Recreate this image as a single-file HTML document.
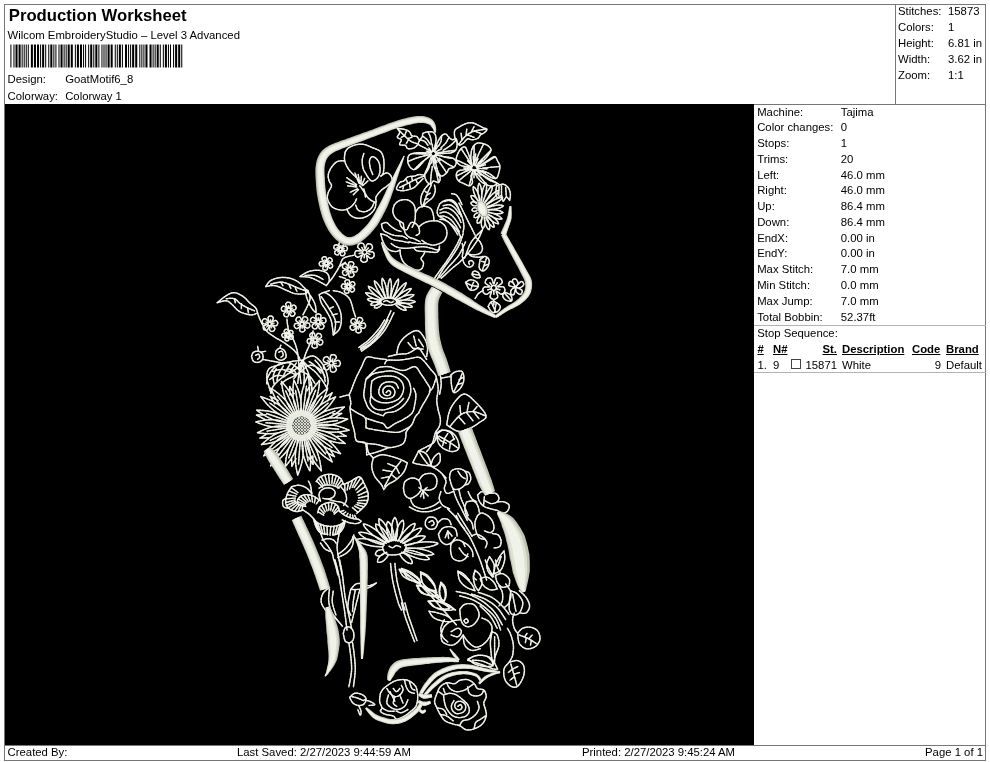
<!DOCTYPE html>
<html><head><meta charset="utf-8"><title>Production Worksheet</title>
<style>
html,body{margin:0;padding:0;background:#fff;}
body{width:990px;height:762px;position:relative;overflow:hidden;font-family:"Liberation Sans",sans-serif;color:#000;}
.abs{position:absolute;}
.t{position:absolute;font-size:11.33px;line-height:14px;height:14px;white-space:nowrap;}
.ttl{font-size:16.7px;font-weight:bold;line-height:20px;height:20px;}
.u{font-weight:bold;text-decoration:underline;}
.ln{position:absolute;background:#777;}
</style></head><body>

<div class="ln" style="left:4px;top:4px;width:982px;height:1px"></div>
<div class="ln" style="left:4px;top:4px;width:1px;height:757px"></div>
<div class="ln" style="left:985px;top:4px;width:1px;height:757px"></div>
<div class="ln" style="left:4px;top:760px;width:982px;height:1px"></div>
<div class="ln" style="left:4px;top:745px;width:982px;height:1px"></div>
<div class="ln" style="left:895px;top:4px;width:1px;height:100px"></div>
<div class="ln" style="left:754px;top:103.5px;width:232px;height:1px"></div>
<div class="ln" style="left:754px;top:325px;width:232px;height:1px;background:#b4b4b4"></div>
<div class="ln" style="left:754px;top:372px;width:232px;height:1px;background:#b4b4b4"></div>
<div id="txt" style="position:absolute;left:0;top:0;width:990px;height:762px;will-change:transform">
<div class="t ttl" style="left:8.8px;top:5.8px">Production Worksheet</div>
<div class="t " style="top:27.60px;left:7.60px;">Wilcom EmbroideryStudio – Level 3 Advanced</div>
<svg class="abs" style="left:0;top:0" width="200" height="70" viewBox="0 0 200 70"><g fill="#000"><rect x="10.40" y="44.5" width="1.02" height="23"/><rect x="13.47" y="44.5" width="1.02" height="23"/><rect x="15.51" y="44.5" width="2.05" height="23"/><rect x="18.58" y="44.5" width="2.05" height="23"/><rect x="21.65" y="44.5" width="1.02" height="23"/><rect x="23.70" y="44.5" width="1.02" height="23"/><rect x="25.74" y="44.5" width="1.02" height="23"/><rect x="27.79" y="44.5" width="1.02" height="23"/><rect x="30.86" y="44.5" width="2.05" height="23"/><rect x="33.93" y="44.5" width="2.05" height="23"/><rect x="37.00" y="44.5" width="2.05" height="23"/><rect x="40.07" y="44.5" width="1.02" height="23"/><rect x="42.11" y="44.5" width="2.05" height="23"/><rect x="45.18" y="44.5" width="1.02" height="23"/><rect x="48.25" y="44.5" width="1.02" height="23"/><rect x="50.30" y="44.5" width="2.05" height="23"/><rect x="53.37" y="44.5" width="1.02" height="23"/><rect x="55.41" y="44.5" width="1.02" height="23"/><rect x="58.48" y="44.5" width="1.02" height="23"/><rect x="60.53" y="44.5" width="2.05" height="23"/><rect x="63.60" y="44.5" width="1.02" height="23"/><rect x="65.64" y="44.5" width="1.02" height="23"/><rect x="67.69" y="44.5" width="2.05" height="23"/><rect x="70.76" y="44.5" width="2.05" height="23"/><rect x="74.85" y="44.5" width="1.02" height="23"/><rect x="76.90" y="44.5" width="2.05" height="23"/><rect x="79.96" y="44.5" width="2.05" height="23"/><rect x="83.03" y="44.5" width="1.02" height="23"/><rect x="85.08" y="44.5" width="1.02" height="23"/><rect x="88.15" y="44.5" width="1.02" height="23"/><rect x="90.19" y="44.5" width="2.05" height="23"/><rect x="93.26" y="44.5" width="1.02" height="23"/><rect x="95.31" y="44.5" width="2.05" height="23"/><rect x="98.38" y="44.5" width="1.02" height="23"/><rect x="101.45" y="44.5" width="1.02" height="23"/><rect x="103.49" y="44.5" width="1.02" height="23"/><rect x="105.54" y="44.5" width="1.02" height="23"/><rect x="107.59" y="44.5" width="2.05" height="23"/><rect x="110.65" y="44.5" width="2.05" height="23"/><rect x="114.75" y="44.5" width="1.02" height="23"/><rect x="116.79" y="44.5" width="1.02" height="23"/><rect x="118.84" y="44.5" width="2.05" height="23"/><rect x="121.91" y="44.5" width="1.02" height="23"/><rect x="124.98" y="44.5" width="2.05" height="23"/><rect x="128.05" y="44.5" width="1.02" height="23"/><rect x="130.09" y="44.5" width="1.02" height="23"/><rect x="132.14" y="44.5" width="2.05" height="23"/><rect x="135.21" y="44.5" width="2.05" height="23"/><rect x="139.30" y="44.5" width="1.02" height="23"/><rect x="141.34" y="44.5" width="1.02" height="23"/><rect x="143.39" y="44.5" width="1.02" height="23"/><rect x="145.44" y="44.5" width="2.05" height="23"/><rect x="149.53" y="44.5" width="2.05" height="23"/><rect x="152.60" y="44.5" width="1.02" height="23"/><rect x="154.64" y="44.5" width="1.02" height="23"/><rect x="156.69" y="44.5" width="2.05" height="23"/><rect x="159.76" y="44.5" width="1.02" height="23"/><rect x="162.83" y="44.5" width="1.02" height="23"/><rect x="164.87" y="44.5" width="2.05" height="23"/><rect x="167.94" y="44.5" width="1.02" height="23"/><rect x="169.99" y="44.5" width="1.02" height="23"/><rect x="173.06" y="44.5" width="1.02" height="23"/><rect x="175.10" y="44.5" width="2.05" height="23"/><rect x="178.17" y="44.5" width="2.05" height="23"/><rect x="181.24" y="44.5" width="1.02" height="23"/></g></svg>
<div class="t " style="top:72.30px;left:7.60px;">Design:</div>
<div class="t " style="top:72.30px;left:65.20px;">GoatMotif6_8</div>
<div class="t " style="top:88.80px;left:7.60px;">Colorway:</div>
<div class="t " style="top:88.80px;left:65.20px;">Colorway 1</div>
<div class="t " style="top:4.20px;left:898.00px;">Stitches:</div>
<div class="t " style="top:4.20px;left:948.00px;">15873</div>
<div class="t " style="top:20.05px;left:898.00px;">Colors:</div>
<div class="t " style="top:20.05px;left:948.00px;">1</div>
<div class="t " style="top:35.90px;left:898.00px;">Height:</div>
<div class="t " style="top:35.90px;left:948.00px;">6.81 in</div>
<div class="t " style="top:51.75px;left:898.00px;">Width:</div>
<div class="t " style="top:51.75px;left:948.00px;">3.62 in</div>
<div class="t " style="top:67.60px;left:898.00px;">Zoom:</div>
<div class="t " style="top:67.60px;left:948.00px;">1:1</div>
<div class="t " style="top:104.50px;left:757.20px;">Machine:</div>
<div class="t " style="top:104.50px;left:840.80px;">Tajima</div>
<div class="t " style="top:120.27px;left:757.20px;">Color changes:</div>
<div class="t " style="top:120.27px;left:840.80px;">0</div>
<div class="t " style="top:136.04px;left:757.20px;">Stops:</div>
<div class="t " style="top:136.04px;left:840.80px;">1</div>
<div class="t " style="top:151.81px;left:757.20px;">Trims:</div>
<div class="t " style="top:151.81px;left:840.80px;">20</div>
<div class="t " style="top:167.58px;left:757.20px;">Left:</div>
<div class="t " style="top:167.58px;left:840.80px;">46.0 mm</div>
<div class="t " style="top:183.35px;left:757.20px;">Right:</div>
<div class="t " style="top:183.35px;left:840.80px;">46.0 mm</div>
<div class="t " style="top:199.12px;left:757.20px;">Up:</div>
<div class="t " style="top:199.12px;left:840.80px;">86.4 mm</div>
<div class="t " style="top:214.89px;left:757.20px;">Down:</div>
<div class="t " style="top:214.89px;left:840.80px;">86.4 mm</div>
<div class="t " style="top:230.66px;left:757.20px;">EndX:</div>
<div class="t " style="top:230.66px;left:840.80px;">0.00 in</div>
<div class="t " style="top:246.43px;left:757.20px;">EndY:</div>
<div class="t " style="top:246.43px;left:840.80px;">0.00 in</div>
<div class="t " style="top:262.20px;left:757.20px;">Max Stitch:</div>
<div class="t " style="top:262.20px;left:840.80px;">7.0 mm</div>
<div class="t " style="top:277.97px;left:757.20px;">Min Stitch:</div>
<div class="t " style="top:277.97px;left:840.80px;">0.0 mm</div>
<div class="t " style="top:293.74px;left:757.20px;">Max Jump:</div>
<div class="t " style="top:293.74px;left:840.80px;">7.0 mm</div>
<div class="t " style="top:309.51px;left:757.20px;">Total Bobbin:</div>
<div class="t " style="top:309.51px;left:840.80px;">52.37ft</div>
<div class="t " style="top:325.90px;left:757.20px;">Stop Sequence:</div>
<div class="t u" style="top:341.90px;left:757.50px;">#</div>
<div class="t u" style="top:341.90px;left:773.00px;">N#</div>
<div class="t u" style="top:341.90px;right:153.00px;">St.</div>
<div class="t u" style="top:341.90px;left:842.00px;">Description</div>
<div class="t u" style="top:341.90px;left:912.00px;">Code</div>
<div class="t u" style="top:341.90px;left:946.00px;">Brand</div>
<div class="t " style="top:357.80px;left:757.50px;">1.</div>
<div class="t " style="top:357.80px;left:773.00px;">9</div>
<div class="abs" style="left:791px;top:359px;width:8px;height:8px;border:1px solid #444;background:#fff"></div>
<div class="t " style="top:357.80px;right:153.00px;">15871</div>
<div class="t " style="top:357.80px;left:842.00px;">White</div>
<div class="t " style="top:357.80px;right:49.00px;">9</div>
<div class="t " style="top:357.80px;left:946.00px;">Default</div>
<div class="t " style="top:744.60px;left:7.60px;">Created By:</div>
<div class="t " style="top:744.60px;left:237.00px;">Last Saved: 2/27/2023 9:44:59 AM</div>
<div class="t " style="top:744.60px;left:582.00px;">Printed: 2/27/2023 9:45:24 AM</div>
<div class="t " style="top:744.60px;right:7.00px;">Page 1 of 1</div>
</div>
<svg class="abs" style="left:5px;top:104px" width="749" height="641" viewBox="5 104 749 641">
<rect x="5" y="104" width="749" height="641" fill="#000"/>
<defs><path id="thinlines" d="M315.4 425.7Q329.9 421.6 349.1 430.2Q328.6 435.0 315.2 428.2 M315.3 427.0 L338.6 429.2 M314.8 429.7Q329.5 429.9 345.2 443.5Q324.4 442.2 313.8 432.1 M314.4 430.9 L335.6 439.5 M313.5 432.7Q328.1 436.5 340.5 453.7Q320.2 447.5 312.0 434.8 M312.8 433.8 L331.9 447.5 M311.4 435.4Q324.5 442.4 332.2 461.9Q314.3 451.1 309.5 437.1 M310.5 436.3 L325.4 453.9 M308.2 437.8Q319.4 449.2 321.4 470.9Q306.7 454.8 305.9 438.9 M307.1 438.4 L317.0 460.9 M305.2 439.1Q312.7 450.9 309.9 471.0Q300.0 453.3 302.7 439.5 M304.0 439.4 L308.1 461.0 M301.6 439.6Q306.2 455.0 297.7 475.1Q292.3 454.0 299.1 439.4 M300.3 439.6 L298.5 464.2 M297.5 439.0Q297.7 452.0 285.2 466.9Q286.2 447.4 295.1 438.1 M296.3 438.6 L288.8 457.8 M294.0 437.5Q289.1 453.4 270.6 465.9Q277.8 444.8 291.9 435.9 M292.9 436.7 L277.4 457.0 M291.3 435.3Q283.6 448.5 263.7 455.8Q275.2 438.0 289.7 433.3 M290.5 434.4 L272.0 449.2 M289.4 432.7Q280.8 442.3 261.5 444.6Q275.5 431.1 288.3 430.4 M288.8 431.6 L270.3 440.4 M287.8 429.1Q276.8 435.9 257.5 432.7Q274.8 423.6 287.4 426.6 M287.6 427.8 L267.1 431.1 M287.4 425.7Q274.3 429.8 255.8 421.9Q275.3 417.0 287.6 423.2 M287.4 424.5 L265.8 422.7 M287.8 422.2Q273.2 422.8 256.7 410.1Q277.5 410.3 288.6 419.8 M288.2 421.0 L266.6 413.5 M289.3 418.5Q273.7 414.4 260.8 396.6Q281.8 403.0 290.8 416.5 M290.0 417.5 L269.7 403.0 M291.6 415.6Q278.3 408.0 270.7 388.0Q288.8 399.4 293.6 414.0 M292.6 414.8 L277.5 396.3 M294.5 413.4Q283.5 402.5 281.4 381.3Q295.9 396.9 296.8 412.4 M295.6 412.8 L285.8 391.0 M297.9 412.1Q290.7 400.2 293.9 380.2Q303.4 398.1 300.4 411.6 M299.1 411.8 L295.5 390.2 M301.9 411.6Q298.2 395.2 308.0 375.1Q312.3 397.1 304.5 411.9 M303.2 411.7 L306.5 386.2 M305.4 412.2Q305.7 396.5 319.7 380.2Q318.4 401.7 307.8 413.1 M306.6 412.6 L315.6 390.2 M308.4 413.5Q311.5 400.1 327.7 388.2Q322.0 407.5 310.5 414.9 M309.4 414.1 L321.9 396.4 M311.3 415.7Q317.3 404.1 335.6 396.9Q325.3 413.7 312.9 417.6 M312.1 416.6 L328.0 403.2 M313.7 418.9Q323.9 408.7 344.4 407.0Q329.1 420.8 314.7 421.2 M314.3 420.1 L334.9 411.1 M315.0 422.4Q327.5 415.3 347.7 419.0Q329.3 428.3 315.4 424.9 M315.3 423.6 L337.5 420.5 M337.7 431.7 L346.2 436.1 L336.6 436.4 M329.5 448.7 L334.5 456.7 L326.2 452.2 M312.8 456.0 L313.1 464.4 L308.7 457.2 M295.9 458.6 L291.8 466.3 L291.6 457.6 M278.1 453.9 L270.0 459.0 L274.6 450.6 M269.0 437.7 L260.0 438.1 L267.7 433.4 M265.0 419.5 L256.4 415.0 L266.1 414.8 M274.9 403.8 L270.2 396.3 L278.0 400.5 M289.9 394.9 L289.6 386.4 L294.0 393.7 M307.2 390.7 L311.5 382.6 L311.7 391.8 M324.3 397.8 L332.2 392.8 L327.7 401.0 M333.0 413.8 L341.7 413.4 L334.2 418.0 M386.2 359.4 L384.8 359.3 L382.8 359.1 L380.6 358.8 L378.2 358.5 L376.1 358.3 L374.1 357.9 L372.1 357.4 L370.1 356.9 L368.3 356.8 L366.7 357.3 L365.4 358.4 L364.4 360.2 L363.5 362.2 L362.6 364.5 L361.7 366.7 L360.5 368.8 L359.4 371.0 L358.2 373.4 L357.0 375.8 L355.9 378.2 L354.8 380.9 L353.6 383.7 L352.6 386.6 L351.6 389.2 L350.8 391.2 L350.3 392.4 L349.9 393.1 L349.6 393.5 L349.4 394.0 L349.4 394.8 L349.5 396.2 L349.9 397.8 L350.3 399.5 L350.6 401.2 L350.8 402.7 L350.8 403.9 L350.6 404.9 L350.3 405.9 L350.1 407.0 L350.1 408.5 L350.2 410.5 L350.5 412.7 L350.8 415.2 L351.1 417.7 L351.5 420.1 L352.0 422.4 L352.6 424.8 L353.3 427.2 L353.9 429.4 L354.4 431.6 L354.8 433.7 L355.0 435.9 L355.3 437.9 L355.8 439.6 L356.6 441.0 L358.0 441.7 L359.9 441.9 L362.0 442.0 L363.9 442.2 L365.3 443.2 L366.0 445.1 L366.4 447.7 L366.6 450.6 L366.6 453.1 L366.7 454.9 M384.8 363.8 L385.0 363.2 L385.4 362.4 L385.8 361.5 L386.6 360.7 L387.6 360.2 L389.2 360.0 L391.1 360.0 L393.3 360.1 L395.5 360.2 L397.7 360.2 L400.0 360.0 L402.4 359.7 L404.8 359.4 L407.1 359.0 L409.3 358.7 L411.4 358.3 L413.4 357.9 L415.3 357.4 L417.1 357.2 L418.7 357.3 L420.1 357.7 L421.2 358.4 L422.3 359.4 L423.4 360.5 L424.5 361.6 L425.6 362.9 L426.8 364.3 L427.9 365.8 L429.1 367.3 L430.2 368.8 L431.5 370.3 L432.9 371.7 L434.2 373.2 L435.3 374.6 L436.0 376.0 L436.2 377.4 L436.0 378.7 L435.5 380.0 L435.0 381.3 L434.6 382.5 L434.2 383.8 L433.8 385.0 L433.3 386.2 L432.9 387.4 L432.4 388.3 L431.8 389.1 L431.2 389.8 L430.5 390.4 L429.9 390.8 L429.5 391.2 M388.4 356.5 L389.6 356.2 L391.4 355.8 L393.5 355.3 L395.7 354.8 L397.7 354.4 L399.8 354.2 L401.9 354.0 L404.0 353.9 L406.0 353.8 L407.9 353.4 L409.5 352.7 L411.1 351.8 L412.6 350.9 L413.9 350.0 L415.1 349.3 L416.0 348.8 L416.7 348.2 L417.4 347.8 L418.0 347.7 L418.7 347.9 L419.5 348.6 L420.4 349.7 L421.3 351.0 L422.2 352.4 L423.0 353.7 L423.8 354.9 L424.7 356.2 L425.5 357.5 L426.1 358.7 L426.6 359.4 M436.0 376.0 L436.4 377.7 L436.9 380.1 L437.5 382.9 L437.9 385.7 L438.2 388.3 L438.1 390.7 L437.7 393.0 L437.3 395.4 L436.9 397.7 L436.7 399.9 L436.8 402.0 L437.1 404.1 L437.4 406.1 L437.8 408.1 L438.2 410.0 L438.6 411.8 L439.1 413.6 L439.6 415.3 L440.1 417.0 L440.3 418.6 L440.4 420.2 L440.4 421.6 L440.3 423.0 L440.0 424.4 L439.6 425.8 L439.0 427.2 L438.1 428.6 L437.1 430.0 L436.1 431.4 L435.3 433.1 L434.7 434.9 L434.2 437.0 L433.7 439.1 L433.1 441.2 L432.4 443.2 L431.3 445.1 L430.0 447.2 L428.7 449.1 L427.4 450.7 L426.6 451.8 M374.6 370.3 L375.1 369.8 L375.8 369.2 L376.6 368.5 L377.7 367.9 L379.0 367.4 L380.7 367.0 L382.7 366.8 L384.9 366.6 L387.1 366.5 L389.1 366.7 L390.9 367.0 L392.7 367.7 L394.5 368.4 L396.1 369.0 L397.7 369.5 L399.2 369.9 L400.6 370.2 L401.9 370.4 L403.4 370.4 L405.0 370.3 L406.9 369.6 L409.0 368.6 L411.2 367.5 L413.3 366.8 L415.1 366.7 L416.5 367.4 L417.7 368.7 L418.7 370.4 L419.8 372.2 L420.8 373.9 L422.0 375.5 L423.3 377.3 L424.5 379.1 L425.6 380.9 L426.6 382.5 L427.6 384.0 L428.6 385.5 L429.4 386.8 L430.0 388.2 L430.2 389.8 L430.0 391.4 L429.3 393.2 L428.5 395.0 L427.5 396.8 L426.6 398.4 L425.8 400.0 L424.9 401.4 L424.0 402.8 L423.1 404.2 L422.3 405.6 L421.5 407.2 L420.6 408.9 L419.8 410.5 L419.2 411.9 L418.7 412.9 M374.6 370.3 L373.8 371.1 L372.6 372.3 L371.3 373.6 L369.9 374.9 L368.9 376.0 L368.1 376.8 L367.4 377.4 L366.9 377.9 L366.4 378.6 L366.0 379.6 L365.6 381.1 L365.3 382.8 L365.0 384.7 L364.8 386.6 L364.5 388.3 L364.3 389.8 L364.1 391.3 L363.9 392.7 L363.8 394.1 L363.8 395.5 L364.1 397.0 L364.4 398.5 L364.9 400.0 L365.5 401.4 L366.0 402.7 L366.5 404.0 L366.9 405.2 L367.5 406.4 L368.1 407.5 L368.9 408.5 L369.8 409.5 L370.8 410.4 L372.0 411.3 L373.3 412.1 L374.6 412.9 L376.3 413.6 L378.3 414.2 L380.3 414.9 L382.1 415.4 L383.3 415.7 M350.1 408.5 L351.1 409.1 L352.4 409.9 L354.0 410.9 L355.7 411.9 L357.3 412.9 L359.0 413.8 L360.8 414.7 L362.6 415.6 L364.1 416.7 L365.3 417.9 L365.9 419.4 L366.1 421.1 L366.0 422.9 L366.0 424.6 L366.0 425.8 L366.0 426.6 L365.8 427.1 L365.7 427.4 L365.9 427.7 L366.7 428.0 L368.2 428.5 L370.3 428.9 L372.8 429.4 L375.3 429.8 L377.5 430.2 L379.6 430.5 L381.6 430.8 L383.6 431.1 L385.6 431.4 L387.6 431.6 L389.7 431.9 L391.8 432.1 L393.9 432.3 L395.9 432.4 L397.7 432.3 L399.4 432.0 L400.9 431.5 L402.3 430.9 L403.6 430.2 L405.0 429.5 L406.4 428.7 L407.8 428.0 L409.1 427.2 L410.4 426.2 L411.5 425.1 L412.4 423.7 L413.1 422.0 L413.8 420.3 L414.4 418.6 L415.1 417.2 L415.8 416.0 L416.7 415.0 L417.5 414.1 L418.2 413.4 L418.7 412.9 M365.3 417.9 L366.8 418.4 L369.0 419.2 L371.5 420.0 L374.0 420.8 L376.1 421.5 L377.8 422.0 L379.4 422.4 L380.8 422.7 L382.1 423.1 L383.3 423.7 L384.3 424.5 L385.1 425.7 L385.8 426.8 L386.6 427.7 L387.6 428.0 L388.9 427.7 L390.2 426.9 L391.7 425.8 L393.3 424.7 L394.9 423.7 L396.5 422.8 L398.2 422.0 L400.0 421.2 L401.8 420.4 L403.5 419.3 L405.3 418.2 L407.3 417.1 L409.1 415.8 L410.8 414.4 L412.2 412.9 L413.2 411.0 L413.9 409.0 L414.3 406.9 L414.7 404.7 L415.1 402.7 L415.4 400.9 L415.7 399.0 L415.8 397.3 L415.9 395.6 L415.8 394.1 L415.5 392.7 L415.0 391.3 L414.5 390.1 L414.0 389.0 L413.6 388.3 M356.6 441.0 L357.8 441.3 L359.6 441.7 L361.6 442.2 L363.8 442.7 L366.0 443.2 L368.2 443.5 L370.4 443.7 L372.8 444.0 L375.2 444.2 L377.5 444.6 L379.9 445.2 L382.3 445.9 L384.7 446.6 L387.0 447.2 L389.1 447.5 L391.0 447.5 L392.9 447.3 L394.6 446.9 L396.2 446.5 L397.7 446.1 L399.1 445.6 L400.4 445.1 L401.6 444.6 L402.6 444.0 L403.5 443.2 L404.2 442.2 L404.7 441.1 L405.1 439.8 L405.4 438.6 L405.7 437.4 L405.9 436.2 L405.9 435.1 L405.9 434.0 L406.0 432.8 L406.4 431.6 L407.2 430.3 L408.4 428.8 L409.6 427.3 L410.7 426.0 L411.5 425.1 M366.7 454.9 L368.2 454.5 L370.2 453.9 L372.6 453.3 L375.1 452.6 L377.5 451.8 L380.0 451.0 L382.7 450.0 L385.3 449.0 L387.5 448.1 L389.1 447.5 M386.2 392.6 L386.5 392.3 L386.9 391.8 L387.4 391.2 L387.9 390.7 L388.4 390.5 L388.8 390.5 L389.4 390.7 L389.9 391.1 L390.3 391.5 L390.5 391.9 L390.6 392.4 L390.6 393.1 L390.4 393.7 L390.2 394.3 L389.8 394.8 L389.3 395.1 L388.5 395.4 L387.7 395.6 L386.9 395.6 L386.2 395.5 L385.5 395.3 L384.9 395.0 L384.2 394.5 L383.7 394.0 L383.3 393.4 L383.1 392.6 L382.9 391.7 L382.9 390.8 L383.0 389.8 L383.3 389.0 L383.8 388.3 L384.4 387.6 L385.2 387.0 L386.0 386.5 L386.9 386.1 L387.9 386.0 L388.9 386.0 L390.0 386.1 L391.1 386.4 L392.0 386.9 L392.8 387.5 L393.5 388.3 L394.1 389.2 L394.6 390.2 L394.9 391.2 L394.9 392.2 L394.8 393.3 L394.5 394.4 L394.0 395.4 L393.4 396.2 L392.6 396.9 L391.7 397.5 L390.6 397.9 L389.5 398.2 L388.4 398.4 L387.2 398.5 L386.0 398.5 L384.8 398.4 L383.6 398.1 L382.6 397.7 L381.7 397.1 L380.8 396.3 L380.0 395.4 L379.4 394.4 L379.0 393.4 L378.8 392.3 L378.8 391.1 L379.0 389.9 L379.3 388.7 L379.7 387.6 L380.2 386.6 L380.8 385.6 L381.5 384.7 L382.4 383.9 L383.3 383.3 L384.4 382.7 L385.7 382.3 L387.1 382.0 L388.5 381.9 L389.8 381.8 L391.1 381.9 L392.3 382.0 L393.5 382.3 L394.6 382.7 L395.6 383.3 L396.4 384.1 L397.1 385.3 L397.7 386.5 L398.1 387.6 L398.5 388.3 M371.8 381.1 L372.5 380.6 L373.5 379.8 L374.7 378.9 L376.1 378.1 L377.5 377.5 L379.1 377.0 L380.8 376.6 L382.6 376.4 L384.4 376.2 L386.2 376.0 L388.0 376.0 L389.8 376.0 L391.6 376.2 L393.3 376.4 L394.9 376.8 L396.2 377.3 L397.5 377.9 L398.7 378.6 L399.7 379.5 L400.6 380.4 L401.5 381.4 L402.2 382.5 L402.8 383.7 L403.2 384.9 L403.5 386.1 L403.7 387.4 L403.6 388.7 L403.5 390.1 L403.2 391.4 L402.8 392.6 L402.3 393.9 L401.7 395.1 L401.0 396.3 L400.2 397.4 L399.2 398.4 L398.0 399.3 L396.6 400.2 L395.1 400.9 L393.6 401.5 L392.0 402.0 L390.3 402.4 L388.5 402.7 L386.7 402.8 L385.0 402.8 L383.3 402.7 L381.7 402.6 L380.2 402.3 L378.8 401.8 L377.4 401.3 L376.1 400.6 L374.8 399.8 L373.6 398.9 L372.5 397.9 L371.6 396.5 L371.0 394.8 L370.8 392.4 L370.9 389.2 L371.2 386.0 L371.6 383.1 L371.8 381.1 M366.0 379.6 L366.9 378.8 L368.2 377.6 L369.8 376.2 L371.5 374.9 L373.2 373.9 L375.1 373.2 L377.1 372.7 L379.2 372.3 L381.3 372.0 L383.3 371.7 L385.1 371.4 L386.9 371.1 L388.6 370.9 L390.3 370.9 L392.0 371.0 L393.7 371.3 L395.5 371.7 L397.3 372.3 L399.0 373.1 L400.6 373.9 L402.2 374.8 L403.8 375.8 L405.3 377.0 L406.7 378.3 L407.9 379.6 L408.8 381.2 L409.5 382.9 L410.1 384.7 L410.5 386.5 L410.7 388.3 L410.8 390.0 L410.7 391.8 L410.4 393.5 L409.9 395.2 L409.3 397.0 L408.5 398.7 L407.4 400.6 L406.2 402.4 L404.9 404.1 L403.5 405.6 L402.0 407.0 L400.3 408.4 L398.5 409.5 L396.6 410.6 L394.9 411.4 L393.0 411.9 L391.1 412.2 L389.2 412.4 L387.6 412.5 L386.2 412.9 L385.2 413.4 L384.5 414.0 L384.0 414.7 L383.6 415.3 L383.3 415.7 M371.0 394.8 L370.9 395.9 L370.6 397.5 L370.3 399.3 L370.1 401.2 L370.3 402.7 L370.8 404.1 L371.5 405.4 L372.5 406.6 L373.5 407.7 L374.6 408.5 L375.9 409.1 L377.3 409.5 L378.8 409.8 L380.4 409.9 L381.9 410.0 L383.3 409.9 L384.7 409.7 L386.1 409.4 L387.5 409.0 L389.1 408.5 L390.8 407.9 L392.6 407.1 L394.4 406.2 L396.2 405.2 L397.7 404.2 L399.2 403.0 L400.5 401.7 L401.8 400.4 L402.8 399.2 L403.5 398.4 M340.0 397.0 L340.8 396.8 L342.0 396.5 L343.3 396.1 L344.7 395.8 L345.8 395.5 L346.7 395.3 L347.5 395.2 L348.3 395.0 L348.9 394.9 L349.4 394.8 M345.3 151.9 L345.6 151.3 L346.1 150.5 L346.7 149.6 L347.5 148.6 L348.5 147.8 L349.8 147.1 L351.4 146.3 L353.1 145.6 L354.9 145.0 L356.6 144.6 L358.2 144.3 L359.8 144.2 L361.4 144.2 L363.0 144.3 L364.6 144.6 L366.3 145.0 L367.9 145.7 L369.6 146.4 L371.2 147.1 L372.7 147.8 L374.3 148.4 L375.9 149.0 L377.4 149.6 L378.8 150.3 L380.0 151.1 L380.9 152.0 L381.7 153.0 L382.3 154.2 L382.8 155.4 L383.2 156.7 L383.6 158.2 L383.8 159.8 L383.9 161.4 L384.0 163.1 L384.0 164.8 L384.0 166.5 L383.9 168.3 L383.7 170.0 L383.5 171.6 L383.2 172.9 L382.8 173.9 L382.3 174.7 L381.7 175.3 L381.2 175.7 L380.8 176.1 M345.3 151.9 L345.1 152.7 L344.9 154.0 L344.6 155.4 L344.5 156.9 L344.4 158.3 L344.6 159.6 L344.8 160.9 L345.1 162.2 L345.5 163.5 L346.1 164.8 L346.7 166.1 L347.5 167.5 L348.3 168.8 L349.2 170.1 L350.1 171.3 L351.0 172.3 L352.0 173.3 L353.0 174.2 L354.0 175.2 L354.9 176.1 L356.0 177.2 L357.1 178.3 L358.2 179.4 L359.1 180.3 L359.8 181.0 M363.8 153.5 L363.6 154.3 L363.2 155.5 L362.8 156.9 L362.4 158.4 L362.2 159.9 L362.2 161.5 L362.3 163.1 L362.4 164.8 L362.7 166.5 L363.0 168.0 L363.5 169.5 L364.1 170.8 L364.9 172.1 L365.6 173.3 L366.3 174.5 L366.9 175.6 L367.6 176.7 L368.2 177.7 L368.8 178.6 L369.5 179.3 L370.1 180.0 L370.7 180.5 L371.3 180.8 L372.0 181.0 L372.7 181.0 L373.6 180.7 L374.7 180.2 L375.7 179.5 L376.7 178.7 L377.6 177.7 L378.3 176.7 L378.9 175.5 L379.4 174.1 L379.8 172.7 L380.0 171.3 L380.1 169.7 L380.0 168.0 L379.8 166.3 L379.6 164.6 L379.2 163.2 L378.7 162.0 L378.1 160.9 L377.4 159.9 L376.7 159.0 L376.0 158.3 L375.2 157.7 L374.3 157.2 L373.5 156.8 L372.6 156.6 L371.9 156.7 L371.3 157.1 L370.7 157.8 L370.2 158.6 L369.7 159.7 L369.5 160.8 L369.4 162.0 L369.5 163.5 L369.7 165.0 L370.0 166.6 L370.3 168.0 L370.7 169.5 L371.3 171.0 L371.9 172.4 L372.4 173.6 L372.7 174.5 M344.4 160.8 L343.4 160.8 L342.0 160.8 L340.3 160.9 L338.6 161.1 L337.2 161.6 L335.9 162.4 L334.7 163.4 L333.5 164.6 L332.5 165.9 L331.5 167.2 L330.6 168.6 L329.9 170.1 L329.2 171.6 L328.6 173.1 L328.3 174.5 L328.2 175.9 L328.2 177.2 L328.5 178.5 L328.8 179.8 L329.1 181.0 L329.6 182.0 L330.2 182.9 L330.9 183.8 L331.4 184.8 L331.5 185.8 L331.2 187.0 L330.5 188.3 L329.7 189.6 L328.9 191.0 L328.3 192.3 L327.9 193.6 L327.6 194.9 L327.4 196.2 L327.3 197.4 L327.5 198.7 L327.8 200.1 L328.4 201.5 L329.2 202.8 L329.9 204.1 L330.7 205.2 L331.4 206.1 L332.1 206.8 L332.9 207.4 L333.7 207.9 L334.7 208.4 L336.0 208.9 L337.5 209.4 L339.0 209.7 L340.6 210.0 L342.0 210.1 L343.4 210.0 L344.7 209.8 L346.0 209.5 L347.3 209.0 L348.5 208.4 L349.7 207.7 L351.0 206.7 L352.2 205.7 L353.2 204.6 L354.1 203.6 L354.9 202.5 L355.5 201.4 L355.9 200.3 L356.3 199.4 L356.6 198.7 M346.9 209.2 L347.3 210.1 L347.8 211.2 L348.4 212.5 L349.2 213.8 L350.1 214.9 L351.2 215.8 L352.4 216.6 L353.7 217.2 L355.1 217.8 L356.6 218.1 L358.1 218.3 L359.8 218.3 L361.5 218.1 L363.1 217.8 L364.6 217.3 L366.1 216.7 L367.5 216.0 L368.8 215.2 L370.0 214.2 L371.1 213.3 L372.1 212.3 L373.1 211.1 L373.9 210.0 L374.6 208.8 L375.2 207.6 L375.5 206.4 L375.7 205.1 L375.8 203.8 L375.9 202.7 L376.0 202.0 M355.8 205.2 L356.0 205.9 L356.4 206.9 L356.8 208.1 L357.4 209.2 L358.2 210.1 L359.2 210.7 L360.5 211.2 L361.9 211.5 L363.3 211.7 L364.6 211.7 L366.0 211.4 L367.4 210.9 L368.8 210.2 L370.0 209.4 L371.1 208.4 L372.0 207.2 L372.8 205.8 L373.4 204.2 L374.0 202.9 L374.3 202.0 M380.8 176.1 L381.6 175.6 L382.7 174.8 L384.0 173.9 L385.3 173.2 L386.5 172.9 L387.4 172.9 L388.3 173.3 L389.1 173.8 L389.9 174.5 L390.5 175.3 L391.1 176.2 L391.6 177.4 L392.1 178.6 L392.3 179.8 L392.1 181.0 L391.6 182.0 L390.7 183.0 L389.6 183.9 L388.4 184.9 L387.3 185.8 L386.1 186.8 L384.7 187.7 L383.4 188.6 L382.0 189.6 L380.8 190.7 L379.7 191.9 L378.5 193.2 L377.5 194.6 L376.6 195.9 L376.0 197.1 L375.7 198.3 L375.8 199.5 L376.1 200.6 L376.2 201.4 L376.0 202.0 L375.3 202.1 L374.4 201.9 L373.3 201.5 L372.2 201.0 L371.1 200.4 L370.1 199.6 L369.1 198.7 L368.0 197.7 L367.1 196.6 L366.3 195.5 L365.6 194.2 L365.0 192.7 L364.5 191.2 L364.1 189.9 L363.8 189.0 M359.8 185.8 L360.1 186.2 L360.6 186.8 L361.1 187.5 L361.7 188.3 L362.2 189.0 L362.7 189.8 L363.3 190.6 L363.8 191.4 L364.3 192.3 L364.6 193.1 L364.9 194.0 L365.1 194.9 L365.3 195.8 L365.4 196.6 L365.5 197.1 M356.5 184.5 L355.0 183.5 L352.9 182.0 L350.5 180.3 L348.3 178.8 L346.9 177.7 M356.2 185.7 L354.7 185.1 L352.4 184.2 L349.9 183.3 L347.6 182.4 L346.1 181.8 M356.7 186.9 L355.4 186.8 L353.3 186.5 L351.1 186.2 L349.1 186.0 L347.7 185.8 M357.5 188.9 L356.3 189.4 L354.7 190.2 L352.9 191.0 L351.2 191.8 L350.1 192.3 M358.4 189.6 L357.7 190.4 L356.5 191.5 L355.2 192.8 L354.1 193.9 L353.3 194.7 M358.9 183.1 L358.3 181.5 L357.4 179.2 L356.4 176.7 L355.6 174.4 L354.9 172.9 M359.9 183.5 L359.6 182.2 L359.2 180.1 L358.8 177.9 L358.4 175.9 L358.2 174.5 M360.8 184.0 L360.9 182.8 L361.1 181.1 L361.2 179.1 L361.3 177.3 L361.4 176.1 M361.8 184.8 L362.2 183.8 L362.9 182.4 L363.6 180.9 L364.2 179.5 L364.6 178.5 M362.8 185.5 L363.6 184.8 L364.7 183.8 L366.0 182.7 L367.1 181.6 L367.9 181.0 M430.4 151.1 L429.6 150.6 L428.6 150.0 L427.3 149.3 L426.0 148.6 L424.7 147.8 L423.3 147.1 L421.7 146.4 L420.2 145.7 L418.9 144.8 L418.3 143.8 L418.5 142.5 L419.3 140.9 L420.4 139.3 L421.6 137.8 L422.3 136.5 L422.6 135.6 L422.6 134.9 L422.6 134.3 L422.7 133.8 L423.1 133.3 L424.1 132.8 L425.4 132.4 L426.9 132.0 L428.3 131.8 L429.6 131.7 L430.7 131.7 L431.8 131.8 L432.8 132.1 L433.7 132.6 L434.4 133.3 L435.0 134.2 L435.5 135.3 L435.8 136.6 L436.0 138.1 L436.1 139.7 L435.8 141.9 L435.4 144.5 L434.8 147.1 L434.3 149.4 L434.0 151.1 M434.4 151.1 L434.9 149.8 L435.5 148.0 L436.2 146.0 L436.9 143.9 L437.7 142.2 L438.4 140.6 L439.2 139.2 L440.1 137.8 L440.9 136.7 L441.7 135.7 L442.5 135.0 L443.4 134.5 L444.2 134.2 L445.0 134.0 L445.8 134.1 L446.5 134.4 L447.1 135.1 L447.7 135.9 L448.4 136.7 L449.0 137.3 L449.6 137.9 L450.2 138.5 L450.9 139.0 L451.5 139.5 L452.2 139.7 L453.0 139.7 L453.9 139.3 L454.8 138.9 L455.6 138.7 L456.3 138.9 L456.7 139.8 L456.9 141.1 L457.1 142.6 L457.1 144.1 L457.1 145.4 L456.9 146.5 L456.7 147.6 L456.4 148.6 L456.0 149.5 L455.5 150.3 L454.9 150.9 L454.2 151.5 L453.4 151.9 L452.5 152.3 L451.4 152.7 L450.0 153.0 L448.4 153.2 L446.7 153.3 L445.0 153.4 L443.3 153.5 L441.7 153.5 L440.0 153.5 L438.4 153.5 L437.0 153.5 L436.1 153.5 M436.1 155.1 L437.3 155.3 L439.0 155.6 L441.0 156.0 L443.1 156.4 L444.9 156.7 L446.7 157.0 L448.5 157.2 L450.2 157.5 L451.7 157.9 L453.0 158.3 L454.1 159.0 L454.9 159.7 L455.6 160.6 L456.1 161.5 L456.3 162.4 L456.2 163.3 L455.8 164.4 L455.3 165.5 L454.6 166.4 L453.8 167.2 L453.0 167.7 L452.0 168.0 L450.9 168.2 L449.8 168.4 L449.0 168.8 L448.4 169.5 L448.0 170.3 L447.6 171.2 L447.2 172.1 L446.6 172.9 L445.7 173.7 L444.7 174.5 L443.7 175.3 L442.6 175.9 L441.7 176.1 L441.0 176.0 L440.3 175.5 L439.6 174.8 L439.1 173.9 L438.5 172.9 L437.9 171.6 L437.4 170.0 L436.9 168.3 L436.5 166.5 L436.1 164.8 L435.7 163.1 L435.3 161.2 L434.9 159.4 L434.7 157.8 L434.4 156.7 M432.8 155.9 L432.9 157.1 L433.0 158.9 L433.1 160.9 L433.3 162.9 L433.6 164.8 L434.1 166.5 L434.8 168.2 L435.5 169.9 L436.2 171.5 L436.9 172.9 L437.6 174.1 L438.4 175.1 L439.2 175.9 L439.8 176.8 L440.1 177.7 L440.1 178.8 L440.0 180.0 L439.6 181.1 L439.1 182.0 L438.5 182.6 L437.7 182.6 L436.7 182.2 L435.6 181.6 L434.6 181.1 L433.6 181.0 L432.9 181.4 L432.3 182.2 L431.7 183.1 L431.1 183.9 L430.4 184.2 L429.6 184.0 L428.7 183.5 L427.8 182.8 L427.0 181.9 L426.4 181.0 L425.8 179.9 L425.3 178.7 L424.9 177.4 L424.7 175.9 L424.7 174.5 L425.1 173.0 L425.7 171.5 L426.5 169.8 L427.3 168.2 L428.0 166.4 L428.7 164.4 L429.4 162.2 L430.2 160.0 L430.8 158.1 L431.2 156.7 M430.4 155.1 L429.6 155.7 L428.5 156.6 L427.3 157.7 L426.0 158.8 L424.7 159.9 L423.6 161.2 L422.4 162.6 L421.3 164.0 L420.2 165.3 L419.1 166.4 L418.1 167.4 L417.1 168.2 L416.1 168.9 L415.1 169.4 L414.2 169.6 L413.4 169.6 L412.5 169.2 L411.7 168.7 L410.9 168.0 L410.2 167.2 L409.6 166.3 L409.0 165.2 L408.4 164.0 L408.0 162.7 L407.8 161.6 L407.7 160.4 L407.7 159.1 L407.9 157.9 L408.2 156.8 L408.6 155.9 L409.1 155.2 L409.8 154.6 L410.6 154.2 L411.5 153.8 L412.6 153.5 L414.0 153.2 L415.5 153.0 L417.2 152.8 L419.0 152.7 L420.7 152.7 L422.6 152.7 L424.6 152.8 L426.6 152.9 L428.4 153.1 L429.6 153.2 M397.3 128.4 L397.7 129.0 L398.3 129.7 L399.0 130.6 L399.5 131.6 L399.7 132.5 L399.4 133.4 L398.8 134.5 L398.0 135.5 L397.4 136.5 L397.3 137.3 L397.8 137.9 L398.7 138.4 L399.8 138.7 L400.8 139.1 L401.3 139.7 L401.2 140.6 L400.7 141.7 L400.1 142.8 L399.6 143.8 L399.7 144.6 L400.4 145.0 L401.6 145.1 L403.0 145.1 L404.3 145.2 L405.4 145.4 L406.0 146.0 L406.4 146.7 L406.7 147.5 L407.1 148.2 L407.8 148.6 L408.9 148.8 L410.2 148.8 L411.6 148.6 L413.0 148.3 L414.2 147.8 L415.3 147.2 L416.2 146.3 L417.1 145.3 L417.8 144.4 L418.3 143.8 M397.3 128.4 L398.2 128.5 L399.4 128.6 L400.9 128.8 L402.4 129.0 L403.7 129.2 L405.0 129.6 L406.2 130.0 L407.4 130.5 L408.5 131.1 L409.4 131.7 L410.0 132.4 L410.5 133.3 L410.8 134.2 L411.2 135.1 L411.8 135.7 L412.7 136.0 L413.7 136.1 L414.8 136.2 L415.8 136.3 L416.7 136.5 L417.3 137.1 L417.9 137.8 L418.4 138.6 L418.8 139.3 L419.1 139.7 M398.1 129.2 L399.0 130.1 L400.2 131.4 L401.6 132.9 L403.1 134.4 L404.5 135.7 L405.8 136.9 L407.1 138.2 L408.4 139.4 L409.7 140.5 L411.0 141.4 L412.4 142.1 L413.9 142.7 L415.4 143.1 L416.6 143.5 L417.5 143.8 M404.5 135.7 L404.8 135.1 L405.2 134.2 L405.6 133.2 L405.9 132.3 L406.2 131.7 M407.8 138.6 L408.4 138.4 L409.3 138.1 L410.3 137.8 L411.2 137.5 L411.8 137.3 M404.5 135.7 L404.1 136.0 L403.3 136.3 L402.5 136.7 L401.8 137.1 L401.3 137.3 M408.6 139.3 L408.2 140.0 L407.7 141.0 L407.1 142.1 L406.5 143.1 L406.2 143.8 M424.7 175.3 L424.0 175.2 L422.9 174.9 L421.6 174.7 L420.3 174.5 L419.1 174.5 L418.1 174.7 L417.2 175.0 L416.3 175.4 L415.3 175.8 L414.2 176.1 L413.0 176.3 L411.7 176.3 L410.3 176.4 L408.9 176.6 L407.8 176.9 L406.8 177.6 L406.0 178.4 L405.2 179.4 L404.5 180.3 L403.7 181.0 L402.9 181.4 L402.1 181.5 L401.3 181.7 L400.5 182.0 L399.7 182.6 L398.9 183.6 L397.9 185.0 L397.1 186.6 L396.5 188.0 L396.5 189.0 L397.0 189.7 L398.1 190.2 L399.4 190.4 L400.8 190.6 L402.1 190.7 L403.2 190.7 L404.3 190.6 L405.5 190.4 L406.6 190.2 L407.8 189.8 L409.0 189.5 L410.4 189.1 L411.7 188.6 L413.0 188.1 L414.2 187.4 L415.3 186.6 L416.3 185.6 L417.3 184.6 L418.2 183.5 L419.1 182.6 L420.0 181.7 L421.0 180.7 L421.8 179.8 L422.6 179.1 L423.1 178.5 M399.7 187.4 L400.8 186.9 L402.3 186.1 L404.2 185.2 L406.0 184.3 L407.8 183.4 L409.4 182.6 L411.0 181.7 L412.6 180.9 L414.2 180.1 L415.9 179.3 L417.6 178.6 L419.5 177.8 L421.3 177.1 L422.8 176.5 L423.9 176.1 M407.8 183.4 L407.5 182.8 L407.2 181.9 L406.8 180.9 L406.4 180.0 L406.2 179.3 M412.6 181.0 L412.5 180.4 L412.3 179.6 L412.1 178.7 L411.9 177.9 L411.8 177.4 M409.4 182.9 L409.5 183.6 L409.7 184.7 L409.9 185.9 L410.1 187.0 L410.2 187.7 M415.9 179.3 L416.1 180.0 L416.5 180.9 L416.9 181.9 L417.2 182.8 L417.5 183.4 M403.7 185.5 L403.6 186.0 L403.4 186.8 L403.2 187.7 L403.1 188.5 L402.9 189.0 M428.8 184.2 L428.2 184.8 L427.4 185.7 L426.5 186.8 L425.6 187.9 L424.7 189.0 L424.0 190.2 L423.3 191.5 L422.6 192.8 L422.0 194.2 L421.5 195.5 L421.2 196.8 L420.9 198.2 L420.7 199.5 L420.7 200.8 L420.7 202.0 L420.9 203.1 L421.3 204.3 L421.7 205.3 L422.1 206.2 L422.3 206.8 M422.3 206.8 L423.0 206.2 L423.9 205.2 L424.9 204.1 L426.1 203.0 L427.2 202.0 L428.3 201.0 L429.5 200.1 L430.8 199.2 L431.9 198.2 L432.8 197.1 L433.6 195.9 L434.2 194.6 L434.7 193.3 L435.0 191.9 L435.3 190.7 L435.3 189.4 L435.1 188.1 L434.9 186.8 L434.6 185.8 L434.4 185.0 M431.2 185.0 L430.7 186.2 L429.9 187.8 L429.0 189.7 L428.0 191.8 L427.2 193.9 L426.3 196.2 L425.4 198.8 L424.5 201.4 L423.7 203.6 L423.1 205.2 M426.4 192.3 L426.0 192.0 L425.6 191.7 L425.1 191.3 L424.6 190.9 L424.3 190.7 M426.4 195.5 L427.0 195.1 L427.9 194.6 L428.9 194.0 L429.8 193.4 L430.4 193.1 M424.7 199.5 L425.2 199.4 L426.0 199.2 L426.8 199.0 L427.5 198.9 L428.0 198.7 M459.5 145.4 L458.9 144.7 L458.0 143.7 L457.0 142.5 L456.1 141.2 L455.5 139.7 L455.0 138.1 L454.6 136.2 L454.4 134.2 L454.4 132.4 L454.6 130.9 L455.2 129.7 L456.1 128.9 L457.2 128.1 L458.3 127.5 L459.5 126.8 L460.7 126.1 L462.0 125.4 L463.3 124.7 L464.6 124.1 L466.0 123.6 L467.3 123.2 L468.6 122.9 L469.9 122.8 L471.2 122.7 L472.4 122.8 L473.6 123.1 L474.8 123.5 L475.9 124.1 L477.0 124.7 L478.1 125.2 L479.1 125.7 L480.1 126.2 L481.1 126.7 L482.0 127.2 L482.9 127.6 L483.9 128.0 L484.9 128.3 L485.9 128.5 L486.6 128.8 L487.0 129.2 L486.9 129.8 L486.5 130.5 L485.9 131.2 L485.2 131.9 L484.5 132.5 L483.8 133.0 L483.0 133.5 L482.1 133.9 L481.2 134.4 L480.5 134.9 L480.0 135.5 L479.6 136.2 L479.2 136.9 L478.7 137.6 L478.1 138.1 L477.1 138.6 L476.0 139.0 L474.8 139.4 L473.6 139.6 L472.4 139.7 L471.4 139.7 L470.4 139.4 L469.4 139.0 L468.5 138.8 L467.6 138.9 L466.7 139.5 L465.9 140.3 L465.1 141.2 L464.3 142.2 L463.5 143.0 L462.7 143.6 L461.7 144.2 L460.8 144.7 L460.0 145.1 L459.5 145.4 M458.7 144.6 L459.4 143.6 L460.4 142.1 L461.6 140.5 L463.0 138.8 L464.3 137.3 L465.7 136.0 L467.2 134.8 L468.7 133.6 L470.5 132.6 L472.4 131.7 L474.9 130.9 L477.9 130.3 L480.9 129.9 L483.5 129.5 L485.4 129.2 M466.0 135.7 L466.1 134.7 L466.3 133.3 L466.5 131.7 L466.6 130.2 L466.8 129.2 M470.8 132.8 L471.3 131.9 L472.0 130.5 L472.8 129.1 L473.5 127.7 L474.0 126.8 M467.6 134.9 L468.6 135.3 L470.0 135.8 L471.6 136.4 L473.1 137.0 L474.0 137.3 M474.0 130.9 L475.0 131.2 L476.5 131.8 L478.1 132.4 L479.5 132.9 L480.5 133.3 M461.9 139.7 L461.8 138.8 L461.6 137.3 L461.4 135.7 L461.2 134.3 L461.1 133.3 M472.4 166.4 L472.2 165.3 L471.8 163.8 L471.4 162.0 L471.0 160.1 L470.8 158.3 L470.8 156.7 L470.9 154.9 L471.1 153.3 L471.3 151.7 L471.6 150.3 L472.0 149.0 L472.4 148.0 L472.9 147.0 L473.4 146.2 L474.0 145.4 L474.7 144.7 L475.5 144.1 L476.3 143.6 L477.1 143.2 L478.1 143.0 L479.1 142.9 L480.3 143.0 L481.5 143.2 L482.6 143.5 L483.7 143.8 L484.8 144.1 L485.9 144.6 L486.9 145.0 L487.8 145.6 L488.6 146.2 L489.3 146.9 L490.0 147.6 L490.6 148.4 L491.0 149.3 L491.0 150.3 L490.6 151.4 L489.9 152.7 L489.0 154.1 L487.9 155.5 L487.0 156.7 L486.1 157.8 L485.1 158.8 L484.2 159.7 L483.2 160.6 L482.1 161.6 L481.0 162.6 L479.6 163.7 L478.4 164.8 L477.2 165.8 L476.5 166.4 M476.5 167.2 L477.5 166.7 L478.9 165.9 L480.5 165.1 L482.2 164.1 L483.7 163.2 L485.2 162.2 L486.8 161.1 L488.3 160.1 L489.8 159.1 L491.0 158.3 L492.1 157.7 L492.9 157.2 L493.7 156.8 L494.4 156.6 L495.1 156.7 L495.6 157.1 L496.1 157.8 L496.6 158.8 L497.0 159.8 L497.5 160.8 L498.0 161.7 L498.6 162.8 L499.2 163.9 L499.7 165.1 L499.9 166.4 L499.8 167.9 L499.6 169.7 L499.2 171.4 L498.7 173.1 L498.3 174.5 L497.9 175.7 L497.5 176.7 L497.1 177.5 L496.6 178.2 L495.9 178.5 L494.9 178.6 L493.9 178.4 L492.7 178.0 L491.4 177.5 L490.2 176.9 L489.0 176.3 L487.7 175.4 L486.4 174.6 L485.0 173.7 L483.7 172.9 L482.3 172.1 L480.8 171.4 L479.4 170.7 L478.2 170.1 L477.3 169.6 M476.5 169.6 L477.5 170.6 L478.9 171.9 L480.6 173.4 L482.3 174.9 L483.7 176.1 L485.0 177.1 L486.2 178.0 L487.3 178.8 L488.4 179.5 L489.4 180.2 L490.3 180.6 L491.2 181.0 L492.0 181.2 L492.7 181.5 L493.4 181.8 L494.2 182.1 L495.1 182.4 L495.9 182.7 L496.4 183.0 L496.7 183.4 L496.5 183.9 L496.0 184.5 L495.3 185.0 L494.4 185.5 L493.4 185.8 L492.3 185.9 L491.1 185.9 L489.7 185.7 L488.3 185.4 L487.0 185.0 L485.7 184.4 L484.3 183.7 L483.0 182.9 L481.7 182.0 L480.5 181.0 L479.4 179.8 L478.3 178.5 L477.2 177.1 L476.3 175.7 L475.7 174.5 L475.2 173.3 L475.0 172.2 L474.9 171.2 L474.9 170.3 L474.8 169.6 M473.2 169.6 L473.0 170.5 L472.6 171.8 L472.2 173.2 L471.8 174.7 L471.6 176.1 L471.7 177.5 L472.0 178.9 L472.3 180.2 L472.5 181.5 L472.4 182.6 L472.1 183.5 L471.5 184.4 L470.9 185.1 L470.1 185.6 L469.2 185.8 L468.2 185.7 L467.1 185.2 L465.9 184.6 L464.7 184.0 L463.5 183.4 L462.5 182.9 L461.4 182.5 L460.4 182.1 L459.5 181.6 L458.7 181.0 L458.0 180.1 L457.3 179.2 L456.8 178.2 L456.5 177.1 L456.3 176.1 L456.2 175.1 L456.4 174.0 L456.7 173.0 L457.2 172.0 L457.9 171.3 L458.8 170.7 L460.1 170.3 L461.5 170.1 L462.9 169.9 L464.3 169.6 L465.9 169.4 L467.5 169.2 L469.2 169.1 L470.6 168.9 L471.6 168.8 M471.6 167.2 L470.7 167.1 L469.5 167.0 L468.0 166.8 L466.5 166.6 L465.2 166.4 L463.9 166.2 L462.7 166.0 L461.5 165.7 L460.5 165.3 L459.5 164.8 L458.6 164.1 L457.8 163.2 L457.1 162.2 L456.6 161.1 L456.3 159.9 L456.2 158.7 L456.5 157.4 L456.9 156.0 L457.4 154.7 L457.9 153.5 L458.4 152.4 L459.0 151.3 L459.7 150.3 L460.4 149.4 L461.1 148.6 L461.9 148.0 L462.7 147.4 L463.6 147.0 L464.4 146.9 L465.2 147.0 L465.7 147.6 L466.2 148.4 L466.7 149.5 L467.1 150.7 L467.6 151.9 L468.1 153.0 L468.6 154.3 L469.1 155.6 L469.5 157.0 L470.0 158.3 L470.5 159.9 L471.0 161.5 L471.4 163.2 L471.8 164.6 L472.1 165.6 M496.7 185.8 L497.6 185.5 L498.9 185.0 L500.4 184.6 L501.8 184.2 L503.1 184.2 L504.2 184.5 L505.3 185.0 L506.3 185.7 L507.2 186.5 L508.0 187.4 L508.7 188.5 L509.3 189.8 L509.8 191.1 L510.2 192.5 L510.4 193.9 L510.4 195.3 L510.3 196.8 L510.0 198.2 L509.8 199.5 L509.6 200.4 M496.7 185.8 L496.5 186.7 L496.3 188.0 L496.0 189.4 L495.9 190.9 L495.9 192.3 L496.0 193.6 L496.2 195.0 L496.5 196.3 L497.0 197.3 L497.5 197.9 L498.2 197.8 L499.0 197.2 L500.0 196.3 L500.8 195.6 L501.5 195.5 L502.0 196.3 L502.3 197.7 L502.5 199.2 L502.7 200.5 L503.1 201.2 L503.7 200.9 L504.3 199.9 L505.0 198.7 L505.7 197.6 L506.4 197.1 L507.1 197.4 L507.8 198.0 L508.5 198.9 L509.2 199.8 L509.6 200.4 M501.5 185.8 L501.5 187.2 L501.5 189.2 L501.5 191.4 L501.5 193.3 L501.5 194.7 M505.6 187.4 L505.7 188.8 L505.9 190.8 L506.1 193.0 L506.2 195.0 L506.4 196.3 M499.1 186.6 L499.0 188.0 L498.9 190.0 L498.8 192.2 L498.7 194.2 L498.6 195.5 M487.0 177.7 L487.8 178.2 L489.1 178.7 L490.5 179.5 L492.0 180.2 L493.4 181.0 L494.8 181.8 L496.3 182.7 L497.8 183.6 L499.0 184.4 L499.9 185.0 M434.2 151.5 L434.9 150.5 L435.8 149.2 L436.9 147.7 L437.8 146.3 L438.5 145.4 M435.1 152.3 L436.1 151.7 L437.6 150.9 L439.2 150.0 L440.7 149.2 L441.7 148.6 M435.7 153.1 L436.9 152.9 L438.8 152.6 L441.0 152.3 L442.9 152.1 L444.1 151.9 M435.5 154.3 L436.7 154.7 L438.4 155.2 L440.4 155.8 L442.1 156.3 L443.3 156.7 M434.6 155.3 L435.5 156.1 L436.7 157.4 L438.1 158.7 L439.3 159.9 L440.1 160.8 M433.8 155.7 L434.3 156.7 L435.0 158.2 L435.7 159.9 L436.4 161.4 L436.9 162.4 M433.2 156.1 L433.4 157.3 L433.7 159.1 L434.0 161.0 L434.3 162.8 L434.4 164.0 M432.4 155.9 L432.2 157.0 L432.0 158.6 L431.7 160.4 L431.4 162.1 L431.2 163.2 M431.4 154.7 L430.8 155.2 L429.8 156.1 L428.8 157.0 L427.8 157.8 L427.2 158.3 M430.8 154.1 L429.9 154.4 L428.5 154.8 L427.0 155.2 L425.7 155.6 L424.7 155.9 M431.2 152.9 L430.5 152.6 L429.4 152.2 L428.2 151.7 L427.1 151.3 L426.4 151.1 M431.8 152.1 L431.4 151.4 L430.7 150.5 L429.9 149.4 L429.2 148.5 L428.8 147.8 M432.7 151.3 L432.7 150.2 L432.6 148.8 L432.5 147.1 L432.4 145.6 L432.3 144.6 M433.4 151.3 L433.7 150.2 L434.1 148.8 L434.6 147.1 L435.0 145.6 L435.3 144.6 M473.8 165.2 L473.7 163.9 L473.6 162.0 L473.5 159.9 L473.3 158.0 L473.2 156.7 M474.4 164.4 L474.6 162.7 L474.9 160.3 L475.2 157.6 L475.5 155.1 L475.7 153.5 M475.1 165.6 L475.5 164.5 L476.2 162.9 L476.9 161.1 L477.6 159.4 L478.1 158.3 M476.1 166.0 L477.0 165.1 L478.3 163.7 L479.8 162.2 L481.2 160.9 L482.1 159.9 M476.9 167.2 L478.2 166.9 L480.1 166.3 L482.2 165.7 L484.1 165.2 L485.4 164.8 M477.3 168.2 L478.7 168.3 L480.9 168.5 L483.3 168.6 L485.5 168.7 L487.0 168.8 M476.9 169.2 L478.2 169.8 L480.1 170.6 L482.2 171.5 L484.1 172.3 L485.4 172.9 M475.9 169.8 L476.7 170.7 L477.9 171.9 L479.3 173.3 L480.5 174.5 L481.3 175.3 M474.8 170.5 L475.2 171.6 L475.8 173.2 L476.4 175.0 L476.9 176.6 L477.3 177.7 M474.0 170.5 L474.0 171.6 L474.0 173.2 L474.0 175.0 L474.0 176.6 L474.0 177.7 M473.2 170.1 L472.9 171.0 L472.3 172.3 L471.7 173.8 L471.2 175.2 L470.8 176.1 M472.4 169.4 L471.7 170.1 L470.6 171.0 L469.4 172.1 L468.3 173.0 L467.6 173.7 M471.8 168.8 L470.8 169.2 L469.3 169.7 L467.7 170.4 L466.2 170.9 L465.2 171.3 M471.4 168.0 L470.2 168.0 L468.5 168.0 L466.5 168.0 L464.7 168.0 L463.5 168.0 M471.8 167.0 L470.8 166.6 L469.3 165.9 L467.7 165.1 L466.2 164.5 L465.2 164.0 M472.4 166.2 L471.7 165.4 L470.6 164.2 L469.4 162.8 L468.3 161.6 L467.6 160.8 M394.4 204.7 L395.0 204.1 L395.8 203.2 L396.8 202.2 L398.0 201.3 L399.2 200.7 L400.7 200.2 L402.3 199.8 L404.1 199.6 L405.8 199.6 L407.3 199.8 L408.8 200.4 L410.3 201.2 L411.6 202.3 L412.8 203.4 L413.8 204.7 L414.5 206.1 L414.9 207.7 L415.2 209.3 L415.3 211.1 L415.4 212.8 L415.4 214.6 L415.3 216.4 L415.2 218.3 L414.9 220.1 L414.6 221.7 L414.2 223.1 L413.6 224.4 L413.0 225.6 L412.5 226.6 L412.2 227.3 M394.4 204.7 L394.1 205.6 L393.7 206.8 L393.2 208.3 L392.9 209.8 L392.8 211.2 L393.0 212.5 L393.4 213.9 L393.9 215.3 L394.5 216.5 L395.2 217.6 L395.9 218.5 L396.7 219.2 L397.5 219.8 L398.4 220.3 L399.2 220.9 L400.1 221.4 L401.1 222.0 L402.0 222.5 L402.7 223.0 L403.3 223.3 M415.4 212.8 L415.8 212.1 L416.3 211.0 L417.0 209.9 L417.7 208.8 L418.6 207.9 L419.7 207.3 L421.0 206.9 L422.4 206.5 L423.8 206.3 L425.1 206.3 L426.3 206.5 L427.6 206.8 L428.8 207.3 L429.8 208.0 L430.8 208.7 L431.5 209.6 L432.0 210.7 L432.5 211.9 L432.9 213.2 L433.2 214.4 L433.5 215.7 L433.7 217.2 L433.8 218.7 L433.9 220.0 L434.0 220.9 M418.6 227.3 L419.2 226.7 L420.1 225.9 L421.1 225.0 L422.2 224.1 L423.5 223.3 L424.9 222.6 L426.5 222.0 L428.2 221.5 L429.9 221.1 L431.6 220.9 L433.2 220.7 L434.9 220.8 L436.6 220.9 L438.2 221.2 L439.6 221.7 L441.0 222.3 L442.3 223.2 L443.4 224.2 L444.5 225.3 L445.3 226.5 L445.9 227.8 L446.4 229.3 L446.8 230.8 L446.9 232.3 L446.9 233.8 L446.7 235.2 L446.4 236.6 L445.8 237.9 L445.2 239.2 L444.5 240.3 L443.7 241.1 L442.8 241.9 L441.8 242.5 L440.8 243.0 L439.6 243.5 L438.5 244.0 L437.2 244.4 L435.8 244.8 L434.5 245.0 L433.2 245.1 L431.9 245.0 L430.5 244.8 L429.2 244.4 L427.9 244.0 L426.7 243.5 L425.6 242.9 L424.4 242.2 L423.4 241.4 L422.5 240.7 L421.9 240.3 M399.2 220.9 L399.5 221.8 L399.9 223.2 L400.4 224.7 L401.0 226.2 L401.7 227.3 L402.5 228.2 L403.5 228.9 L404.6 229.4 L405.7 229.7 L406.5 229.7 L407.2 229.3 L407.7 228.6 L408.1 227.6 L408.5 226.6 L408.9 225.7 L409.4 224.9 L409.8 224.2 L410.3 223.4 L410.8 222.8 L411.4 222.5 L412.1 222.3 L412.9 222.4 L413.8 222.5 L414.6 222.8 L415.4 223.3 L416.1 223.9 L416.9 224.6 L417.6 225.4 L418.2 226.4 L418.6 227.3 L419.0 228.4 L419.3 229.6 L419.5 230.9 L419.6 232.0 L419.4 233.0 L419.0 233.7 L418.3 234.3 L417.5 234.8 L416.7 235.1 L416.2 235.4 M403.3 223.3 L403.5 224.6 L403.7 226.4 L404.0 228.5 L404.4 230.5 L404.9 232.2 L405.5 233.5 L406.3 234.6 L407.1 235.5 L408.0 236.3 L408.9 237.0 L409.8 237.5 L410.7 237.8 L411.7 238.0 L412.7 238.3 L413.8 238.6 L415.1 239.2 L416.6 240.0 L418.1 240.7 L419.3 241.4 L420.3 241.9 M381.5 224.1 L382.1 223.8 L383.1 223.3 L384.1 222.8 L385.3 222.5 L386.3 222.5 L387.3 222.9 L388.3 223.7 L389.2 224.7 L390.2 225.7 L391.2 226.5 L392.1 227.2 L393.1 227.9 L394.1 228.6 L395.0 229.2 L396.0 229.7 L397.1 230.2 L398.2 230.6 L399.3 230.9 L400.2 231.2 L400.9 231.4 M381.5 224.1 L381.6 224.9 L381.8 226.1 L382.1 227.4 L382.5 228.7 L383.1 229.7 L383.8 230.6 L384.7 231.3 L385.7 231.9 L386.8 232.4 L387.9 233.0 L389.1 233.5 L390.3 234.1 L391.6 234.6 L393.0 235.0 L394.4 235.4 L396.0 235.6 L397.7 235.8 L399.4 235.9 L401.0 236.0 L402.5 236.2 L403.7 236.6 L404.9 237.2 L405.9 237.8 L406.7 238.3 L407.3 238.6 M380.7 233.8 L381.4 234.0 L382.5 234.2 L383.7 234.5 L385.0 234.9 L386.3 235.4 L387.5 236.1 L388.8 237.0 L390.0 237.9 L391.4 238.8 L392.8 239.4 L394.3 239.9 L395.9 240.3 L397.5 240.5 L399.2 240.8 L400.9 241.1 L402.6 241.4 L404.5 241.8 L406.3 242.1 L407.8 242.5 L408.9 242.7 M380.7 233.8 L381.0 234.9 L381.4 236.5 L381.9 238.4 L382.5 240.2 L383.1 241.9 L383.8 243.3 L384.6 244.8 L385.4 246.1 L386.3 247.3 L387.1 248.3 L388.0 249.1 L388.9 249.7 L389.8 250.2 L390.6 250.5 L391.2 250.8 M391.2 243.5 L391.8 244.0 L392.6 244.6 L393.6 245.4 L394.8 246.1 L396.0 246.7 L397.4 247.2 L398.9 247.6 L400.6 247.9 L402.3 248.2 L404.1 248.3 L405.9 248.3 L407.9 248.2 L409.8 248.0 L411.8 247.7 L413.8 247.5 L415.8 247.3 L417.7 247.1 L419.7 246.9 L421.6 246.7 L423.5 246.7 L425.2 246.9 L426.9 247.2 L428.5 247.6 L430.1 248.0 L431.6 248.3 L433.0 248.7 L434.5 249.3 L435.9 249.7 L437.1 250.0 L438.0 249.9 L438.7 249.4 L439.1 248.5 L439.3 247.5 L439.5 246.5 L439.6 245.9 M408.9 241.9 L410.0 242.1 L411.5 242.5 L413.3 242.9 L415.2 243.2 L417.0 243.5 L419.0 243.6 L421.2 243.6 L423.5 243.6 L425.4 243.5 L426.7 243.5 M413.8 247.5 L414.1 248.0 L414.5 248.7 L415.1 249.5 L415.9 250.2 L417.0 250.8 L418.5 251.1 L420.4 251.3 L422.5 251.4 L424.7 251.4 L426.7 251.6 L428.8 251.8 L430.9 252.1 L433.0 252.3 L434.9 252.5 L436.4 252.4 L437.5 251.9 L438.3 251.2 L438.9 250.4 L439.3 249.6 L439.6 249.1 M400.1 249.9 L400.1 250.8 L400.2 252.1 L400.3 253.5 L400.5 255.0 L400.9 256.4 L401.3 257.7 L401.8 259.1 L402.4 260.4 L403.2 261.7 L404.1 262.9 L405.2 264.0 L406.4 265.1 L407.8 266.0 L409.2 266.9 L410.6 267.7 L411.9 268.4 L413.2 269.1 L414.6 269.6 L415.8 270.0 L417.0 270.2 L418.1 270.2 L419.2 270.0 L420.2 269.7 L421.1 269.2 L421.9 268.5 L422.5 267.6 L422.9 266.5 L423.3 265.2 L423.5 264.0 L423.5 262.9 L423.2 262.0 L422.6 261.1 L421.9 260.4 L421.3 259.6 L421.1 258.8 L421.2 258.0 L421.7 257.2 L422.3 256.4 L423.0 255.6 L423.5 254.8 L423.9 254.0 L424.3 253.3 L424.6 252.6 L424.9 252.0 L425.1 251.6 M391.2 250.8 L391.8 250.9 L392.8 251.1 L393.9 251.4 L395.0 251.5 L396.0 251.6 L396.9 251.4 L397.9 251.0 L398.8 250.6 L399.5 250.2 L400.1 249.9 M439.6 203.9 L439.3 204.9 L438.7 206.4 L438.0 208.1 L437.5 209.7 L437.2 211.2 L437.2 212.3 L437.4 213.4 L437.7 214.3 L438.2 215.2 L438.8 216.0 L439.7 216.7 L440.8 217.3 L442.0 217.9 L443.2 218.5 L444.5 219.2 L445.7 220.1 L447.0 221.0 L448.3 222.0 L449.7 223.0 L451.0 224.1 L452.3 225.3 L453.7 226.6 L455.1 227.9 L456.3 229.2 L457.4 230.6 L458.3 232.0 L459.1 233.5 L459.8 234.9 L460.3 236.1 L460.7 237.0 M439.6 203.9 L440.3 203.4 L441.2 202.7 L442.2 201.9 L443.3 201.2 L444.5 200.7 L445.7 200.3 L447.0 200.0 L448.4 199.8 L449.7 199.7 L451.0 199.8 L452.1 200.2 L453.1 200.7 L454.1 201.4 L455.0 202.2 L455.8 203.1 L456.6 204.1 L457.2 205.4 L457.8 206.7 L458.4 208.1 L459.0 209.5 L459.7 211.1 L460.4 212.7 L461.1 214.3 L461.7 216.0 L462.3 217.6 L462.7 219.3 L463.2 220.9 L463.5 222.6 L463.7 224.2 L463.9 225.7 L463.9 227.2 L463.7 228.7 L463.5 230.1 L463.2 231.3 L463.1 232.2 M460.7 237.0 L460.0 238.3 L459.2 240.0 L458.2 242.1 L457.1 244.4 L455.8 246.7 L454.4 249.1 L452.8 251.7 L451.1 254.4 L449.4 257.1 L447.7 259.6 L446.1 262.1 L444.4 264.4 L442.7 266.7 L441.1 268.9 L439.6 271.0 L438.3 272.9 L436.9 274.8 L435.7 276.5 L434.7 278.0 L434.0 279.0 M463.1 233.8 L462.6 235.3 L461.9 237.4 L461.1 239.9 L460.2 242.6 L459.0 245.1 L457.7 247.6 L456.1 250.2 L454.4 252.9 L452.6 255.5 L451.0 258.0 L449.3 260.4 L447.6 262.7 L445.9 265.0 L444.3 267.2 L442.9 269.3 L441.5 271.5 L440.2 273.8 L439.0 275.9 L438.0 277.7 L437.2 279.0 M465.5 241.9 L464.7 243.7 L463.5 246.2 L462.2 249.1 L460.6 252.1 L459.0 254.8 L457.3 257.2 L455.4 259.4 L453.4 261.7 L451.3 263.9 L449.3 266.1 L447.2 268.6 L445.0 271.2 L442.8 273.7 L441.0 275.9 L439.6 277.4 M472.0 248.3 L470.7 249.9 L468.9 252.1 L466.7 254.7 L464.5 257.3 L462.3 259.6 L460.1 261.7 L457.8 263.7 L455.4 265.6 L453.1 267.5 L451.0 269.3 L448.8 271.3 L446.5 273.4 L444.4 275.4 L442.6 277.0 L441.3 278.2 M459.0 203.1 L459.9 204.8 L461.2 207.3 L462.6 210.2 L464.1 213.2 L465.5 216.0 L466.8 218.7 L468.2 221.5 L469.6 224.2 L470.9 226.8 L472.0 228.9 L472.9 230.7 L473.7 232.3 L474.3 233.6 L474.8 234.6 L475.2 235.4 M482.5 229.7 L481.4 230.7 L480.0 232.2 L478.3 233.8 L476.6 235.5 L475.2 237.0 L474.1 238.3 L473.0 239.6 L472.1 240.8 L471.2 242.1 L470.4 243.5 L469.6 245.0 L468.9 246.7 L468.3 248.4 L467.7 250.0 L467.1 251.6 L466.5 253.1 L466.0 254.6 L465.5 256.0 L465.0 257.2 L464.7 258.0 M482.5 229.7 L482.0 230.9 L481.3 232.6 L480.4 234.6 L479.5 236.7 L478.4 238.6 L477.2 240.7 L475.7 242.9 L474.2 245.1 L472.9 247.0 L472.0 248.3 M475.2 237.0 L475.9 237.7 L476.9 238.5 L478.1 239.6 L479.2 240.7 L480.1 241.9 L480.8 243.1 L481.4 244.4 L482.0 245.8 L482.3 247.1 L482.5 248.3 L482.4 249.5 L482.0 250.5 L481.5 251.6 L480.9 252.4 L480.1 253.2 L479.0 253.8 L477.7 254.2 L476.2 254.5 L474.8 254.7 L473.6 254.8 L472.4 254.8 L471.3 254.6 L470.3 254.4 L469.4 254.1 L468.7 254.0 M462.3 256.4 L462.5 257.3 L462.7 258.7 L463.0 260.2 L463.4 261.6 L463.9 262.9 L464.5 263.9 L465.3 264.9 L466.2 265.8 L467.1 266.5 L467.9 266.9 L468.8 267.1 L469.7 267.1 L470.5 266.8 L471.3 266.5 L472.0 266.1 L472.5 265.6 L473.0 265.0 L473.3 264.2 L473.6 263.5 L473.6 262.9 L473.4 262.3 L472.9 261.7 L472.3 261.1 L471.7 260.7 L471.2 260.5 L470.6 260.5 L470.0 260.8 L469.5 261.2 L469.0 261.6 L468.7 262.1 L468.7 262.5 L468.9 263.1 L469.1 263.7 L469.4 264.2 L469.5 264.5 M462.3 243.5 L462.4 244.4 L462.6 245.6 L462.8 247.1 L463.0 248.6 L463.1 249.9 L463.0 251.3 L462.8 252.8 L462.6 254.3 L462.4 255.5 L462.3 256.4 M468.7 254.0 L469.1 254.3 L469.6 254.9 L470.3 255.4 L471.1 256.0 L472.0 256.4 L473.1 256.7 L474.4 256.9 L475.8 257.1 L477.2 257.2 L478.4 257.2 L479.6 257.2 L480.7 257.0 L481.8 256.8 L482.6 256.5 L483.3 256.4 M480.1 259.6 L480.7 259.1 L481.7 258.3 L482.8 257.4 L483.9 256.7 L484.9 256.4 L485.8 256.6 L486.8 257.1 L487.7 257.8 L488.5 258.7 L488.9 259.6 L489.2 260.8 L489.2 262.1 L489.0 263.5 L488.6 264.9 L488.1 266.1 L487.4 267.3 L486.4 268.6 L485.4 269.7 L484.3 270.5 L483.3 271.0 L482.3 270.9 L481.4 270.5 L480.5 269.8 L479.7 268.8 L479.2 267.7 L479.1 266.3 L479.3 264.5 L479.6 262.5 L479.9 260.8 L480.1 259.6 M482.5 270.2 L482.8 269.1 L483.3 267.6 L483.9 266.0 L484.4 264.3 L484.9 262.9 L485.3 261.7 L485.7 260.5 L486.0 259.5 L486.3 258.7 L486.5 258.0 M483.6 266.1 L484.2 265.9 L485.0 265.5 L485.9 265.1 L486.8 264.7 L487.3 264.5 M484.6 262.1 L484.1 261.9 L483.5 261.8 L482.8 261.6 L482.1 261.4 L481.7 261.3 M478.4 272.6 L477.9 272.3 L477.0 271.8 L476.1 271.3 L475.2 271.0 L474.4 271.0 L473.7 271.3 L473.0 271.9 L472.5 272.7 L472.1 273.5 L472.0 274.2 L472.2 274.9 L472.8 275.6 L473.5 276.4 L474.4 277.0 L475.2 277.4 L476.2 277.7 L477.3 277.9 L478.5 277.9 L479.5 277.8 L480.1 277.4 L480.1 276.7 L479.8 275.6 L479.3 274.4 L478.8 273.3 L478.4 272.6 M472.8 274.2 L473.8 274.3 L475.2 274.5 L476.8 274.7 L478.3 274.9 L479.2 275.0 M465.5 282.3 L466.2 281.9 L467.1 281.3 L468.1 280.6 L469.3 280.1 L470.4 279.8 L471.5 279.9 L472.7 280.1 L473.9 280.4 L475.1 280.9 L476.0 281.5 L476.8 282.1 L477.5 282.9 L478.0 283.8 L478.4 284.7 L478.4 285.5 L478.2 286.4 L477.7 287.3 L476.9 288.2 L476.1 289.0 L475.2 289.5 L474.2 289.9 L473.0 290.2 L471.8 290.3 L470.6 290.1 L469.5 289.5 L468.6 288.4 L467.6 286.8 L466.8 285.0 L466.0 283.4 L465.5 282.3 M466.3 283.1 L467.1 283.4 L468.2 284.0 L469.4 284.5 L470.7 285.1 L472.0 285.5 L473.2 285.8 L474.5 286.0 L475.8 286.1 L476.9 286.2 L477.6 286.3 M472.0 285.5 L472.2 285.0 L472.6 284.3 L473.0 283.5 L473.3 282.8 L473.6 282.3 M472.0 285.5 L471.8 286.0 L471.7 286.7 L471.5 287.5 L471.3 288.2 L471.2 288.7 M504.3 292.0 L505.3 292.4 L506.7 292.9 L508.3 293.6 L509.7 294.3 L510.8 295.2 L511.4 296.3 L511.8 297.6 L512.0 298.9 L511.9 300.1 L511.6 300.9 L510.8 301.2 L509.7 301.2 L508.3 300.9 L507.0 300.5 L505.9 300.1 L505.0 299.4 L504.2 298.7 L503.5 297.8 L503.0 296.9 L502.7 296.0 L502.7 295.1 L503.1 294.2 L503.5 293.3 L504.0 292.5 L504.3 292.0 M504.3 292.8 L505.3 293.9 L506.7 295.5 L508.3 297.3 L509.8 298.9 L510.8 300.1 M488.1 306.5 L488.5 305.8 L489.1 304.7 L489.8 303.4 L490.6 302.4 L491.4 301.7 L492.2 301.4 L493.2 301.4 L494.3 301.6 L495.3 302.0 L496.2 302.5 L497.2 303.1 L498.2 303.8 L499.1 304.7 L499.9 305.6 L500.3 306.5 L500.2 307.5 L499.9 308.6 L499.3 309.7 L498.6 310.6 L497.8 311.4 L496.9 311.9 L495.7 312.3 L494.5 312.5 L493.3 312.5 L492.2 312.2 L491.2 311.4 L490.2 310.1 L489.4 308.7 L488.7 307.4 L488.1 306.5 M491.4 302.5 L492.0 303.8 L492.9 305.8 L493.9 308.0 L494.8 310.0 L495.4 311.4 M496.2 303.0 L496.0 304.3 L495.6 306.2 L495.2 308.4 L494.8 310.4 L494.6 311.7 M475.2 298.4 L475.6 297.7 L476.2 296.8 L476.9 295.6 L477.6 294.5 L478.4 293.6 L479.4 292.8 L480.5 292.0 L481.6 291.3 L482.6 290.8 L483.3 290.4 M493.8 300.1 L493.8 300.8 L493.8 301.9 L493.8 303.1 L493.8 304.2 L493.8 304.9 M515.6 287.1 L515.1 286.2 L514.2 284.8 L513.4 283.2 L512.7 281.7 L512.4 280.7 L512.6 279.9 L513.2 279.4 L514.1 279.0 L514.9 278.9 L515.6 279.0 L516.2 279.5 L516.9 280.2 L517.4 281.2 L517.9 282.2 L518.0 283.1 L517.8 284.0 L517.3 284.9 L516.6 285.8 L516.0 286.6 L515.6 287.1 M515.6 287.1 L516.4 286.2 L517.6 284.8 L519.0 283.4 L520.2 282.1 L521.3 281.5 L522.1 281.5 L522.8 282.1 L523.3 283.0 L523.7 283.9 L523.7 284.7 L523.3 285.4 L522.5 286.2 L521.6 286.9 L520.6 287.5 L519.6 287.9 L518.8 288.0 L517.8 287.9 L516.9 287.6 L516.2 287.3 L515.6 287.1 M515.6 287.1 L516.6 287.5 L518.1 288.1 L519.8 288.8 L521.2 289.6 L522.1 290.4 L522.3 291.2 L522.1 292.2 L521.7 293.2 L521.1 294.0 L520.5 294.4 L519.7 294.4 L518.9 294.0 L517.9 293.4 L517.1 292.7 L516.4 292.0 L516.0 291.1 L515.8 290.0 L515.7 288.8 L515.7 287.8 L515.6 287.1 M515.6 287.1 L515.4 288.2 L515.2 289.9 L514.8 291.7 L514.4 293.3 L514.0 294.4 L513.4 294.8 L512.6 294.8 L511.8 294.5 L511.2 294.1 L510.8 293.6 L510.6 293.0 L510.6 292.1 L510.8 291.2 L511.1 290.3 L511.6 289.5 L512.2 288.9 L513.1 288.3 L514.1 287.8 L515.0 287.4 L515.6 287.1 M515.6 287.1 L514.6 286.9 L513.1 286.7 L511.5 286.4 L510.1 286.0 L509.1 285.5 L508.8 284.8 L508.8 283.8 L509.1 282.8 L509.5 281.9 L509.9 281.5 L510.5 281.4 L511.1 281.6 L511.8 282.0 L512.5 282.5 L513.2 283.1 L513.8 283.8 L514.3 284.7 L514.8 285.7 L515.3 286.5 L515.6 287.1 M265.7 286.6 L266.3 285.7 L267.1 284.4 L268.1 283.0 L269.3 281.6 L270.7 280.5 L272.4 279.6 L274.4 278.9 L276.5 278.3 L278.7 277.8 L280.8 277.5 L282.9 277.4 L284.9 277.4 L287.0 277.7 L289.0 278.0 L290.9 278.5 L292.7 279.1 L294.4 279.8 L296.0 280.6 L297.5 281.5 L299.0 282.5 L300.4 283.7 L301.7 285.0 L302.9 286.4 L304.1 287.6 L305.1 288.6 L305.9 289.3 L306.6 289.8 L307.2 290.1 L307.7 290.4 L308.1 290.6 M265.7 286.6 L266.9 286.3 L268.6 286.0 L270.6 285.6 L272.7 285.5 L274.7 285.6 L276.7 286.0 L278.7 286.8 L280.8 287.7 L282.8 288.7 L284.8 289.6 L286.9 290.5 L288.9 291.4 L290.9 292.3 L292.9 293.1 L294.9 293.6 L297.1 293.9 L299.3 294.1 L301.5 294.0 L303.5 293.9 L305.1 293.6 L306.2 293.2 L306.9 292.5 L307.4 291.7 L307.8 291.1 L308.1 290.6 M270.7 284.1 L272.1 283.8 L274.1 283.3 L276.4 282.7 L278.8 282.3 L280.8 282.1 L282.6 282.2 L284.2 282.6 L285.8 283.0 L287.3 283.6 L288.9 284.1 L290.5 284.7 L292.1 285.4 L293.7 286.2 L295.4 286.9 L297.0 287.6 L298.7 288.3 L300.6 289.0 L302.4 289.6 L304.0 290.2 L305.1 290.6 M280.8 282.1 L281.1 282.6 L281.6 283.4 L282.1 284.3 L282.5 285.0 L282.8 285.6 M288.9 284.1 L289.2 284.8 L289.6 285.8 L290.1 286.9 L290.6 287.9 L290.9 288.6 M294.9 286.6 L295.3 287.3 L295.7 288.5 L296.2 289.7 L296.7 290.8 L297.0 291.6 M217.2 302.7 L218.4 301.7 L220.2 300.2 L222.3 298.5 L224.4 296.9 L226.3 295.7 L227.9 294.7 L229.5 293.8 L231.1 293.1 L232.7 292.7 L234.3 292.6 L236.1 292.9 L238.1 293.6 L240.0 294.6 L241.8 295.6 L243.4 296.7 L244.8 297.8 L246.1 299.0 L247.2 300.3 L248.3 301.5 L249.5 302.7 L250.8 303.8 L252.1 304.8 L253.4 305.8 L254.6 306.8 L255.6 307.8 L256.3 308.9 L256.8 310.0 L257.1 311.2 L257.4 312.1 L257.6 312.8 M217.2 302.7 L218.5 302.4 L220.3 301.8 L222.4 301.2 L224.5 300.8 L226.3 300.7 L227.7 301.1 L228.9 301.8 L230.0 302.7 L231.2 303.7 L232.3 304.7 L233.5 305.9 L234.7 307.2 L235.9 308.5 L237.1 309.8 L238.4 310.8 L239.7 311.6 L241.1 312.3 L242.6 312.9 L244.0 313.4 L245.5 313.8 L246.9 314.2 L248.4 314.5 L249.8 314.8 L251.2 314.9 L252.5 314.8 L253.7 314.6 L254.9 314.2 L256.0 313.6 L256.9 313.2 L257.6 312.8 M226.3 298.7 L227.4 298.6 L229.0 298.4 L230.9 298.3 L232.7 298.4 L234.3 298.7 L235.7 299.4 L236.9 300.4 L238.0 301.5 L239.2 302.7 L240.4 303.7 L241.8 304.6 L243.2 305.5 L244.6 306.3 L246.0 307.1 L247.5 307.8 L249.0 308.5 L250.6 309.2 L252.2 309.9 L253.6 310.4 L254.5 310.8 M234.3 298.7 L234.5 299.3 L234.7 300.2 L235.0 301.2 L235.2 302.1 L235.4 302.7 M241.4 303.7 L241.4 304.5 L241.4 305.6 L241.4 306.9 L241.4 308.0 L241.4 308.8 M247.5 307.8 L247.6 308.5 L247.9 309.7 L248.1 310.9 L248.3 312.1 L248.5 312.8 M300.0 276.5 L301.2 275.7 L302.9 274.6 L304.9 273.4 L307.1 272.2 L309.1 271.4 L311.1 270.9 L313.2 270.5 L315.2 270.3 L317.3 270.3 L319.2 270.4 L321.0 270.7 L322.9 271.1 L324.6 271.7 L326.1 272.5 L327.3 273.4 L328.1 274.6 L328.8 276.1 L329.1 277.6 L329.3 279.2 L329.3 280.5 L329.0 281.7 L328.3 282.9 L327.5 284.0 L326.8 284.9 L326.3 285.6 M300.0 276.5 L301.4 276.6 L303.4 276.7 L305.6 276.8 L308.0 277.1 L310.1 277.5 L312.0 278.1 L313.9 278.9 L315.7 279.8 L317.5 280.7 L319.2 281.5 L320.8 282.4 L322.5 283.3 L324.0 284.2 L325.3 285.0 L326.3 285.6 M305.1 275.5 L306.5 275.4 L308.5 275.3 L310.8 275.2 L313.1 275.2 L315.2 275.5 L317.0 276.1 L318.9 277.0 L320.7 278.0 L322.2 278.9 L323.2 279.5 M319.2 294.6 L320.0 294.2 L321.1 293.6 L322.4 292.9 L323.8 292.5 L325.3 292.6 L326.8 293.3 L328.4 294.3 L330.1 295.6 L331.8 297.1 L333.3 298.7 L334.7 300.4 L336.1 302.4 L337.4 304.6 L338.5 306.7 L339.4 308.8 L340.1 310.8 L340.7 312.8 L341.1 314.8 L341.3 316.9 L341.4 318.9 L341.3 321.0 L341.1 323.1 L340.7 325.2 L340.1 327.2 L339.4 329.0 L338.3 330.6 L337.0 332.0 L335.5 333.3 L334.2 334.3 L333.3 335.1 M319.2 294.6 L319.4 295.7 L319.7 297.3 L320.1 299.1 L320.6 301.0 L321.2 302.7 L322.0 304.3 L323.0 305.9 L324.1 307.4 L325.2 309.1 L326.3 310.8 L327.3 312.6 L328.4 314.5 L329.5 316.5 L330.5 318.6 L331.3 320.9 L331.9 323.7 L332.4 327.0 L332.8 330.2 L333.1 333.1 L333.3 335.1 M321.2 296.7 L322.3 298.3 L324.0 300.6 L325.8 303.4 L327.7 306.2 L329.3 308.8 L330.7 311.2 L332.2 313.6 L333.5 316.1 L334.6 318.5 L335.4 320.9 L335.6 323.5 L335.4 326.3 L335.0 329.1 L334.6 331.4 L334.3 333.0 M329.3 308.8 L329.9 308.5 L330.8 308.0 L331.8 307.5 L332.7 307.1 L333.3 306.8 M332.3 314.8 L333.1 314.7 L334.2 314.5 L335.5 314.2 L336.6 314.0 L337.4 313.8 M334.9 321.9 L335.6 321.9 L336.6 321.9 L337.7 321.9 L338.7 321.9 L339.4 321.9 M305.1 288.6 L305.9 289.7 L307.1 291.2 L308.5 293.0 L309.9 294.9 L311.1 296.7 L312.1 298.3 L313.0 299.9 L313.9 301.5 L314.6 303.1 L315.2 304.7 L315.6 306.5 L315.8 308.4 L316.0 310.2 L316.1 311.7 L316.2 312.8 M305.1 288.6 L305.3 290.0 L305.6 291.9 L305.9 294.2 L306.4 296.5 L307.1 298.7 L307.9 300.8 L308.9 303.0 L310.0 305.2 L311.1 307.2 L312.1 308.8 L313.1 310.0 L314.0 311.0 L314.9 311.8 L315.6 312.4 L316.2 312.8 M301.0 383.5 L300.7 381.3 L300.3 378.0 L299.8 374.3 L299.4 370.6 L299.0 367.4 L298.8 364.7 L298.6 362.2 L298.5 359.9 L298.3 357.6 L298.0 355.3 L297.6 352.8 L297.1 350.4 L296.5 348.0 L295.8 345.6 L294.9 343.1 L293.9 340.7 L292.5 338.3 L291.2 335.9 L289.9 333.4 L288.9 331.0 L288.2 328.4 L287.7 325.6 L287.3 322.9 L287.1 320.5 L286.9 318.9 M301.0 369.4 L301.5 367.4 L302.3 364.7 L303.2 361.4 L304.1 358.2 L305.1 355.3 L306.0 352.7 L307.1 350.3 L308.2 347.9 L309.2 345.5 L310.1 343.1 L310.9 340.5 L311.6 337.7 L312.2 335.0 L312.8 332.7 L313.1 331.0 M257.6 312.8 L257.9 313.9 L258.4 315.4 L259.0 317.1 L259.8 319.0 L260.6 320.9 L261.6 322.9 L262.7 325.0 L264.0 327.2 L265.3 329.2 L266.7 331.0 L268.1 332.5 L269.7 333.7 L271.3 334.8 L273.0 335.9 L274.7 337.1 L276.6 338.3 L278.6 339.4 L280.7 340.6 L282.8 341.8 L284.8 343.1 L286.9 344.6 L289.1 346.2 L291.3 347.9 L293.3 349.6 L294.9 351.2 L296.4 353.0 L297.6 354.8 L298.6 356.6 L299.4 358.2 L300.0 359.3 M308.1 290.6 L308.4 291.7 L309.0 293.3 L309.6 295.1 L310.0 296.9 L310.1 298.7 L309.8 300.3 L309.3 301.9 L308.6 303.5 L307.8 305.2 L307.1 306.8 L306.3 308.5 L305.3 310.4 L304.4 312.2 L303.6 313.7 L303.0 314.8 M326.3 285.6 L327.2 284.3 L328.6 282.6 L330.2 280.6 L331.9 278.5 L333.3 276.5 L334.6 274.5 L335.9 272.4 L337.2 270.3 L338.3 268.3 L339.4 266.4 L340.2 264.5 L340.9 262.7 L341.5 261.1 L342.3 259.5 L343.4 258.3 L345.2 257.3 L347.5 256.6 L349.9 256.0 L352.1 255.6 L353.5 255.3 M339.4 266.4 L340.3 265.7 L341.7 264.8 L343.2 263.8 L344.5 262.9 L345.5 262.3 M333.3 290.6 L334.4 290.8 L336.0 291.1 L337.8 291.4 L339.7 291.9 L341.4 292.6 L343.1 293.5 L344.8 294.5 L346.6 295.6 L348.1 297.0 L349.5 298.7 L350.6 300.8 L351.5 303.4 L352.3 306.1 L352.9 308.7 L353.5 310.8 L354.1 312.5 L354.6 314.0 L355.0 315.2 L355.3 316.1 L355.6 316.9 M329.3 290.6 L328.4 290.9 L327.0 291.4 L325.5 291.9 L324.2 292.3 L323.2 292.6 M339.4 276.5 L340.3 276.8 L341.7 277.2 L343.2 277.7 L344.5 278.2 L345.5 278.5 M301.0 371.4 L299.6 370.2 L297.7 368.4 L295.4 366.4 L293.1 364.6 L290.9 363.3 L288.9 362.7 L286.8 362.5 L284.7 362.5 L282.7 362.8 L280.8 363.3 L279.0 364.1 L277.3 365.2 L275.6 366.5 L274.1 368.0 L272.7 369.4 L271.5 370.9 L270.3 372.6 L269.3 374.3 L268.4 375.9 L267.7 377.5 L267.2 379.0 L266.9 380.5 L266.8 381.9 L266.7 383.1 L266.7 383.9 M301.0 371.4 L300.2 372.0 L299.1 372.7 L297.8 373.6 L296.4 374.6 L294.9 375.5 L293.4 376.3 L291.8 377.1 L290.1 377.8 L288.4 378.7 L286.9 379.5 L285.4 380.4 L284.0 381.5 L282.7 382.5 L281.6 383.3 L280.8 383.9 M272.7 371.4 L273.8 371.1 L275.4 370.6 L277.2 370.0 L279.1 369.6 L280.8 369.4 L282.5 369.5 L284.1 369.9 L285.8 370.3 L287.4 370.9 L288.9 371.4 L290.3 372.0 L291.7 372.7 L293.1 373.4 L294.2 374.0 L294.9 374.4 M269.7 379.5 L270.6 378.9 L272.0 377.9 L273.5 376.9 L275.2 376.0 L276.8 375.5 L278.4 375.3 L280.3 375.5 L282.1 375.9 L283.7 376.2 L284.8 376.5 M301.0 371.4 L302.1 370.5 L303.7 369.0 L305.5 367.5 L307.3 366.1 L309.1 365.4 L310.7 365.2 L312.4 365.4 L314.1 365.9 L315.7 366.6 L317.2 367.4 L318.6 368.3 L319.9 369.4 L321.2 370.7 L322.3 372.0 L323.2 373.4 L323.9 375.1 L324.4 376.9 L324.8 378.8 L325.0 380.4 L325.3 381.5 M301.0 371.4 L302.1 371.9 L303.8 372.5 L305.6 373.3 L307.5 374.3 L309.1 375.5 L310.5 377.0 L312.0 378.9 L313.3 380.9 L314.4 382.7 L315.2 383.9 M251.5 356.3 L251.7 355.7 L252.0 354.8 L252.4 353.8 L252.9 352.9 L253.5 352.2 L254.4 351.8 L255.4 351.4 L256.5 351.2 L257.6 351.1 L258.6 351.2 L259.5 351.5 L260.5 352.0 L261.3 352.7 L262.1 353.4 L262.6 354.2 L262.9 355.2 L263.1 356.2 L263.1 357.3 L262.9 358.4 L262.6 359.3 L262.1 360.1 L261.3 360.8 L260.5 361.5 L259.5 362.0 L258.6 362.3 L257.6 362.4 L256.5 362.4 L255.4 362.2 L254.4 361.8 L253.5 361.3 L252.9 360.5 L252.4 359.3 L252.0 358.1 L251.7 357.0 L251.5 356.3 M255.6 355.3 L256.0 355.1 L256.6 354.7 L257.4 354.4 L258.1 354.2 L258.6 354.2 L259.0 354.6 L259.3 355.2 L259.5 355.9 L259.6 356.7 L259.6 357.3 L259.4 357.8 L258.9 358.3 L258.4 358.7 L257.9 359.0 L257.6 359.3 M258.6 351.2 L258.4 350.4 L258.2 349.3 L258.0 348.1 L257.7 346.9 L257.6 346.2 M260.6 352.2 L261.4 352.1 L262.5 351.8 L263.8 351.6 L264.9 351.4 L265.7 351.2 M275.8 351.2 L276.3 350.7 L277.0 349.9 L277.9 349.1 L278.9 348.4 L279.8 348.2 L280.8 348.4 L281.9 348.8 L283.1 349.5 L284.1 350.3 L284.8 351.2 L285.4 352.3 L285.8 353.6 L286.1 354.9 L286.1 356.2 L285.9 357.3 L285.2 358.2 L284.3 359.0 L283.1 359.7 L281.9 360.1 L280.8 360.3 L279.7 360.1 L278.5 359.7 L277.4 359.0 L276.4 358.2 L275.8 357.3 L275.4 356.2 L275.4 354.8 L275.5 353.3 L275.7 352.1 L275.8 351.2 M278.8 352.2 L279.2 352.0 L279.9 351.6 L280.6 351.3 L281.3 351.1 L281.8 351.2 L282.3 351.7 L282.7 352.6 L283.0 353.5 L283.2 354.5 L283.2 355.3 L283.0 355.8 L282.4 356.3 L281.8 356.7 L281.2 357.0 L280.8 357.3 M279.8 348.2 L280.0 347.7 L280.2 347.0 L280.4 346.3 L280.7 345.6 L280.8 345.2 M262.6 359.3 L264.0 359.6 L265.8 360.0 L268.1 360.4 L270.4 360.9 L272.7 361.3 L275.2 361.7 L278.0 362.2 L280.8 362.7 L283.2 363.1 L284.8 363.3 M390.9 310.8 L389.9 313.1 L388.4 316.3 L386.7 319.9 L384.8 323.7 L382.8 327.0 L380.8 329.9 L378.6 332.7 L376.3 335.4 L374.0 337.8 L371.7 340.1 L369.3 342.2 L366.7 344.1 L364.3 345.8 L362.1 347.2 L360.6 348.2 M393.9 312.8 L392.7 315.2 L391.1 318.7 L389.1 322.7 L386.9 326.6 L384.8 330.0 L382.8 332.8 L380.6 335.4 L378.4 337.7 L376.1 340.0 L373.7 342.1 L371.2 344.3 L368.4 346.4 L365.6 348.4 L363.3 350.0 L361.6 351.2 M302.1 360.2 L300.5 360.4 L298.4 360.6 L295.8 360.9 L293.1 361.2 L290.5 361.7 L288.0 362.2 L285.2 362.9 L282.5 363.7 L279.9 364.5 L277.5 365.3 L275.4 365.9 L273.5 366.5 L271.7 367.1 L270.1 367.8 L268.9 368.9 L268.0 370.3 L267.3 372.0 L267.0 373.8 L266.8 375.7 L266.7 377.5 L266.9 379.3 L267.3 381.1 L267.8 382.8 L268.4 384.6 L268.9 386.2 L269.3 387.9 L269.9 389.5 L270.3 391.1 L270.8 392.5 L271.0 393.4 M302.1 360.2 L301.6 361.2 L300.9 362.7 L300.0 364.3 L299.0 366.0 L297.8 367.4 L296.3 368.7 L294.6 369.9 L292.8 371.0 L290.9 372.1 L289.1 373.2 L287.3 374.3 L285.6 375.5 L283.8 376.6 L282.1 377.7 L280.4 379.0 L278.8 380.3 L277.2 381.8 L275.7 383.3 L274.3 384.7 L273.2 386.2 L272.4 387.8 L271.9 389.4 L271.5 391.1 L271.3 392.4 L271.0 393.4 M276.1 368.9 L275.7 369.9 L275.0 371.2 L274.2 372.9 L273.6 374.5 L273.2 376.1 L273.1 377.7 L273.3 379.3 L273.5 381.0 L273.8 382.3 L273.9 383.3 M283.3 366.0 L282.7 367.0 L281.8 368.4 L280.8 370.0 L279.8 371.7 L279.0 373.2 L278.4 374.8 L277.9 376.4 L277.4 378.1 L277.1 379.5 L276.8 380.4 M290.5 363.8 L289.9 364.7 L289.1 366.0 L288.0 367.5 L287.1 369.0 L286.2 370.3 L285.5 371.6 L284.8 373.0 L284.2 374.2 L283.7 375.3 L283.3 376.1 M296.3 363.1 L295.7 363.9 L294.8 365.1 L293.8 366.4 L292.8 367.7 L292.0 368.9 L291.4 369.9 L290.9 370.9 L290.4 371.9 L290.1 372.6 L289.8 373.2 M287.7 368.9 L288.5 369.0 L289.7 369.2 L291.0 369.5 L292.4 369.8 L293.4 370.3 L294.3 371.0 L295.1 371.8 L295.7 372.8 L296.2 373.7 L296.3 374.7 L296.1 375.6 L295.4 376.6 L294.7 377.6 L293.9 378.4 L293.4 379.0 M302.1 360.2 L303.5 359.5 L305.5 358.4 L307.9 357.2 L310.2 356.3 L312.2 355.9 L313.9 356.1 L315.4 356.8 L316.8 357.8 L318.1 358.9 L319.4 360.2 L320.7 361.6 L322.0 363.2 L323.2 365.0 L324.3 366.9 L325.2 368.9 L326.0 371.1 L326.8 373.5 L327.4 376.0 L327.8 378.4 L328.1 380.4 L328.1 382.3 L327.8 384.0 L327.3 385.5 L326.9 386.7 L326.6 387.7 M302.1 360.2 L302.9 361.0 L303.9 362.1 L305.2 363.4 L306.5 364.7 L307.9 366.0 L309.2 367.1 L310.7 368.2 L312.1 369.3 L313.6 370.4 L315.1 371.8 L316.6 373.3 L318.1 375.1 L319.6 376.9 L321.1 378.7 L322.3 380.4 L323.4 382.1 L324.5 383.8 L325.4 385.4 L326.1 386.7 L326.6 387.7 M309.3 361.7 L310.1 362.2 L311.2 362.9 L312.5 363.8 L313.8 364.9 L315.1 366.0 L316.3 367.4 L317.7 369.0 L319.0 370.7 L320.1 372.2 L320.9 373.2 M315.1 360.2 L315.9 361.2 L317.1 362.4 L318.4 364.0 L319.7 365.7 L320.9 367.4 L321.9 369.4 L322.9 371.8 L323.8 374.1 L324.6 376.1 L325.2 377.5 M302.1 360.2 L302.3 361.4 L302.6 363.1 L302.9 365.0 L303.3 367.0 L303.5 368.9 L303.8 370.6 L303.9 372.3 L304.1 374.0 L304.2 375.7 L304.3 377.5 L304.2 379.6 L304.0 382.0 L303.8 384.3 L303.7 386.3 L303.5 387.7 M302.1 360.2 L302.9 361.8 L304.1 364.1 L305.5 366.7 L306.8 369.4 L307.9 371.8 L308.7 373.9 L309.3 376.1 L309.8 378.1 L310.3 380.1 L310.8 381.9 L311.2 383.6 L311.5 385.3 L311.8 386.9 L312.0 388.2 L312.2 389.1 M302.1 360.2 L301.7 361.8 L301.1 364.0 L300.4 366.6 L299.7 369.3 L299.2 371.8 L298.8 374.3 L298.5 376.9 L298.2 379.5 L297.9 381.8 L297.8 383.3 M316.2 481.6 L316.6 481.0 L317.2 480.1 L317.9 479.1 L318.8 478.1 L319.8 477.3 L321.0 476.5 L322.4 475.8 L323.9 475.2 L325.5 474.7 L327.0 474.4 L328.6 474.3 L330.3 474.3 L331.9 474.4 L333.5 474.7 L335.0 475.1 L336.3 475.6 L337.6 476.2 L338.8 477.0 L339.8 477.8 L340.8 478.7 L341.6 479.8 L342.3 481.2 L342.8 482.5 L343.3 483.7 L343.6 484.5 M343.6 484.5 L344.6 484.1 L345.9 483.5 L347.5 482.7 L349.2 482.0 L350.9 481.2 L352.6 480.2 L354.4 478.9 L356.3 477.8 L358.0 477.0 L359.5 476.8 L360.8 477.6 L361.9 479.0 L362.8 480.7 L363.7 482.7 L364.6 484.5 L365.5 486.3 L366.4 488.2 L367.2 490.1 L367.8 492.0 L368.2 493.9 L368.3 495.7 L368.2 497.5 L368.0 499.3 L367.6 501.0 L367.0 502.5 L366.4 503.9 L365.5 505.1 L364.5 506.2 L363.5 507.3 L362.4 508.3 L361.2 509.5 L359.9 510.6 L358.6 511.8 L357.4 512.7 L356.6 513.4 M291.7 486.7 L291.0 487.6 L290.1 489.0 L289.1 490.5 L288.1 492.2 L287.3 493.9 L286.7 495.6 L286.2 497.4 L285.8 499.2 L285.6 501.0 L285.6 502.5 L285.9 503.9 L286.3 505.2 L287.0 506.3 L287.8 507.4 L288.8 508.3 L290.0 509.2 L291.4 510.0 L292.9 510.7 L294.5 511.2 L296.0 511.5 L297.6 511.5 L299.2 511.2 L300.8 510.7 L302.2 510.3 L303.2 510.1 M298.9 505.4 L298.6 504.7 L298.2 503.7 L297.7 502.6 L297.4 501.4 L297.4 500.4 L297.8 499.4 L298.4 498.5 L299.2 497.5 L300.1 496.7 L301.0 496.0 L302.2 495.5 L303.4 495.1 L304.8 494.8 L306.2 494.6 L307.5 494.6 L309.0 494.8 L310.5 495.1 L311.9 495.6 L313.4 496.1 L314.8 496.8 L316.1 497.6 L317.5 498.6 L318.7 499.6 L319.8 500.5 L320.5 501.1 M317.7 512.7 L317.9 511.8 L318.2 510.7 L318.6 509.3 L319.1 508.0 L319.8 506.9 L320.7 506.0 L321.8 505.1 L323.1 504.4 L324.3 503.8 L325.6 503.3 L326.9 502.9 L328.2 502.6 L329.5 502.4 L330.8 502.4 L332.1 502.5 L333.4 503.0 L334.7 503.6 L335.9 504.4 L337.0 505.3 L337.9 506.2 L338.5 507.2 L338.8 508.3 L339.0 509.5 L339.2 510.5 L339.3 511.2 M313.3 518.4 L313.9 519.0 L314.6 519.9 L315.5 520.9 L316.5 521.9 L317.7 522.8 L318.9 523.5 L320.3 524.1 L321.7 524.7 L323.3 525.2 L324.9 525.6 L326.5 526.0 L328.3 526.2 L330.1 526.4 L331.9 526.4 L333.5 526.4 L335.1 526.1 L336.7 525.8 L338.1 525.3 L339.5 524.8 L340.8 524.2 L341.9 523.5 L342.9 522.7 L343.8 521.8 L344.5 521.1 L345.1 520.6 M339.3 511.2 L340.1 511.8 L341.1 512.7 L342.4 513.7 L343.8 514.7 L345.1 515.5 L346.5 516.2 L347.9 516.9 L349.5 517.5 L350.9 518.0 L352.3 518.4 L353.7 518.7 L355.0 518.9 L356.3 519.0 L357.3 519.1 L358.1 519.2 M319.1 488.1 L319.9 487.7 L320.9 487.0 L322.2 486.3 L323.5 485.7 L324.9 485.2 L326.2 485.0 L327.7 484.9 L329.1 484.9 L330.6 485.0 L332.1 485.2 L333.7 485.7 L335.3 486.3 L336.9 487.0 L338.3 487.7 L339.3 488.1 M291.7 486.7 L292.6 486.4 L294.0 486.0 L295.6 485.6 L297.3 485.3 L298.9 485.2 L300.5 485.5 L302.1 485.9 L303.8 486.5 L305.4 487.3 L306.8 488.1 L308.1 489.2 L309.3 490.5 L310.4 491.8 L311.2 493.0 L311.9 493.9 M320.5 501.1 L320.3 500.1 L319.8 498.6 L319.3 497.0 L319.0 495.3 L319.1 493.9 L319.5 492.7 L320.3 491.5 L321.2 490.4 L322.3 489.5 L323.4 488.8 L324.7 488.3 L326.2 488.0 L327.8 487.9 L329.3 487.9 L330.6 488.1 L331.8 488.5 L332.9 489.2 L333.8 490.0 L334.5 490.8 L335.0 491.7 L335.1 492.7 L335.0 493.8 L334.7 494.9 L334.2 495.9 L333.5 496.8 L332.6 497.4 L331.5 498.0 L330.2 498.4 L328.9 498.7 L327.8 498.9 L326.6 499.0 L325.4 498.8 L324.3 498.6 L323.4 498.4 L322.7 498.2 M327.8 498.9 L328.7 499.2 L330.1 499.7 L331.7 500.2 L333.4 500.7 L335.0 501.1 L336.4 501.4 L337.9 501.6 L339.4 501.8 L340.9 502.1 L342.2 502.5 L343.5 503.3 L344.9 504.3 L346.2 505.3 L347.2 506.2 L348.0 506.9 M358.1 519.2 L358.6 519.4 L359.4 519.9 L360.2 520.3 L360.8 520.8 L361.0 521.3 L360.6 521.8 L359.9 522.3 L358.9 522.8 L357.8 523.2 L356.6 523.5 L355.4 523.6 L354.0 523.5 L352.4 523.3 L350.9 523.1 L349.4 522.8 L347.9 522.3 L346.2 521.6 L344.6 520.9 L343.2 520.3 L342.2 519.9 M303.2 510.1 L304.0 510.6 L305.2 511.4 L306.5 512.3 L307.8 513.2 L309.0 514.1 L310.0 515.0 L311.0 516.0 L312.0 517.0 L312.8 517.8 L313.3 518.4 M313.3 518.4 L313.7 519.7 L314.2 521.4 L314.8 523.4 L315.5 525.4 L316.2 527.1 L316.9 528.5 L317.7 529.8 L318.5 531.0 L319.5 532.0 L320.5 532.9 L321.9 533.5 L323.6 533.8 L325.3 534.0 L326.7 534.2 L327.8 534.3 M345.1 520.6 L344.9 521.5 L344.8 522.8 L344.5 524.2 L344.1 525.7 L343.6 527.1 L343.0 528.4 L342.2 529.6 L341.3 530.9 L340.3 532.0 L339.3 532.9 L338.2 533.6 L336.8 534.1 L335.5 534.5 L334.3 534.8 L333.5 535.0 M320.5 532.9 L320.9 533.9 L321.4 535.3 L322.0 537.0 L322.7 538.6 L323.4 540.1 L324.2 541.3 L325.1 542.4 L326.0 543.5 L326.9 544.6 L327.8 545.9 L328.7 547.2 L329.6 548.7 L330.6 550.2 L331.4 551.7 L332.1 553.1 L332.6 554.4 L332.9 555.8 L333.2 557.0 L333.4 558.1 L333.5 558.9 M339.3 532.9 L339.1 533.9 L338.8 535.2 L338.5 536.9 L338.1 538.5 L337.9 540.1 L337.7 541.5 L337.5 543.0 L337.3 544.4 L337.2 545.9 L337.1 547.3 L337.2 548.9 L337.4 550.5 L337.6 552.2 L337.7 553.5 L337.9 554.5 M322.0 540.1 L322.8 539.8 L323.9 539.5 L325.2 539.1 L326.5 538.8 L327.8 538.6 L329.0 538.7 L330.2 538.9 L331.4 539.2 L332.6 539.6 L333.5 540.1 L334.3 540.7 L335.0 541.6 L335.6 542.4 L336.1 543.2 L336.4 543.7 M320.5 543.0 L321.1 543.8 L321.9 545.0 L322.8 546.4 L323.8 547.7 L324.9 548.8 L326.0 549.6 L327.4 550.3 L328.7 550.8 L329.8 551.3 L330.6 551.6 M333.5 558.9 L333.8 559.8 L334.2 561.1 L334.7 562.7 L335.2 564.4 L335.7 566.1 L336.2 567.9 L336.7 570.0 L337.2 572.0 L337.6 573.8 L337.9 575.0 M337.9 554.5 L338.2 555.9 L338.6 557.8 L339.1 560.1 L339.6 562.4 L340.0 564.6 L340.5 566.9 L341.0 569.3 L341.5 571.6 L341.9 573.6 L342.2 575.0 M337.9 554.5 L338.9 553.8 L340.3 552.7 L342.0 551.4 L343.6 550.1 L345.1 548.8 L346.4 547.4 L347.6 545.9 L348.8 544.4 L349.9 543.0 L350.9 541.5 L351.7 540.1 L352.4 538.6 L352.9 537.1 L353.4 535.9 L353.8 535.0 M337.9 557.4 L339.1 556.9 L340.9 556.1 L342.9 555.2 L344.8 554.2 L346.5 553.1 L347.9 551.9 L349.3 550.6 L350.5 549.2 L351.5 547.6 L352.3 545.9 L352.9 543.8 L353.3 541.3 L353.5 538.8 L353.6 536.6 L353.8 535.0 M288.8 508.3 L288.0 508.2 L286.9 508.1 L285.7 507.8 L284.6 507.5 L283.7 506.9 L283.2 506.0 L282.8 504.7 L282.6 503.4 L282.6 502.1 L282.7 501.1 L283.1 500.3 L283.8 499.6 L284.6 499.0 L285.4 498.6 L285.9 498.2 M340.8 486.7 L341.4 487.4 L342.3 488.5 L343.4 489.7 L344.3 491.1 L345.1 492.4 L345.6 493.8 L346.1 495.3 L346.4 496.8 L346.6 498.3 L346.5 499.7 L346.2 501.0 L345.6 502.3 L344.8 503.6 L344.1 504.7 L343.6 505.4 M311.9 493.9 L311.7 492.6 L311.4 490.8 L311.1 488.8 L310.8 486.8 L310.4 485.2 L310.0 484.0 L309.5 483.0 L309.0 482.1 L308.6 481.4 L308.3 480.9 M390.5 563.5 L390.8 565.8 L391.1 569.1 L391.5 572.9 L392.1 576.9 L392.7 580.9 L393.6 584.9 L394.6 589.3 L395.7 593.7 L396.8 597.7 L397.8 601.1 L398.6 603.7 L399.5 605.9 L400.3 607.6 L400.9 609.0 L401.4 610.0 M394.9 563.5 L395.1 565.8 L395.4 569.1 L395.9 572.9 L396.4 576.9 L397.0 580.9 L397.9 584.9 L399.0 589.3 L400.1 593.7 L401.2 597.7 L402.1 601.1 L402.9 603.7 L403.5 605.9 L404.1 607.6 L404.6 609.0 L405.0 610.0 M399.2 569.3 L400.4 569.7 L402.0 570.1 L404.0 570.7 L406.0 571.4 L407.9 572.2 L409.7 573.2 L411.5 574.4 L413.4 575.6 L415.1 576.9 L416.5 578.0 L417.7 579.0 L418.8 580.0 L419.7 581.0 L420.3 581.7 L420.9 582.3 M399.2 569.3 L399.7 570.3 L400.4 571.8 L401.3 573.5 L402.3 575.2 L403.5 576.5 L405.0 577.6 L406.7 578.6 L408.5 579.5 L410.4 580.2 L412.2 580.9 L414.1 581.4 L416.1 581.7 L418.0 582.0 L419.7 582.2 L420.9 582.3 M420.9 573.6 L421.6 573.9 L422.7 574.3 L424.0 574.8 L425.3 575.5 L426.6 576.5 L428.1 577.9 L429.6 579.7 L431.2 581.6 L432.7 583.5 L433.9 585.2 L434.8 586.9 L435.5 588.5 L436.0 590.1 L436.4 591.5 L436.8 592.4 M420.9 573.6 L421.0 574.8 L421.1 576.6 L421.4 578.5 L421.7 580.5 L422.3 582.3 L423.1 583.9 L424.2 585.5 L425.4 587.0 L426.7 588.4 L428.1 589.5 L429.8 590.4 L431.8 591.1 L433.8 591.7 L435.5 592.1 L436.8 592.4 M416.5 585.2 L417.5 585.3 L418.8 585.5 L420.4 585.8 L422.1 586.1 L423.8 586.6 L425.4 587.3 L427.3 588.2 L429.1 589.1 L430.8 590.1 L432.4 591.0 L433.9 591.9 L435.2 592.9 L436.4 593.9 L437.5 594.7 L438.2 595.3 M416.5 585.2 L417.1 586.2 L417.7 587.8 L418.6 589.5 L419.7 591.1 L420.9 592.4 L422.3 593.3 L424.0 594.0 L425.9 594.6 L427.7 595.0 L429.5 595.3 L431.4 595.5 L433.4 595.5 L435.4 595.4 L437.0 595.4 L438.2 595.3 M441.1 583.8 L441.5 584.3 L442.1 585.0 L442.8 585.9 L443.4 587.0 L444.0 588.1 L444.4 589.4 L444.8 590.8 L445.1 592.4 L445.3 593.9 L445.4 595.3 L445.3 596.6 L445.0 598.0 L444.6 599.3 L444.2 600.3 L444.0 601.1 M441.1 583.8 L440.8 584.7 L440.5 586.1 L440.1 587.7 L439.8 589.4 L439.6 591.0 L439.7 592.5 L439.9 594.1 L440.3 595.6 L440.7 597.0 L441.1 598.2 L441.6 599.1 L442.3 599.8 L443.0 600.3 L443.6 600.8 L444.0 601.1 M428.1 601.1 L429.0 601.0 L430.4 600.9 L432.0 600.9 L433.7 600.9 L435.3 601.1 L437.0 601.5 L438.8 602.0 L440.6 602.6 L442.4 603.3 L444.0 604.0 L445.4 604.8 L446.8 605.8 L448.0 606.8 L449.0 607.7 L449.7 608.3 M428.1 601.1 L428.8 601.9 L429.8 603.2 L431.0 604.5 L432.3 605.8 L433.9 606.9 L435.7 607.6 L437.8 608.1 L440.0 608.5 L442.2 608.8 L444.0 609.0 L445.5 609.1 L446.9 608.9 L448.1 608.7 L449.0 608.4 L449.7 608.3 M400.6 569.3 L402.2 570.4 L404.3 572.0 L406.8 573.9 L409.5 575.9 L412.2 578.0 L414.9 580.1 L417.8 582.4 L420.7 584.8 L423.7 587.2 L426.6 589.5 L429.5 591.9 L432.4 594.3 L435.3 596.6 L438.2 598.9 L441.1 601.1 L444.2 603.2 L447.6 605.3 L450.8 607.2 L453.6 608.9 L455.5 610.0 M382.6 547.7 L382.8 546.9 L383.1 545.9 L383.4 544.7 L384.0 543.5 L384.8 542.6 L385.9 541.9 L387.2 541.4 L388.8 541.0 L390.4 540.6 L392.0 540.4 L393.7 540.3 L395.5 540.4 L397.4 540.5 L399.1 540.8 L400.6 541.2 L402.0 541.7 L403.2 542.3 L404.3 543.0 L405.1 543.9 L405.7 544.8 L406.0 545.8 L406.1 547.0 L405.9 548.3 L405.5 549.5 L405.0 550.5 L404.2 551.4 L403.2 552.3 L402.0 553.0 L400.6 553.6 L399.2 554.2 L397.6 554.5 L395.8 554.8 L393.9 554.9 L392.1 555.0 L390.5 554.9 L389.1 554.7 L387.8 554.4 L386.7 553.9 L385.6 553.4 L384.8 552.7 L384.1 551.8 L383.5 550.7 L383.1 549.4 L382.8 548.4 L382.6 547.7 M389.1 546.2 L389.6 546.5 L390.3 546.9 L391.1 547.3 L391.9 547.6 L392.7 547.7 L393.4 547.4 L394.1 546.9 L394.8 546.3 L395.5 545.7 L396.3 545.5 L397.2 545.6 L398.2 545.9 L399.2 546.3 L400.0 546.7 L400.6 546.9 M436.7 434.5 L437.4 433.8 L438.5 432.8 L439.8 431.7 L441.2 430.8 L442.6 430.2 L444.2 430.1 L446.0 430.2 L447.8 430.6 L449.6 431.2 L451.2 431.9 L452.6 432.9 L453.9 434.2 L455.2 435.6 L456.2 437.1 L457.1 438.8 L457.9 440.6 L458.5 442.6 L458.9 444.7 L459.1 446.6 L458.8 448.1 L458.2 449.3 L457.1 450.2 L455.8 450.9 L454.3 451.3 L452.9 451.5 L451.3 451.5 L449.5 451.1 L447.7 450.5 L445.9 449.8 L444.3 449.0 L442.9 448.1 L441.6 447.0 L440.3 445.8 L439.2 444.4 L438.4 443.0 L437.7 441.3 L437.3 439.4 L437.0 437.4 L436.8 435.7 L436.7 434.5 M439.2 436.2 L440.6 437.0 L442.7 438.2 L445.0 439.5 L447.4 440.9 L449.5 442.2 L451.4 443.5 L453.4 444.8 L455.3 446.2 L456.8 447.3 L458.0 448.1 M444.3 438.8 L444.9 438.0 L445.6 436.8 L446.5 435.6 L447.2 434.4 L447.7 433.6 M449.5 442.2 L450.2 441.7 L451.4 440.9 L452.6 440.0 L453.8 439.3 L454.6 438.8 M444.3 439.6 L444.1 440.5 L443.7 441.9 L443.3 443.3 L442.9 444.7 L442.6 445.6 M450.3 443.0 L450.2 443.9 L450.0 445.3 L449.8 446.7 L449.6 448.1 L449.5 449.0 M418.8 450.7 L419.2 451.5 L419.8 452.6 L420.5 453.9 L421.3 455.3 L422.2 456.7 L423.1 458.0 L424.2 459.5 L425.3 461.0 L426.3 462.4 L427.3 463.5 L428.1 464.3 L428.9 464.9 L429.7 465.4 L430.3 465.8 L430.7 466.0 M418.8 450.7 L419.7 451.0 L421.1 451.3 L422.7 451.8 L424.3 452.4 L425.6 453.3 L426.7 454.4 L427.6 455.7 L428.5 457.2 L429.2 458.7 L429.8 460.1 L430.2 461.4 L430.5 462.8 L430.6 464.1 L430.6 465.2 L430.7 466.0 M430.7 466.0 L431.0 465.0 L431.4 463.4 L431.9 461.6 L432.5 459.9 L433.3 458.4 L434.3 457.0 L435.6 455.5 L437.0 454.3 L438.3 453.4 L439.2 453.3 L439.8 454.0 L440.2 455.5 L440.3 457.4 L440.3 459.4 L440.1 460.9 L439.6 462.2 L438.8 463.4 L437.8 464.5 L436.8 465.4 L435.8 466.0 L434.8 466.4 L433.6 466.4 L432.4 466.3 L431.4 466.1 L430.7 466.0 M412.8 462.6 L413.5 462.9 L414.5 463.2 L415.7 463.6 L417.1 464.0 L418.8 464.3 L421.0 464.7 L423.7 465.1 L426.5 465.5 L429.0 465.8 L430.7 466.0 M412.8 462.6 L413.4 461.4 L414.3 459.6 L415.3 457.6 L416.3 455.6 L417.1 454.1 L417.6 453.0 L418.0 452.2 L418.3 451.6 L418.6 451.1 L418.8 450.7 M430.7 466.0 L431.9 466.7 L433.6 467.6 L435.5 468.7 L437.5 469.9 L439.2 471.2 L440.8 472.5 L442.4 474.1 L443.9 475.7 L445.1 477.0 L446.0 478.0 M436.7 434.5 L436.4 435.6 L436.1 437.1 L435.7 438.9 L435.0 440.7 L434.1 442.2 L432.8 443.4 L431.0 444.5 L429.2 445.5 L427.3 446.4 L425.6 447.3 L424.0 448.1 L422.4 448.9 L420.9 449.7 L419.7 450.3 L418.8 450.7 M403.4 488.2 L403.6 487.2 L403.7 485.8 L404.0 484.2 L404.4 482.6 L405.1 481.4 L406.2 480.4 L407.5 479.5 L409.0 478.8 L410.5 478.2 L411.9 478.0 L413.4 478.0 L414.9 478.3 L416.3 478.9 L417.7 479.6 L418.8 480.5 L419.6 481.9 L420.2 483.6 L420.7 485.5 L421.0 487.1 L421.3 488.2 M403.4 488.2 L403.6 489.2 L403.8 490.6 L404.1 492.2 L404.5 493.8 L405.1 495.0 L405.9 496.0 L406.8 497.0 L407.9 497.7 L409.0 498.3 L410.2 498.4 L411.5 498.2 L413.0 497.7 L414.4 496.8 L415.8 495.9 L417.1 495.0 L418.1 494.0 L419.1 492.9 L420.0 491.7 L420.8 490.6 L421.3 489.9 M418.8 480.5 L419.4 479.6 L420.3 478.3 L421.3 476.9 L422.6 475.5 L423.9 474.6 L425.4 474.0 L427.2 473.6 L429.1 473.4 L430.9 473.4 L432.4 473.7 L433.6 474.3 L434.7 475.2 L435.5 476.3 L436.2 477.6 L436.7 478.8 L436.9 480.3 L436.9 481.9 L436.7 483.6 L436.3 485.2 L435.8 486.5 L435.1 487.5 L434.1 488.3 L433.0 489.0 L431.8 489.5 L430.7 489.9 L429.5 490.1 L428.1 490.2 L426.7 490.1 L425.6 490.0 L424.7 489.9 M410.2 498.4 L410.6 499.4 L411.1 500.8 L411.7 502.5 L412.6 504.0 L413.6 505.3 L415.0 506.3 L416.6 507.2 L418.4 507.9 L420.3 508.4 L422.2 508.7 L424.2 508.6 L426.3 508.2 L428.5 507.6 L430.5 506.8 L432.4 506.1 L434.1 505.3 L435.7 504.3 L437.1 503.3 L438.3 502.5 L439.2 501.9 M409.4 507.0 L410.6 507.6 L412.3 508.6 L414.4 509.6 L416.6 510.6 L418.8 511.2 L421.0 511.6 L423.4 511.7 L425.9 511.7 L428.4 511.6 L430.7 511.2 L433.0 510.6 L435.4 509.6 L437.7 508.6 L439.6 507.6 L440.9 507.0 M423.0 490.8 L422.6 491.7 L422.1 493.0 L421.4 494.5 L420.9 495.8 L420.5 496.7 M423.0 490.8 L423.2 491.9 L423.3 493.7 L423.6 495.6 L423.7 497.3 L423.9 498.4 M423.0 490.8 L423.8 491.5 L424.9 492.7 L426.2 494.0 L427.4 495.1 L428.1 495.9 M423.0 490.8 L422.4 490.3 L421.4 489.5 L420.4 488.6 L419.4 487.9 L418.8 487.4 M423.0 490.8 L423.7 490.3 L424.6 489.5 L425.7 488.6 L426.6 487.9 L427.3 487.4 M449.5 478.0 L449.6 477.0 L449.8 475.5 L450.0 473.9 L450.5 472.4 L451.2 471.2 L452.2 470.3 L453.5 469.6 L455.0 469.1 L456.5 468.7 L458.0 468.6 L459.4 468.7 L460.9 469.1 L462.4 469.6 L463.7 470.3 L464.8 471.2 L465.7 472.3 L466.4 473.6 L466.9 475.0 L467.2 476.5 L467.4 478.0 L467.2 479.4 L466.9 480.8 L466.3 482.3 L465.6 483.6 L464.8 484.8 L463.8 485.9 L462.7 486.9 L461.4 487.9 L460.1 488.6 L458.8 489.1 L457.6 489.4 L456.3 489.5 L455.1 489.5 L453.9 489.1 L452.9 488.2 L452.0 486.6 L451.2 484.3 L450.5 481.8 L449.9 479.5 L449.5 478.0 M464.8 471.2 L465.4 471.3 L466.3 471.5 L467.3 471.8 L468.3 472.2 L469.1 472.9 L469.6 473.8 L470.1 475.0 L470.5 476.3 L470.7 477.6 L470.8 478.8 L470.5 480.0 L470.1 481.1 L469.5 482.3 L468.8 483.2 L468.2 483.9 L467.5 484.4 L466.7 484.6 L466.0 484.7 L465.3 484.8 L464.8 484.8 M458.8 489.1 L459.0 490.1 L459.3 491.5 L459.7 493.2 L460.1 495.0 L460.5 496.7 L461.1 498.4 L461.7 500.0 L462.4 501.7 L463.2 503.4 L463.9 505.3 L464.8 507.4 L465.8 509.7 L466.8 512.1 L467.6 514.1 L468.2 515.5 M452.9 488.2 L453.3 489.6 L453.9 491.6 L454.6 493.9 L455.4 496.2 L456.3 498.4 L457.2 500.5 L458.2 502.5 L459.2 504.5 L460.3 506.5 L461.4 508.7 L462.6 511.1 L464.0 513.9 L465.4 516.6 L466.5 519.0 L467.4 520.6 M458.0 471.2 L458.4 471.9 L459.1 473.0 L459.8 474.2 L460.6 475.3 L461.4 476.3 L462.3 477.0 L463.2 477.6 L464.2 478.1 L465.1 478.5 L465.7 478.8 M477.6 495.0 L478.1 494.5 L478.9 493.7 L479.8 492.8 L480.8 492.0 L481.9 491.6 L483.1 491.7 L484.4 492.0 L485.8 492.5 L487.3 493.0 L488.7 493.3 L490.1 493.4 L491.6 493.2 L493.0 493.1 L494.4 493.1 L495.5 493.3 L496.5 493.9 L497.4 494.7 L498.1 495.7 L498.6 496.7 L498.9 497.6 L499.0 498.5 L498.8 499.4 L498.4 500.3 L497.9 501.2 L497.2 501.9 L496.3 502.4 L495.1 502.9 L493.8 503.3 L492.5 503.5 L491.2 503.6 L489.9 503.3 L488.6 502.7 L487.2 502.0 L486.1 501.4 L485.3 501.0 M497.2 501.9 L498.2 501.8 L499.5 501.7 L501.1 501.6 L502.7 501.6 L504.0 501.9 L505.3 502.3 L506.5 502.9 L507.7 503.6 L508.6 504.4 L509.1 505.3 L509.3 506.4 L509.1 507.7 L508.7 509.0 L508.1 510.3 L507.4 511.2 L506.6 511.9 L505.6 512.4 L504.5 512.8 L503.4 512.9 L502.3 512.9 L501.2 512.7 L500.0 512.1 L498.9 511.4 L497.9 510.8 L497.2 510.4 M477.6 495.0 L477.8 495.9 L478.0 497.0 L478.3 498.4 L478.8 499.8 L479.3 501.0 L479.9 502.1 L480.7 503.2 L481.5 504.3 L482.5 505.3 L483.6 506.1 L484.8 506.8 L486.1 507.4 L487.5 507.8 L489.0 508.3 L490.4 508.7 L491.9 509.1 L493.4 509.5 L495.0 509.9 L496.3 510.2 L497.2 510.4 M468.2 491.6 L468.6 492.6 L469.2 494.0 L470.0 495.6 L470.8 497.2 L471.6 498.4 L472.6 499.4 L473.8 500.2 L475.0 500.9 L476.0 501.4 L476.7 501.9 M466.5 501.9 L466.2 502.8 L465.7 504.0 L465.3 505.5 L464.9 507.1 L464.8 508.7 L465.0 510.3 L465.4 512.1 L466.0 514.0 L466.7 515.7 L467.4 517.2 L468.1 518.4 L469.1 519.4 L470.0 520.3 L470.9 521.2 L471.6 522.3 L472.2 523.7 L472.6 525.3 L472.9 526.8 L473.1 528.2 L473.3 529.1 M466.5 501.9 L467.5 501.7 L468.9 501.3 L470.5 501.0 L472.0 500.9 L473.3 501.0 L474.4 501.5 L475.3 502.2 L476.2 503.1 L476.9 504.2 L477.6 505.3 L478.1 506.6 L478.5 508.1 L478.9 509.7 L479.1 511.1 L479.3 512.1 M484.4 496.7 L484.3 498.0 L484.1 499.9 L483.9 502.1 L483.7 504.0 L483.6 505.3 M477.6 515.5 L478.1 515.1 L478.9 514.4 L479.8 513.7 L480.8 513.1 L481.9 512.9 L483.1 513.2 L484.5 513.8 L486.0 514.5 L487.4 515.4 L488.7 516.4 L489.7 517.4 L490.7 518.5 L491.6 519.7 L492.3 521.0 L492.9 522.3 L493.4 523.7 L493.7 525.2 L493.9 526.6 L493.9 528.0 L493.8 529.1 L493.4 530.1 L492.9 531.0 L492.1 531.7 L491.3 532.3 L490.4 532.6 L489.3 532.5 L487.9 532.2 L486.5 531.7 L485.3 531.2 L484.4 530.8 M477.6 515.5 L477.2 516.4 L476.6 517.7 L475.9 519.1 L475.4 520.7 L475.0 522.3 L474.9 523.9 L475.0 525.7 L475.2 527.5 L475.5 529.2 L475.9 530.8 L476.4 532.4 L477.0 533.9 L477.7 535.4 L478.5 536.7 L479.3 537.7 L480.3 538.4 L481.5 538.8 L482.7 539.1 L483.7 539.2 L484.4 539.4 M471.6 536.0 L472.3 535.6 L473.2 535.2 L474.3 534.7 L475.5 534.3 L476.7 534.3 L478.0 534.6 L479.5 535.2 L481.0 535.9 L482.4 536.8 L483.6 537.7 L484.5 538.6 L485.4 539.6 L486.1 540.7 L486.7 541.7 L487.0 542.8 L486.9 543.9 L486.6 545.1 L486.1 546.2 L485.6 547.2 L485.3 547.9 M425.6 520.6 L426.0 520.1 L426.6 519.3 L427.3 518.4 L428.1 517.7 L429.0 517.2 L430.1 517.0 L431.4 517.0 L432.7 517.2 L433.9 517.5 L435.0 518.1 L435.8 518.8 L436.5 519.8 L437.0 520.9 L437.4 522.1 L437.5 523.2 L437.4 524.3 L437.0 525.4 L436.4 526.5 L435.7 527.5 L435.0 528.3 L434.1 528.8 L433.1 529.1 L432.0 529.3 L430.9 529.3 L429.8 529.1 L428.9 528.8 L427.9 528.2 L426.9 527.4 L426.1 526.6 L425.6 525.7 L425.3 524.7 L425.3 523.6 L425.4 522.4 L425.5 521.3 L425.6 520.6 M437.5 523.2 L438.2 522.5 L439.2 521.5 L440.3 520.5 L441.5 519.5 L442.6 518.9 L443.8 518.7 L445.1 518.7 L446.4 518.9 L447.6 519.2 L448.6 519.8 L449.4 520.6 L450.0 521.7 L450.5 523.0 L450.9 524.1 L451.2 524.9 M438.4 534.3 L438.9 533.4 L439.6 532.1 L440.5 530.7 L441.5 529.3 L442.6 528.3 L443.8 527.6 L445.2 527.1 L446.7 526.8 L448.1 526.6 L449.5 526.6 L450.8 526.8 L452.1 527.1 L453.4 527.6 L454.5 528.3 L455.4 529.1 L456.1 530.3 L456.5 531.9 L456.8 533.5 L457.0 535.0 L457.1 536.0 M438.4 534.3 L438.7 535.2 L439.1 536.7 L439.6 538.3 L440.2 539.8 L440.9 541.1 L441.8 542.1 L442.8 542.9 L443.9 543.7 L445.0 544.2 L446.0 544.5 L447.1 544.5 L448.1 544.3 L449.2 544.0 L450.2 543.4 L451.2 542.8 L452.1 541.9 L453.1 540.7 L454.1 539.5 L454.9 538.4 L455.4 537.7 M447.7 530.8 L447.4 531.9 L446.8 533.4 L446.2 535.1 L445.6 536.6 L445.2 537.7 M447.7 530.8 L447.9 532.0 L448.1 533.7 L448.3 535.6 L448.5 537.4 L448.6 538.5 M447.7 530.8 L448.4 531.6 L449.4 532.8 L450.4 534.0 L451.4 535.2 L452.0 536.0 M440.9 491.6 L440.6 492.6 L440.1 493.9 L439.6 495.4 L439.3 497.0 L439.2 498.4 L439.5 499.9 L440.1 501.3 L440.8 502.8 L441.7 504.1 L442.6 505.3 L443.9 506.2 L445.4 507.0 L447.1 507.7 L448.5 508.3 L449.5 508.7 M442.6 474.6 L443.2 475.5 L444.0 476.8 L444.9 478.3 L445.6 479.9 L446.0 481.4 L446.0 482.8 L445.5 484.2 L445.0 485.6 L444.5 487.0 L444.3 488.2 L444.5 489.5 L444.9 490.7 L445.4 491.9 L446.1 492.8 L446.9 493.3 L448.0 493.4 L449.3 493.1 L450.7 492.5 L452.0 492.0 L452.9 491.6 M429.0 522.3 L429.5 522.0 L430.2 521.5 L431.0 521.0 L431.8 520.7 L432.4 520.6 L432.9 521.0 L433.4 521.7 L433.8 522.5 L434.1 523.4 L434.1 524.0 L433.8 524.5 L433.3 524.9 L432.6 525.3 L432.0 525.5 L431.5 525.7 M456.3 515.5 L456.7 516.4 L457.3 517.7 L458.0 519.3 L458.8 520.8 L459.7 522.3 L460.7 523.8 L461.9 525.4 L463.0 526.9 L464.1 528.2 L464.8 529.1 M492.4 533.5 L493.3 533.7 L494.5 533.8 L495.8 534.0 L497.1 534.4 L498.2 535.0 L499.0 535.9 L499.8 537.0 L500.4 538.2 L500.8 539.5 L501.1 540.8 L501.1 542.0 L501.0 543.3 L500.7 544.5 L500.3 545.7 L499.6 546.5 L498.7 547.1 L497.4 547.5 L496.0 547.7 L494.7 547.9 L493.9 548.0 M450.5 550.9 L450.6 549.8 L450.6 548.3 L450.6 546.6 L450.8 545.0 L451.3 543.6 L452.0 542.6 L452.9 541.7 L454.0 540.9 L455.2 540.4 L456.3 540.0 L457.5 539.9 L458.7 540.1 L460.0 540.4 L461.1 540.9 L462.1 541.5 L462.9 542.3 L463.6 543.5 L464.2 544.7 L464.6 545.8 L465.0 546.5 M450.5 550.9 L450.8 551.9 L451.0 553.4 L451.4 555.2 L452.0 556.8 L452.7 558.1 L453.7 559.0 L455.0 559.8 L456.5 560.4 L457.9 560.8 L459.2 561.0 L460.5 560.9 L461.7 560.6 L462.9 560.1 L464.0 559.5 L465.0 558.8 L465.8 557.9 L466.5 556.8 L467.1 555.6 L467.5 554.5 L467.9 553.8 M462.1 541.5 L462.9 541.9 L464.1 542.6 L465.4 543.3 L466.7 544.2 L467.9 545.1 L468.9 546.1 L469.9 547.2 L470.8 548.5 L471.6 549.7 L472.2 550.9 L472.6 552.1 L472.8 553.5 L472.9 554.7 L472.9 555.9 L472.9 556.6 M459.2 548.0 L459.8 548.8 L460.6 550.0 L461.6 551.4 L462.6 552.7 L463.5 553.8 L464.5 554.6 L465.5 555.3 L466.4 555.8 L467.3 556.3 L467.9 556.6 M447.7 509.0 L448.6 509.9 L450.0 511.2 L451.6 512.8 L453.3 514.5 L454.9 516.2 L456.3 518.0 L457.8 520.0 L459.2 522.1 L460.6 524.2 L462.1 526.3 L463.6 528.3 L465.1 530.3 L466.5 532.3 L468.0 534.3 L469.3 536.4 L470.6 538.6 L471.7 540.8 L472.8 543.1 L474.0 545.5 L475.1 548.0 L476.2 550.6 L477.4 553.4 L478.6 556.3 L479.7 559.3 L480.9 562.4 L482.1 566.0 L483.5 570.1 L484.7 574.1 L485.9 577.6 L486.6 580.0 M457.8 513.3 L458.7 514.9 L460.1 517.1 L461.7 519.7 L463.4 522.4 L465.0 524.9 L466.5 527.4 L468.2 530.0 L469.8 532.6 L471.2 534.9 L472.2 536.4 M504.0 550.9 L503.4 551.6 L502.6 552.6 L501.6 553.8 L500.6 555.2 L499.6 556.6 L498.7 558.2 L497.8 559.9 L496.8 561.7 L496.0 563.5 L495.3 565.3 L494.8 567.2 L494.5 569.2 L494.2 571.1 L494.0 572.8 L493.9 574.0 M504.0 550.9 L504.1 552.0 L504.4 553.6 L504.7 555.5 L504.8 557.6 L504.7 559.5 L504.3 561.6 L503.7 563.7 L503.0 565.9 L502.1 568.0 L501.1 569.6 L499.8 570.9 L498.1 572.0 L496.4 572.8 L494.9 573.5 L493.9 574.0 M501.1 556.6 L500.6 558.0 L500.0 559.9 L499.3 562.0 L498.6 564.0 L498.2 565.3 M489.5 556.6 L489.1 557.6 L488.4 559.0 L487.6 560.6 L487.0 562.3 L486.6 563.9 L486.6 565.3 L486.8 566.8 L487.1 568.3 L487.5 569.7 L488.1 571.1 L488.8 572.4 L489.8 573.8 L490.9 575.0 L491.8 576.1 L492.4 576.9 M489.5 556.6 L490.2 557.6 L491.2 559.0 L492.2 560.6 L493.2 562.3 L493.9 563.9 L494.2 565.3 L494.2 566.8 L494.2 568.3 L494.0 569.7 L493.9 571.1 L493.6 572.4 L493.3 573.8 L493.0 575.0 L492.6 576.1 L492.4 576.9 M457.8 571.1 L458.5 571.4 L459.7 571.9 L461.0 572.4 L462.3 573.1 L463.5 574.0 L464.8 575.1 L466.1 576.5 L467.4 577.9 L468.5 579.2 L469.3 580.0 M475.1 571.1 L474.8 571.9 L474.4 573.1 L474.0 574.5 L473.7 575.8 L473.6 576.9 L474.0 577.7 L474.6 578.5 L475.4 579.1 L476.1 579.6 L476.5 580.0 M517.7 633.3 L518.3 632.6 L519.2 631.4 L520.2 630.2 L521.5 629.0 L522.8 628.2 L524.3 627.7 L526.0 627.3 L527.9 627.1 L529.7 627.1 L531.3 627.4 L532.9 627.8 L534.4 628.5 L535.9 629.4 L537.1 630.4 L538.1 631.6 L538.9 633.1 L539.5 634.8 L539.9 636.7 L540.0 638.5 L539.8 640.2 L539.3 641.7 L538.4 643.2 L537.3 644.7 L536.1 646.0 L534.7 647.0 L533.2 647.7 L531.5 648.3 L529.6 648.7 L527.8 648.9 L526.2 648.7 L524.6 648.2 L523.1 647.4 L521.7 646.3 L520.4 645.0 L519.4 643.6 L518.7 641.7 L518.2 639.3 L518.0 636.9 L517.8 634.8 L517.7 633.3 M519.4 635.0 L520.5 635.5 L522.2 636.1 L524.1 636.8 L526.1 637.6 L527.9 638.4 L529.7 639.4 L531.7 640.6 L533.6 641.8 L535.3 642.8 L536.4 643.6 M524.5 637.1 L524.9 636.5 L525.5 635.7 L526.1 634.7 L526.7 633.9 L527.0 633.3 M528.8 638.8 L529.3 638.2 L530.0 637.4 L530.9 636.4 L531.6 635.6 L532.2 635.0 M526.2 637.9 L526.1 638.7 L525.9 639.7 L525.7 640.9 L525.5 642.0 L525.3 642.7 M531.3 640.2 L531.2 640.9 L531.0 642.1 L530.8 643.3 L530.6 644.5 L530.5 645.3 M509.1 662.3 L510.3 662.0 L512.1 661.4 L514.0 660.9 L516.0 660.5 L517.7 660.6 L519.1 661.1 L520.5 661.9 L521.8 663.0 L522.9 664.3 L523.6 665.7 L524.1 667.4 L524.4 669.5 L524.4 671.6 L524.1 673.8 L523.6 676.0 L522.8 678.2 L521.7 680.5 L520.4 682.8 L519.0 684.8 L517.7 686.2 L516.3 687.0 L515.0 687.3 L513.6 687.2 L512.2 686.8 L510.8 686.2 L509.5 685.3 L508.2 684.1 L506.9 682.7 L505.7 681.1 L504.9 679.4 L504.3 677.5 L503.9 675.4 L503.7 673.2 L503.7 671.0 L504.0 669.1 L504.7 667.4 L505.9 665.8 L507.2 664.4 L508.3 663.2 L509.1 662.3 M510.8 664.0 L511.3 665.7 L512.0 668.1 L512.8 670.8 L513.6 673.5 L514.3 676.0 L514.9 678.2 L515.5 680.3 L516.0 682.4 L516.5 684.1 L516.8 685.3 M512.6 669.1 L513.3 668.8 L514.5 668.2 L515.7 667.5 L516.9 667.0 L517.7 666.6 M513.9 674.3 L514.7 674.0 L516.0 673.6 L517.3 673.2 L518.5 672.8 L519.4 672.6 M512.2 669.1 L511.6 669.7 L510.7 670.4 L509.8 671.3 L508.9 672.0 L508.3 672.6 M514.3 676.8 L513.6 677.3 L512.7 678.1 L511.6 678.9 L510.6 679.7 L510.0 680.2 M517.7 633.3 L517.2 632.7 L516.5 631.8 L515.7 630.8 L514.9 629.5 L514.3 628.2 L513.8 626.7 L513.3 625.0 L512.9 623.1 L512.6 621.3 L512.6 619.7 L512.7 618.1 L513.1 616.5 L513.5 615.0 L514.0 613.8 L514.3 612.9 M509.1 662.3 L509.6 661.4 L510.4 660.2 L511.2 658.8 L512.0 657.2 L512.6 655.5 L512.9 653.7 L513.2 651.7 L513.4 649.5 L513.5 647.4 L513.4 645.3 L513.1 643.2 L512.7 641.0 L512.1 638.9 L511.5 636.9 L510.8 635.0 L510.2 633.3 L509.4 631.7 L508.6 630.3 L507.9 629.1 L507.4 628.2 M459.7 609.5 L460.3 608.7 L461.2 607.5 L462.3 606.3 L463.5 605.1 L464.8 604.3 L466.3 603.9 L468.1 603.6 L470.0 603.6 L471.8 603.8 L473.3 604.3 L474.7 605.3 L475.9 606.6 L476.9 608.1 L477.8 609.7 L478.4 611.2 L478.9 612.5 L479.1 613.9 L479.1 615.3 L478.9 616.6 L478.4 618.0 L477.8 619.4 L476.8 621.0 L475.7 622.4 L474.5 623.8 L473.3 624.8 L472.0 625.6 L470.6 626.2 L469.2 626.6 L467.8 626.7 L466.5 626.5 L465.3 626.0 L464.2 625.3 L463.1 624.3 L462.2 623.0 L461.4 621.4 L460.8 619.2 L460.4 616.5 L460.1 613.7 L459.9 611.2 L459.7 609.5 M440.9 635.0 L441.3 633.8 L441.9 632.1 L442.6 630.1 L443.4 628.1 L444.3 626.5 L445.5 625.2 L446.7 624.1 L448.1 623.0 L449.6 622.1 L451.2 621.4 L452.9 620.8 L454.9 620.4 L456.8 620.1 L458.5 619.9 L459.7 619.7 M440.9 635.0 L441.1 636.0 L441.2 637.4 L441.4 639.0 L441.8 640.6 L442.6 641.9 L443.9 642.9 L445.6 643.8 L447.5 644.6 L449.5 645.1 L451.2 645.3 L452.7 645.1 L454.1 644.6 L455.5 643.8 L456.8 642.9 L458.0 641.9 L459.2 640.6 L460.4 639.0 L461.5 637.4 L462.4 636.0 L463.1 635.0 M463.1 635.0 L463.8 636.0 L464.7 637.4 L465.8 638.9 L467.0 640.5 L468.2 641.9 L469.5 643.1 L470.8 644.4 L472.2 645.5 L473.6 646.4 L475.0 647.0 L476.4 647.1 L477.8 647.0 L479.1 646.6 L480.5 646.0 L481.9 645.3 L483.3 644.3 L484.7 643.1 L486.2 641.7 L487.5 640.1 L488.7 638.4 L489.7 636.6 L490.6 634.4 L491.4 632.2 L491.9 630.1 L492.1 628.2 L491.9 626.6 L491.4 625.1 L490.6 623.7 L489.7 622.5 L488.7 621.4 L487.4 620.4 L485.9 619.6 L484.3 618.9 L482.8 618.4 L481.9 618.0 M463.1 635.0 L463.2 636.5 L463.4 638.6 L463.7 641.1 L464.1 643.4 L464.8 645.3 L465.8 646.7 L467.1 648.0 L468.5 649.1 L470.1 649.9 L471.6 650.4 L473.4 650.5 L475.3 650.1 L477.3 649.6 L479.0 649.0 L480.2 648.7 M451.2 631.6 L452.1 631.1 L453.6 630.2 L455.2 629.2 L456.7 628.5 L458.0 628.2 L459.0 628.4 L459.9 629.0 L460.7 629.8 L461.2 630.7 L461.4 631.6 L461.2 632.6 L460.7 633.9 L459.9 635.1 L459.0 636.1 L458.0 636.7 L456.7 636.8 L455.2 636.5 L453.6 635.9 L452.1 635.4 L451.2 635.0 M463.9 620.5 L464.3 620.2 L464.8 619.8 L465.4 619.3 L466.0 618.9 L466.5 618.8 L467.0 619.1 L467.5 619.6 L467.9 620.2 L468.2 620.9 L468.2 621.4 L468.0 621.9 L467.5 622.3 L466.8 622.8 L466.2 623.0 L465.7 623.1 L465.2 622.8 L464.8 622.3 L464.5 621.6 L464.2 621.0 L463.9 620.5 M456.3 591.5 L457.9 591.8 L460.1 592.2 L462.7 592.7 L465.5 593.3 L468.2 594.1 L470.9 595.1 L473.6 596.4 L476.4 597.7 L479.2 599.3 L481.9 600.9 L484.4 602.7 L486.9 604.6 L489.3 606.7 L491.7 608.8 L493.8 611.2 L495.9 613.9 L497.9 617.0 L499.7 620.2 L501.2 622.9 L502.3 624.8 M459.7 595.8 L461.6 596.3 L464.2 597.0 L467.3 597.9 L470.5 598.9 L473.3 600.1 L475.9 601.4 L478.3 602.8 L480.7 604.3 L483.0 606.0 L485.3 607.7 L487.5 609.6 L489.7 611.6 L491.9 613.6 L493.8 615.8 L495.5 618.0 L496.9 620.5 L498.2 623.2 L499.2 625.9 L500.0 628.3 L500.6 629.9 M471.6 594.1 L473.5 594.7 L476.2 595.6 L479.3 596.7 L482.4 597.9 L485.3 599.2 L487.8 600.7 L490.3 602.2 L492.8 603.9 L495.1 605.8 L497.2 607.7 L499.3 610.1 L501.3 612.9 L503.1 615.6 L504.6 618.0 L505.7 619.7 M478.4 592.4 L480.4 593.0 L483.1 593.9 L486.2 595.0 L489.4 596.2 L492.1 597.5 L494.4 599.0 L496.6 600.7 L498.6 602.5 L500.5 604.3 L502.3 606.0 L504.0 607.9 L505.6 609.9 L507.1 611.8 L508.3 613.4 L509.1 614.6 M480.2 606.0 L481.6 607.4 L483.7 609.3 L486.0 611.6 L488.4 614.0 L490.4 616.3 L492.1 618.7 L493.7 621.5 L495.1 624.2 L496.3 626.6 L497.2 628.2 M400.0 570.2 L402.4 571.8 L405.8 574.1 L409.7 576.7 L413.6 579.5 L417.1 582.2 L420.0 584.8 L422.8 587.4 L425.4 590.2 L428.0 592.9 L430.7 595.8 L433.5 598.8 L436.2 601.9 L439.0 605.1 L441.7 608.2 L444.3 611.2 L447.0 614.2 L449.8 617.4 L452.4 620.4 L454.7 623.0 L456.3 624.8 M401.7 568.5 L402.9 568.9 L404.5 569.5 L406.4 570.2 L408.4 571.0 L410.2 571.9 L412.0 573.1 L414.0 574.5 L415.8 576.0 L417.5 577.4 L418.8 578.8 L419.6 580.0 L420.0 581.2 L420.2 582.3 L420.3 583.2 L420.5 583.9 M401.7 568.5 L402.3 569.7 L403.2 571.5 L404.3 573.5 L405.5 575.4 L406.8 577.1 L408.4 578.3 L410.2 579.5 L412.0 580.5 L413.8 581.4 L415.3 582.2 L416.7 582.8 L417.9 583.2 L418.9 583.5 L419.8 583.7 L420.5 583.9 M420.5 571.9 L421.4 572.3 L422.7 572.8 L424.2 573.5 L425.8 574.3 L427.3 575.3 L428.7 576.8 L430.3 578.5 L431.7 580.3 L433.1 582.2 L434.1 583.9 L434.8 585.5 L435.2 587.1 L435.5 588.5 L435.7 589.8 L435.8 590.7 M420.5 571.9 L420.6 573.4 L420.8 575.5 L421.0 577.8 L421.5 580.2 L422.2 582.2 L423.2 583.8 L424.5 585.4 L426.0 586.8 L427.5 588.0 L429.0 589.0 L430.5 589.7 L432.0 590.1 L433.6 590.4 L434.9 590.5 L435.8 590.7 M417.1 585.6 L418.2 585.8 L419.8 586.0 L421.8 586.3 L423.7 586.7 L425.6 587.3 L427.3 588.1 L429.2 589.1 L430.9 590.2 L432.6 591.3 L434.1 592.4 L435.4 593.5 L436.6 594.7 L437.7 595.8 L438.6 596.8 L439.2 597.5 M417.1 585.6 L417.7 586.6 L418.6 588.0 L419.6 589.6 L420.8 591.1 L422.2 592.4 L423.7 593.3 L425.3 594.1 L427.1 594.7 L428.9 595.3 L430.7 595.8 L432.5 596.3 L434.5 596.7 L436.4 597.0 L438.1 597.3 L439.2 597.5 M440.9 582.2 L441.6 582.8 L442.5 583.7 L443.5 584.7 L444.5 586.0 L445.2 587.3 L445.6 588.8 L445.9 590.5 L446.1 592.4 L446.1 594.2 L446.0 595.8 L445.7 597.4 L445.1 599.0 L444.5 600.5 L443.9 601.7 L443.5 602.6 M440.9 582.2 L440.6 583.3 L440.2 585.0 L439.7 586.9 L439.4 588.9 L439.2 590.7 L439.3 592.5 L439.6 594.4 L440.0 596.2 L440.5 597.8 L440.9 599.2 L441.4 600.3 L442.0 601.1 L442.6 601.8 L443.1 602.3 L443.5 602.6 M429.0 600.9 L430.1 600.9 L431.7 600.8 L433.6 600.7 L435.6 600.7 L437.5 600.9 L439.5 601.4 L441.7 602.0 L443.8 602.7 L445.9 603.5 L447.7 604.3 L449.4 605.3 L451.1 606.5 L452.5 607.7 L453.7 608.7 L454.6 609.5 M429.0 600.9 L429.9 601.9 L431.1 603.4 L432.5 605.0 L434.1 606.5 L435.8 607.7 L437.7 608.6 L439.7 609.2 L441.9 609.7 L444.1 610.1 L446.0 610.3 L448.0 610.3 L450.0 610.2 L451.9 609.9 L453.4 609.6 L454.6 609.5 M429.0 611.2 L430.1 611.4 L431.7 611.6 L433.6 612.0 L435.6 612.4 L437.5 612.9 L439.5 613.4 L441.7 614.0 L443.9 614.7 L446.0 615.5 L447.7 616.3 L449.2 617.3 L450.4 618.4 L451.4 619.6 L452.3 620.7 L452.9 621.4 M429.0 611.2 L429.6 612.1 L430.4 613.6 L431.4 615.2 L432.7 616.7 L434.1 618.0 L435.9 618.9 L437.9 619.8 L440.1 620.4 L442.3 621.0 L444.3 621.4 L446.3 621.6 L448.3 621.6 L450.2 621.6 L451.7 621.4 L452.9 621.4 M444.3 619.7 L443.8 620.8 L443.0 622.5 L442.1 624.4 L441.3 626.4 L440.9 628.2 L440.9 630.0 L441.1 631.8 L441.5 633.6 L442.0 635.3 L442.6 636.7 L443.5 638.1 L444.7 639.3 L445.9 640.3 L447.0 641.2 L447.7 641.9 M458.0 571.9 L458.9 572.6 L460.2 573.5 L461.7 574.6 L463.3 575.8 L464.8 577.1 L466.2 578.3 L467.7 579.7 L469.1 581.1 L470.5 582.5 L471.6 583.9 L472.6 585.3 L473.4 586.9 L474.1 588.5 L474.6 589.8 L475.0 590.7 M458.0 571.9 L458.1 573.1 L458.3 574.8 L458.6 576.8 L459.0 578.7 L459.7 580.5 L460.7 582.0 L462.0 583.5 L463.4 584.9 L465.0 586.2 L466.5 587.3 L468.2 588.2 L470.2 589.1 L472.2 589.7 L473.8 590.3 L475.0 590.7 M475.0 570.2 L474.7 571.1 L474.3 572.4 L473.8 573.9 L473.5 575.5 L473.3 577.1 L473.4 578.7 L473.7 580.5 L474.1 582.3 L474.5 584.1 L475.0 585.6 L475.7 586.9 L476.4 588.1 L477.2 589.2 L478.0 590.1 L478.4 590.7 M475.0 570.2 L475.8 570.9 L476.9 571.7 L478.1 572.8 L479.3 574.0 L480.2 575.3 L480.8 576.9 L481.3 578.6 L481.7 580.4 L481.9 582.2 L481.9 583.9 L481.4 585.5 L480.7 587.1 L479.8 588.5 L479.0 589.8 L478.4 590.7 M480.2 578.8 L481.1 578.4 L482.4 577.9 L483.9 577.3 L485.5 577.0 L487.0 577.1 L488.4 577.6 L489.9 578.5 L491.3 579.7 L492.6 580.9 L493.8 582.2 L494.7 583.5 L495.6 585.1 L496.2 586.7 L496.8 588.0 L497.2 589.0 M480.2 578.8 L480.6 579.7 L481.1 581.1 L481.8 582.7 L482.6 584.3 L483.6 585.6 L484.7 586.7 L486.0 587.7 L487.5 588.6 L489.0 589.4 L490.4 589.8 L491.9 590.0 L493.4 589.8 L495.0 589.5 L496.3 589.2 L497.2 589.0 M495.5 575.3 L496.4 575.0 L497.7 574.5 L499.3 573.9 L500.8 573.6 L502.3 573.6 L503.8 574.2 L505.4 575.1 L506.9 576.3 L508.2 577.5 L509.1 578.8 L509.6 580.1 L509.6 581.7 L509.5 583.3 L509.2 584.6 L509.1 585.6 M495.5 575.3 L495.7 576.3 L495.9 577.7 L496.2 579.2 L496.6 580.8 L497.2 582.2 L498.0 583.4 L498.9 584.7 L500.0 585.8 L501.1 586.7 L502.3 587.3 L503.7 587.4 L505.3 587.0 L506.8 586.5 L508.2 585.9 L509.1 585.6 M498.9 585.6 L499.4 586.5 L500.2 587.7 L501.0 589.2 L501.8 590.8 L502.3 592.4 L502.6 594.1 L502.7 595.9 L502.7 597.7 L502.6 599.4 L502.3 600.9 L501.8 602.3 L501.0 603.5 L500.2 604.5 L499.4 605.4 L498.9 606.0 M505.7 583.9 L506.5 585.0 L507.7 586.6 L509.0 588.5 L510.2 590.5 L510.8 592.4 L511.0 594.4 L510.8 596.6 L510.4 598.8 L509.8 600.9 L509.1 602.6 L508.3 604.1 L507.1 605.3 L505.9 606.3 L504.8 607.1 L504.0 607.7 M485.3 560.0 L485.7 561.2 L486.3 562.8 L487.0 564.7 L487.8 566.7 L488.7 568.5 L489.7 570.4 L490.8 572.3 L492.0 574.3 L493.1 575.9 L493.8 577.1 M495.5 560.0 L495.7 560.9 L496.0 562.2 L496.3 563.8 L496.7 565.3 L497.2 566.8 L497.8 568.3 L498.6 569.9 L499.4 571.4 L500.1 572.7 L500.6 573.6 M510.8 590.7 L511.8 591.1 L513.2 591.6 L514.7 592.2 L516.3 593.0 L517.7 594.1 L518.9 595.5 L520.2 597.1 L521.4 598.9 L522.3 600.7 L522.8 602.6 L522.7 604.7 L522.2 607.0 L521.4 609.3 L520.4 611.3 L519.4 612.9 L518.2 613.9 L516.7 614.6 L515.2 614.9 L513.8 614.9 L512.6 614.6 L511.6 613.9 L510.7 612.9 L510.0 611.6 L509.4 609.9 L509.1 607.7 L509.2 604.7 L509.5 600.8 L510.0 596.8 L510.5 593.2 L510.8 590.7 M512.6 594.1 L513.1 596.7 L513.8 600.5 L514.7 604.7 L515.4 608.6 L516.0 611.2 M519.4 590.7 L520.4 591.6 L521.8 592.9 L523.4 594.3 L524.9 595.9 L526.2 597.5 L527.2 599.1 L528.1 600.9 L528.9 602.7 L529.4 604.4 L529.6 606.0 L529.4 607.6 L528.9 609.2 L528.1 610.7 L527.2 612.0 L526.2 612.9 L524.9 613.3 L523.4 613.4 L521.8 613.2 L520.4 613.0 L519.4 612.9 M492.1 631.6 L492.8 632.0 L493.9 632.4 L495.2 633.0 L496.3 633.9 L497.2 635.0 L497.8 636.6 L498.4 638.6 L498.8 640.8 L498.9 643.1 L498.9 645.3 L498.5 647.3 L497.9 649.4 L497.0 651.4 L496.2 653.5 L495.5 655.5 L494.9 657.7 L494.3 660.1 L493.7 662.4 L493.3 664.3 L492.9 665.7 M492.1 631.6 L491.8 633.0 L491.4 634.9 L491.0 637.1 L490.6 639.5 L490.4 641.9 L490.4 644.1 L490.5 646.5 L490.7 648.9 L491.0 651.4 L491.2 653.8 L491.5 656.4 L491.9 659.1 L492.3 661.8 L492.7 664.1 L492.9 665.7 M494.6 636.7 L494.6 640.6 L494.6 646.4 L494.6 652.7 L494.6 658.4 L494.6 662.3 M468.2 658.9 L469.3 658.4 L470.9 657.6 L472.8 656.7 L474.8 656.0 L476.7 655.5 L478.7 655.3 L480.9 655.3 L483.1 655.4 L485.2 655.8 L487.0 656.4 L488.5 657.3 L490.0 658.7 L491.2 660.1 L492.2 661.4 L492.9 662.3 M468.2 658.9 L469.1 659.6 L470.3 660.7 L471.7 661.9 L473.3 663.1 L475.0 664.0 L476.9 664.8 L479.0 665.4 L481.2 665.9 L483.3 666.3 L485.3 666.6 L487.1 666.6 L488.9 666.4 L490.5 666.2 L491.9 665.9 L492.9 665.7 M349.7 697.4 L350.3 696.7 L351.2 695.8 L352.3 694.8 L353.4 693.9 L354.5 693.3 L355.8 693.1 L357.1 693.2 L358.5 693.4 L359.8 693.7 L361.0 694.1 L362.2 694.7 L363.4 695.4 L364.5 696.3 L365.3 697.2 L365.9 698.2 L366.0 699.3 L365.9 700.5 L365.5 701.8 L364.9 702.9 L364.2 703.8 L363.4 704.5 L362.3 705.0 L361.0 705.3 L359.8 705.5 L358.6 705.5 L357.4 705.3 L356.2 704.9 L355.0 704.4 L353.9 703.8 L352.9 703.0 L352.1 702.0 L351.3 700.7 L350.6 699.4 L350.1 698.2 L349.7 697.4 M352.1 696.6 L352.9 696.8 L354.0 697.1 L355.2 697.4 L356.6 697.8 L357.8 698.2 L359.0 698.7 L360.3 699.2 L361.6 699.8 L362.7 700.3 L363.4 700.6 M364.2 699.8 L365.0 700.0 L366.1 700.3 L367.4 700.6 L368.7 701.0 L369.9 701.4 L371.1 702.0 L372.4 702.7 L373.6 703.5 L374.5 704.1 L374.7 704.6 L374.2 705.0 L373.0 705.2 L371.5 705.3 L370.0 705.4 L369.1 705.5 M358.6 705.5 L359.0 706.2 L359.5 707.4 L360.2 708.7 L360.7 710.0 L361.0 711.1 L361.1 712.2 L361.0 713.3 L360.8 714.3 L360.5 715.0 L360.2 715.2 L359.8 714.6 L359.2 713.3 L358.7 711.8 L358.1 710.4 L357.8 709.5 M380.4 693.3 L380.8 692.7 L381.3 691.7 L382.0 690.7 L382.7 689.5 L383.6 688.5 L384.7 687.5 L386.0 686.5 L387.4 685.5 L388.8 684.5 L390.1 683.6 L391.4 682.8 L392.6 682.1 L393.9 681.4 L395.2 680.9 L396.6 680.4 L398.1 680.0 L399.8 679.8 L401.5 679.6 L403.1 679.5 L404.6 679.6 L406.1 679.8 L407.4 680.2 L408.7 680.7 L409.9 681.3 L411.1 682.0 L412.2 682.8 L413.3 683.7 L414.3 684.7 L415.2 685.8 L416.0 686.9 L416.5 688.2 L416.9 689.6 L417.2 691.1 L417.4 692.4 L417.6 693.3 M380.4 693.3 L380.2 694.5 L380.0 696.1 L379.7 697.9 L379.6 699.8 L379.6 701.4 L379.9 702.9 L380.5 704.3 L381.2 705.6 L381.7 706.8 L382.0 707.9 L381.9 708.7 L381.4 709.4 L380.8 710.0 L380.4 710.5 L380.4 711.1 L380.9 711.8 L381.7 712.5 L382.8 713.2 L384.0 713.8 L385.3 714.3 L386.7 714.7 L388.5 715.0 L390.3 715.3 L392.0 715.6 L393.3 716.0 L394.2 716.6 L394.7 717.4 L395.2 718.3 L395.7 718.9 L396.6 719.2 L397.9 719.0 L399.5 718.4 L401.3 717.7 L403.1 716.8 L404.6 716.0 L406.1 715.1 L407.4 714.1 L408.7 713.1 L409.9 712.1 L411.1 711.1 L412.2 710.2 L413.3 709.2 L414.3 708.3 L415.2 707.3 L416.0 706.3 L416.5 705.1 L416.9 703.8 L417.2 702.5 L417.4 701.1 L417.6 699.8 L417.7 698.4 L417.7 696.9 L417.7 695.5 L417.6 694.2 L417.6 693.3 M386.9 688.5 L387.3 689.2 L387.9 690.2 L388.5 691.3 L389.3 692.4 L390.1 693.3 L391.0 694.2 L391.9 695.0 L392.9 695.7 L394.0 696.3 L394.9 696.6 L395.9 696.6 L397.0 696.4 L398.0 696.1 L398.9 695.6 L399.8 694.9 L400.6 694.2 L401.4 693.2 L402.2 692.2 L402.7 691.1 L403.0 690.1 L403.0 689.1 L402.7 687.9 L402.2 686.8 L401.7 685.9 L401.4 685.3 M388.5 694.9 L388.2 696.1 L387.6 697.8 L387.1 699.6 L386.8 701.5 L386.9 703.0 L387.4 704.3 L388.3 705.4 L389.4 706.3 L390.5 707.2 L391.7 707.9 L392.9 708.5 L394.2 709.0 L395.5 709.4 L396.9 709.5 L398.2 709.5 L399.5 709.2 L400.9 708.7 L402.3 708.0 L403.6 707.2 L404.6 706.3 L405.6 705.1 L406.3 703.6 L407.0 702.1 L407.5 700.7 L407.9 699.8 M393.3 688.5 L393.8 689.0 L394.4 689.9 L395.1 690.7 L395.9 691.4 L396.6 691.7 L397.3 691.4 L398.0 690.7 L398.7 689.9 L399.4 689.0 L399.8 688.5 M394.9 696.6 L394.7 697.5 L394.2 698.8 L393.7 700.4 L393.4 701.8 L393.3 703.0 L393.7 703.9 L394.4 704.7 L395.3 705.4 L396.0 705.9 L396.6 706.3 M404.6 680.4 L404.8 681.3 L405.1 682.6 L405.4 684.1 L405.8 685.6 L406.3 686.9 L406.8 688.0 L407.4 689.1 L408.0 690.1 L408.7 691.0 L409.5 691.7 L410.4 692.3 L411.6 692.7 L412.7 693.0 L413.7 693.2 L414.3 693.3 M409.5 682.0 L409.8 683.0 L410.3 684.4 L410.8 685.9 L411.3 687.4 L411.9 688.5 L412.6 689.1 L413.3 689.6 L414.1 689.8 L414.7 690.0 L415.2 690.1 M382.0 707.9 L382.9 708.4 L384.1 709.1 L385.6 709.9 L387.1 710.6 L388.5 711.1 L389.9 711.3 L391.4 711.3 L392.8 711.3 L394.1 711.2 L394.9 711.1 M396.6 711.1 L397.2 711.4 L398.1 711.9 L399.1 712.4 L400.3 712.7 L401.4 712.7 L402.7 712.3 L404.2 711.6 L405.7 710.8 L407.0 710.0 L407.9 709.5 M390.1 691.7 L390.8 693.2 L391.9 695.4 L393.1 697.8 L394.2 699.9 L394.9 701.4 M399.8 694.9 L400.3 696.2 L401.0 698.0 L401.8 700.0 L402.5 701.8 L403.0 703.0 M437.0 693.3 L437.4 692.4 L437.9 691.1 L438.5 689.6 L439.3 688.1 L440.2 686.9 L441.3 685.8 L442.5 684.8 L443.8 684.0 L445.2 683.3 L446.7 682.8 L448.2 682.7 L449.9 683.0 L451.7 683.4 L453.3 683.7 L454.7 683.6 L455.9 683.2 L456.8 682.5 L457.6 681.7 L458.5 681.0 L459.6 680.4 L461.0 680.0 L462.7 679.7 L464.4 679.5 L466.1 679.4 L467.7 679.6 L469.1 680.1 L470.5 680.8 L471.9 681.7 L473.1 682.7 L474.1 683.6 L474.9 684.6 L475.5 685.7 L476.0 686.7 L476.6 687.7 L477.4 688.5 L478.5 688.9 L479.9 689.1 L481.4 689.3 L482.8 689.5 L483.8 690.1 L484.7 691.1 L485.3 692.3 L485.8 693.7 L486.2 695.2 L486.3 696.6 L486.0 697.9 L485.4 699.2 L484.7 700.4 L484.1 701.7 L483.8 703.0 L483.9 704.3 L484.2 705.6 L484.7 706.9 L485.1 708.2 L485.5 709.5 L485.7 710.8 L486.1 712.0 L486.3 713.3 L486.4 714.6 L486.3 716.0 L485.8 717.5 L485.2 719.2 L484.4 721.0 L483.4 722.6 L482.2 724.0 L480.9 725.3 L479.3 726.4 L477.6 727.4 L475.8 728.2 L474.1 728.9 L472.5 729.4 L470.8 729.7 L469.2 729.9 L467.6 729.9 L466.1 729.7 L464.7 729.2 L463.4 728.3 L462.1 727.3 L460.9 726.4 L459.6 725.7 L458.3 725.2 L457.1 724.9 L455.8 724.7 L454.5 724.4 L453.1 724.0 L451.6 723.5 L449.9 723.0 L448.1 722.4 L446.5 721.7 L445.1 720.8 L443.8 719.7 L442.8 718.5 L441.9 717.1 L441.0 715.7 L440.2 714.3 L439.4 713.1 L438.8 711.8 L438.1 710.5 L437.5 709.2 L437.0 707.9 L436.4 706.6 L435.7 705.4 L435.1 704.1 L434.7 702.8 L434.5 701.4 L434.8 699.8 L435.3 697.9 L435.9 696.1 L436.6 694.5 L437.0 693.3 M446.7 682.8 L447.1 683.6 L447.6 684.8 L448.2 686.1 L449.0 687.4 L449.9 688.5 L451.0 689.4 L452.2 690.2 L453.5 690.9 L454.9 691.4 L456.4 691.7 L457.9 691.7 L459.6 691.5 L461.4 691.1 L463.0 690.6 L464.4 690.1 L465.6 689.6 L466.6 688.9 L467.5 688.2 L468.4 687.5 L469.3 686.9 L470.3 686.2 L471.5 685.4 L472.6 684.7 L473.5 684.1 L474.1 683.6 M467.7 686.9 L467.8 687.8 L468.1 689.2 L468.3 690.7 L468.7 692.2 L469.3 693.3 L470.0 694.1 L470.9 694.7 L471.9 695.2 L473.0 695.5 L474.1 695.8 L475.4 695.9 L476.8 695.9 L478.2 695.7 L479.5 695.4 L480.6 694.9 L481.5 694.2 L482.3 693.1 L482.9 691.9 L483.5 690.8 L483.8 690.1 M443.4 694.9 L444.3 694.7 L445.6 694.3 L447.0 693.8 L448.5 693.5 L449.9 693.3 L451.2 693.4 L452.5 693.6 L453.8 693.9 L455.1 694.4 L456.4 694.9 L457.7 695.7 L459.0 696.7 L460.4 697.7 L461.6 698.8 L462.8 699.8 L464.0 700.7 L465.0 701.7 L466.0 702.6 L466.9 703.6 L467.7 704.6 L468.3 705.9 L468.8 707.2 L469.2 708.6 L469.3 709.9 L469.3 711.1 L469.0 712.2 L468.5 713.3 L467.8 714.3 L467.0 715.2 L466.1 716.0 L465.0 716.5 L463.7 717.0 L462.3 717.3 L460.9 717.5 L459.6 717.6 L458.3 717.5 L456.9 717.3 L455.6 717.0 L454.3 716.5 L453.1 716.0 L452.0 715.2 L451.0 714.3 L450.0 713.3 L449.1 712.2 L448.3 711.1 L447.5 710.0 L446.8 708.8 L446.1 707.5 L445.6 706.2 L445.1 704.6 L444.6 702.8 L444.2 700.5 L443.9 698.3 L443.6 696.3 L443.4 694.9 M458.0 706.3 L458.3 706.0 L458.8 705.5 L459.4 705.1 L459.9 704.7 L460.4 704.6 L460.8 704.9 L461.3 705.3 L461.6 705.9 L461.9 706.5 L462.0 707.1 L461.9 707.6 L461.7 708.2 L461.3 708.7 L460.9 709.2 L460.4 709.5 L459.8 709.7 L459.2 709.8 L458.5 709.8 L457.8 709.7 L457.2 709.5 L456.6 709.1 L455.9 708.5 L455.4 707.8 L455.0 707.0 L454.7 706.3 L454.8 705.5 L454.9 704.5 L455.3 703.6 L455.8 702.8 L456.4 702.2 L457.1 701.8 L458.1 701.5 L459.2 701.3 L460.2 701.3 L461.2 701.4 L462.1 701.8 L463.1 702.3 L464.0 703.0 L464.7 703.8 L465.3 704.6 L465.6 705.5 L465.7 706.5 L465.7 707.6 L465.5 708.6 L465.3 709.5 L464.9 710.3 L464.3 711.0 L463.6 711.7 L462.9 712.3 L462.0 712.7 L461.0 713.1 L459.9 713.4 L458.6 713.6 L457.4 713.7 L456.4 713.5 L455.4 713.2 L454.5 712.6 L453.6 711.9 L452.9 711.1 L452.3 710.3 L451.9 709.4 L451.6 708.5 L451.5 707.5 L451.4 706.5 L451.5 705.5 L451.8 704.4 L452.4 703.3 L453.0 702.2 L453.6 701.3 L453.9 700.6 M440.2 714.3 L441.1 714.5 L442.3 714.7 L443.8 715.0 L445.3 715.4 L446.7 716.0 L448.1 716.8 L449.6 717.9 L451.0 719.1 L452.3 720.1 L453.1 720.8 M459.6 725.7 L460.0 724.9 L460.5 723.9 L461.1 722.7 L461.9 721.6 L462.8 720.8 L463.9 720.3 L465.2 720.1 L466.6 719.9 L467.9 719.7 L469.3 719.2 L470.6 718.5 L472.0 717.6 L473.4 716.6 L474.7 715.5 L475.8 714.3 L476.7 713.2 L477.5 711.9 L478.2 710.5 L478.7 709.2 L479.0 707.9 L479.0 706.5 L478.6 705.0 L478.1 703.5 L477.7 702.3 L477.4 701.4 M437.0 707.9 L437.9 708.0 L439.2 708.3 L440.8 708.5 L442.2 708.9 L443.4 709.5 L444.3 710.3 L445.1 711.4 L445.8 712.6 L446.3 713.6 L446.7 714.3 M474.1 728.9 L474.3 728.0 L474.5 726.6 L474.8 725.1 L475.2 723.6 L475.8 722.4 L476.5 721.6 L477.5 720.9 L478.5 720.3 L479.6 719.8 L480.6 719.2 L481.7 718.5 L482.8 717.7 L483.9 717.0 L484.8 716.4 L485.5 716.0 M443.4 688.5 L443.7 689.2 L444.0 690.3 L444.4 691.5 L444.8 692.6 L445.1 693.3 M438.6 691.7 L439.3 692.2 L440.4 692.9 L441.6 693.7 L442.7 694.5 L443.4 694.9 M467.7 660.2 L468.5 659.6 L469.7 658.7 L471.1 657.7 L472.6 656.8 L474.1 656.2 L475.7 655.7 L477.3 655.5 L478.9 655.3 L480.6 655.3 L482.2 655.4 L483.9 655.6 L485.6 655.9 L487.3 656.4 L488.9 657.0 L490.3 657.8 L491.5 658.8 L492.6 660.2 L493.5 661.6 L494.4 663.0 L495.2 664.2 L495.8 665.4 L496.4 666.5 L496.9 667.6 L497.3 668.5 L497.6 669.1 M467.7 660.2 L468.7 660.5 L470.2 661.0 L472.0 661.5 L473.9 662.1 L475.8 662.6 L477.6 663.2 L479.6 663.9 L481.6 664.5 L483.6 665.2 L485.5 665.9 L487.2 666.6 L489.0 667.3 L490.7 668.0 L492.2 668.7 L493.5 669.1 L494.7 669.3 L495.6 669.3 L496.4 669.2 L497.1 669.1 L497.6 669.1 M472.5 660.2 L473.8 660.3 L475.7 660.3 L477.9 660.4 L480.1 660.6 L482.2 661.0 L484.3 661.7 L486.6 662.6 L488.7 663.6 L490.6 664.4 L491.9 665.1 M396.8 353.1 L397.0 351.9 L397.4 350.2 L397.8 348.2 L398.4 346.1 L399.2 344.2 L400.1 342.5 L401.3 340.8 L402.5 339.2 L404.0 337.6 L405.7 336.2 L407.7 334.7 L410.0 333.1 L412.5 331.7 L414.9 330.8 L417.0 330.5 L418.7 331.1 L420.4 332.4 L421.8 334.1 L423.1 336.0 L424.2 337.8 L425.2 339.6 L426.0 341.5 L426.7 343.5 L427.2 345.5 L427.5 347.5 L427.6 349.4 L427.4 351.5 L427.1 353.5 L426.8 355.2 L426.7 356.4 M408.1 342.6 L408.8 343.5 L409.9 344.8 L411.1 346.2 L412.2 347.4 L412.9 348.3 M413.7 336.2 L414.1 337.6 L414.6 339.8 L415.3 342.2 L415.8 344.4 L416.2 345.9 M418.6 339.4 L419.3 340.5 L420.4 342.1 L421.6 343.9 L422.7 345.6 L423.4 346.7 M412.9 348.3 L414.5 348.4 L416.9 348.6 L419.5 348.8 L421.8 349.0 L423.4 349.1 M387.9 320.0 L387.1 321.5 L385.9 323.7 L384.5 326.2 L383.0 328.9 L381.4 331.3 L379.7 333.6 L377.8 336.0 L375.9 338.4 L373.8 340.6 L371.7 342.6 L369.4 344.5 L366.8 346.2 L364.2 347.7 L362.0 349.0 L360.4 349.9 M384.6 320.0 L383.8 321.3 L382.7 323.1 L381.3 325.3 L379.8 327.6 L378.2 329.7 L376.4 331.8 L374.5 334.0 L372.5 336.2 L370.5 338.3 L368.5 340.2 L366.4 342.0 L364.1 343.7 L362.0 345.2 L360.1 346.5 L358.8 347.5 M450.9 374.9 L451.5 374.5 L452.4 373.7 L453.5 372.9 L454.6 372.2 L455.8 371.7 L457.0 371.4 L458.5 371.1 L459.9 371.0 L461.2 371.1 L462.2 371.7 L462.9 372.8 L463.5 374.4 L463.8 376.2 L463.9 378.1 L463.8 379.8 L463.6 381.5 L463.0 383.2 L462.4 384.9 L461.5 386.5 L460.6 387.9 L459.5 389.2 L458.1 390.6 L456.6 391.8 L455.2 392.5 L454.1 392.7 L453.4 392.2 L452.8 391.2 L452.4 389.7 L452.0 388.0 L451.7 386.3 L451.4 384.1 L451.2 381.5 L451.1 378.9 L451.0 376.6 L450.9 374.9 M454.1 391.1 L454.8 389.8 L455.8 387.9 L456.9 385.6 L458.0 383.4 L459.0 381.4 L459.8 379.6 L460.6 377.7 L461.2 375.9 L461.8 374.4 L462.2 373.3 M457.4 384.6 L458.1 384.4 L459.2 384.0 L460.4 383.6 L461.5 383.3 L462.2 383.0 M459.0 379.8 L459.6 379.4 L460.5 378.9 L461.5 378.3 L462.4 377.7 L463.0 377.4 M436.4 433.1 L437.2 432.6 L438.4 431.8 L439.8 430.9 L441.3 430.2 L442.8 429.9 L444.4 430.1 L446.2 430.6 L447.9 431.3 L449.6 432.2 L450.9 433.1 L451.9 434.3 L452.7 435.8 L453.3 437.3 L453.8 438.7 L454.1 439.6 M436.4 433.1 L436.8 434.1 L437.3 435.4 L437.9 436.9 L438.7 438.4 L439.6 439.6 L440.8 440.6 L442.3 441.4 L443.8 442.1 L445.1 442.7 L446.1 443.2 M441.2 378.2 L442.4 377.9 L444.1 377.6 L446.1 377.2 L447.9 376.9 L449.3 376.6 L450.2 376.3 L450.8 376.1 L451.2 376.0 L451.5 375.9 L451.7 375.8 M440.4 375.8 L440.6 377.0 L440.8 378.6 L441.0 380.6 L441.2 382.7 L441.2 384.6 L441.0 386.7 L440.7 388.9 L440.2 391.1 L439.9 393.0 L439.6 394.3 M373.3 458.0 L374.4 457.5 L375.9 456.7 L377.7 455.8 L379.6 455.1 L381.4 454.7 L383.3 454.7 L385.2 455.0 L387.2 455.4 L389.1 455.9 L391.1 456.4 L393.1 456.9 L395.1 457.5 L397.2 458.2 L399.1 458.9 L400.8 459.6 L402.4 460.3 L403.9 461.0 L405.3 461.8 L406.4 462.4 L407.3 462.8 M373.3 458.0 L373.0 459.2 L372.6 460.9 L372.1 462.8 L371.8 464.9 L371.7 466.9 L372.0 468.8 L372.5 470.8 L373.2 472.8 L374.0 474.7 L374.9 476.6 L376.1 478.3 L377.5 480.1 L379.0 481.7 L380.3 483.3 L381.4 484.6 L382.2 485.9 L382.8 487.1 L383.2 488.1 L383.6 488.9 L383.8 489.5 M407.3 462.8 L406.9 464.1 L406.4 465.8 L405.8 467.8 L405.0 469.8 L404.0 471.7 L402.7 473.4 L401.2 475.2 L399.4 476.8 L397.7 478.4 L396.0 479.8 L394.3 481.0 L392.5 482.0 L390.8 482.9 L389.2 483.7 L387.9 484.6 L386.7 485.7 L385.8 486.8 L385.0 487.9 L384.3 488.8 L383.8 489.5 M400.8 461.2 L399.7 462.6 L398.2 464.5 L396.3 466.7 L394.5 469.2 L392.7 471.7 L391.0 474.6 L389.1 477.9 L387.3 481.3 L385.7 484.2 L384.6 486.3 M396.0 466.9 L394.7 466.4 L392.9 465.7 L390.9 464.9 L389.1 464.1 L387.9 463.6 M392.7 471.7 L391.3 471.5 L389.1 471.1 L386.7 470.7 L384.5 470.3 L383.0 470.1 M389.5 476.6 L388.3 476.8 L386.5 477.2 L384.5 477.6 L382.6 477.9 L381.4 478.2 M396.0 466.9 L396.5 467.9 L397.2 469.3 L398.0 470.9 L398.7 472.4 L399.2 473.3 M391.1 474.1 L391.8 474.8 L392.9 475.7 L394.1 476.7 L395.2 477.6 L396.0 478.2 M366.9 444.2 L367.0 445.4 L367.2 447.0 L367.5 448.9 L367.9 450.7 L368.5 452.3 L369.3 453.7 L370.4 455.0 L371.6 456.2 L372.6 457.2 L373.3 458.0 M335.0 560.0 L335.5 561.9 L336.2 564.5 L337.1 567.6 L337.9 571.1 L338.7 574.7 L339.5 578.7 L340.2 583.2 L341.0 587.9 L341.7 592.5 L342.4 596.8 L343.0 600.7 L343.6 604.6 L344.2 608.2 L344.7 611.8 L345.1 615.1 L345.6 618.6 L346.0 622.0 L346.4 625.2 L346.8 627.9 L347.0 629.9 M339.6 560.0 L340.0 561.9 L340.5 564.5 L341.2 567.6 L341.8 571.1 L342.4 574.7 L342.9 578.7 L343.4 583.2 L344.0 587.9 L344.5 592.5 L345.1 596.8 L345.8 600.8 L346.6 604.6 L347.4 608.4 L348.1 611.9 L348.8 615.1 L349.5 618.3 L350.1 621.3 L350.7 624.1 L351.2 626.4 L351.6 628.0 M343.3 633.5 L343.5 632.7 L343.8 631.5 L344.1 630.2 L344.6 628.9 L345.1 628.0 L345.9 627.4 L346.8 627.1 L347.8 626.8 L348.8 626.9 L349.7 627.1 L350.6 627.6 L351.5 628.4 L352.3 629.4 L352.9 630.5 L353.4 631.7 L353.7 633.0 L353.9 634.6 L353.9 636.2 L353.7 637.8 L353.4 639.0 L352.9 640.1 L352.3 641.0 L351.5 641.8 L350.6 642.4 L349.7 642.7 L348.8 642.8 L347.8 642.6 L346.8 642.3 L345.9 641.7 L345.1 640.9 L344.6 639.6 L344.1 638.0 L343.8 636.2 L343.5 634.6 L343.3 633.5 M348.8 642.7 L349.1 644.4 L349.5 646.9 L349.9 649.7 L350.3 652.7 L350.7 655.6 L351.0 658.4 L351.3 661.2 L351.5 664.2 L351.6 667.2 L351.6 670.3 L351.2 673.7 L350.6 677.6 L349.9 681.3 L349.3 684.6 L348.8 686.8 M352.5 642.7 L352.8 644.4 L353.1 646.9 L353.6 649.7 L354.0 652.7 L354.3 655.6 L354.6 658.4 L354.9 661.2 L355.1 664.2 L355.3 667.2 L355.3 670.3 L355.0 673.7 L354.6 677.6 L354.2 681.3 L353.7 684.6 L353.4 686.8 M350.7 589.4 L351.4 588.6 L352.4 587.3 L353.6 586.0 L354.9 584.7 L356.2 583.9 L357.6 583.5 L359.1 583.4 L360.6 583.5 L362.1 583.7 L363.5 583.9 L364.7 584.2 L365.8 584.7 L366.8 585.2 L367.9 585.6 L369.0 585.7 L370.5 585.4 L372.2 584.8 L373.9 584.1 L375.4 583.4 L376.4 583.0 M350.7 589.4 L351.7 589.4 L353.1 589.5 L354.7 589.5 L356.4 589.5 L358.0 589.4 L359.5 589.3 L361.0 589.2 L362.6 589.0 L364.0 588.7 L365.4 588.5 L366.6 588.2 L367.7 587.9 L368.8 587.6 L369.8 587.2 L370.9 586.7 L372.1 586.0 L373.4 585.1 L374.6 584.3 L375.6 583.5 L376.4 583.0 M350.7 589.4 L350.4 590.7 L350.0 592.4 L349.6 594.5 L349.2 596.6 L348.8 598.6 L348.5 600.5 L348.2 602.4 L348.0 604.2 L347.8 606.1 L347.9 607.8 L348.3 609.5 L348.9 611.2 L349.6 612.8 L350.2 614.2 L350.7 615.1 M355.3 590.3 L355.0 591.7 L354.6 593.6 L354.2 595.8 L353.8 598.2 L353.4 600.4 L353.2 602.8 L352.9 605.3 L352.8 607.8 L352.6 610.0 L352.5 611.5 M359.9 589.4 L359.5 590.9 L358.9 593.0 L358.3 595.5 L357.7 598.1 L357.1 600.4 L356.5 602.6 L356.0 604.9 L355.4 607.1 L354.9 609.3 L354.3 611.5 L353.7 613.9 L353.1 616.4 L352.5 618.9 L352.0 621.0 L351.6 622.5 M329.5 587.6 L328.6 588.3 L327.2 589.2 L325.6 590.4 L324.2 591.7 L323.1 593.1 L322.3 594.7 L321.7 596.5 L321.2 598.4 L321.1 600.4 L321.2 602.3 L321.8 604.1 L322.8 606.0 L323.9 607.9 L325.3 609.8 L326.8 611.5 L328.4 613.1 L330.3 614.5 L332.3 616.0 L334.2 617.4 L336.0 618.8 L337.5 620.4 L339.0 622.1 L340.4 623.8 L341.6 625.2 L342.4 626.2 M329.5 589.4 L329.3 590.9 L329.0 593.0 L328.8 595.5 L328.6 598.1 L328.6 600.4 L328.9 602.7 L329.3 604.9 L329.8 607.2 L330.5 609.4 L331.4 611.5 L332.5 613.6 L334.0 615.7 L335.5 617.7 L336.9 619.4 L337.8 620.7 M333.2 591.2 L333.0 592.7 L332.7 594.8 L332.4 597.2 L332.2 599.8 L332.3 602.3 L332.8 604.9 L333.6 607.9 L334.5 610.8 L335.4 613.4 L336.0 615.1 M444.2 201.5 L444.9 201.3 L445.9 201.0 L447.1 200.6 L448.3 200.4 L449.5 200.5 L450.5 200.8 L451.6 201.3 L452.7 201.9 L453.7 202.7 L454.7 203.6 L455.6 204.7 L456.6 205.9 L457.4 207.2 L458.2 208.6 L458.9 209.9 L459.5 211.3 L460.0 212.7 L460.4 214.2 L460.8 215.4 L461.0 216.2 M440.0 209.9 L440.9 209.6 L442.1 209.0 L443.5 208.4 L444.9 208.0 L446.3 207.8 L447.6 208.0 L448.9 208.4 L450.2 208.9 L451.4 209.6 L452.6 210.4 L453.8 211.4 L454.9 212.5 L456.0 213.7 L457.0 215.0 L457.9 216.2 L458.7 217.5 L459.4 219.0 L460.1 220.4 L460.6 221.7 L461.0 222.5 M440.0 213.1 L440.7 212.9 L441.7 212.5 L442.8 212.2 L444.1 212.0 L445.3 212.0 L446.5 212.3 L447.7 212.8 L449.1 213.5 L450.3 214.3 L451.6 215.2 L452.7 216.2 L453.8 217.5 L454.9 218.8 L455.9 220.2 L456.8 221.5 L457.7 222.8 L458.6 224.3 L459.4 225.7 L460.0 226.9 L460.5 227.8 M440.0 216.2 L440.5 216.2 L441.3 216.1 L442.2 216.0 L443.2 216.0 L444.2 216.2 L445.3 216.6 L446.6 217.1 L448.0 217.7 L449.3 218.5 L450.5 219.4 L451.6 220.4 L452.8 221.7 L453.8 223.0 L454.8 224.4 L455.8 225.7 L456.7 227.0 L457.5 228.5 L458.3 229.9 L459.0 231.1 L459.4 232.0 M443.2 205.7 L444.0 205.5 L445.3 205.2 L446.7 204.8 L448.2 204.6 L449.5 204.7 L450.6 205.0 L451.7 205.5 L452.7 206.1 L453.7 206.9 L454.7 207.8 L455.8 209.0 L456.9 210.4 L457.9 211.9 L458.8 213.2 L459.4 214.1 M451.6 193.6 L452.1 193.7 L453.0 193.9 L453.9 194.0 L454.9 194.3 L455.8 194.7 L456.5 195.2 L457.1 195.8 L457.7 196.6 L458.3 197.4 L458.9 198.4 L459.6 199.6 L460.3 201.0 L461.0 202.5 L461.6 203.8 L462.1 204.7 M440.0 219.4 L440.6 219.4 L441.3 219.4 L442.2 219.5 L443.2 219.6 L444.2 219.9 L445.2 220.3 L446.2 220.8 L447.3 221.4 L448.4 222.1 L449.5 223.0 L450.5 224.2 L451.7 225.6 L452.8 227.1 L453.8 228.6 L454.7 229.9 L455.5 231.1 L456.3 232.3 L456.9 233.5 L457.5 234.4 L457.9 235.1 M419.9 139.7 L420.6 139.9 L421.6 140.2 L422.7 140.5 L423.8 140.9 L424.7 141.4 L425.5 142.1 L426.3 143.0 L427.0 144.0 L427.6 144.8 L428.0 145.4 M423.1 136.5 L423.7 136.9 L424.5 137.5 L425.4 138.2 L426.4 138.9 L427.2 139.7 L427.9 140.7 L428.7 141.8 L429.4 142.9 L430.0 143.9 L430.4 144.6 M428.0 131.7 L428.3 132.4 L428.8 133.5 L429.4 134.7 L430.0 136.0 L430.4 137.3 L430.8 138.7 L431.1 140.2 L431.3 141.6 L431.5 142.9 L431.7 143.8 M441.7 135.7 L441.6 136.5 L441.5 137.6 L441.4 138.9 L441.2 140.2 L440.9 141.4 L440.5 142.5 L439.9 143.6 L439.4 144.7 L438.8 145.6 L438.5 146.2 M449.0 137.3 L448.6 138.1 L448.0 139.2 L447.3 140.5 L446.6 141.8 L445.8 143.0 L444.8 144.1 L443.7 145.2 L442.6 146.3 L441.6 147.2 L440.9 147.8 M456.3 139.7 L455.5 140.5 L454.5 141.6 L453.3 142.9 L451.9 144.2 L450.6 145.4 L449.1 146.5 L447.5 147.6 L445.8 148.7 L444.3 149.6 L443.3 150.3 M455.5 150.3 L454.6 150.4 L453.4 150.5 L451.9 150.7 L450.4 150.9 L449.0 151.1 L447.5 151.3 L445.8 151.5 L444.1 151.8 L442.7 152.0 L441.7 152.2 M453.0 158.3 L452.2 158.2 L450.9 158.1 L449.5 158.0 L448.0 157.8 L446.6 157.5 L445.2 157.2 L443.7 156.7 L442.2 156.2 L441.0 155.7 L440.1 155.4 M453.8 167.2 L452.8 166.7 L451.5 165.9 L449.8 165.1 L448.1 164.1 L446.6 163.2 L445.0 162.2 L443.3 161.1 L441.7 160.0 L440.3 159.0 L439.3 158.3 M446.6 172.9 L446.0 172.0 L445.3 170.8 L444.4 169.3 L443.4 167.8 L442.5 166.4 L441.5 165.0 L440.4 163.5 L439.3 162.1 L438.3 160.8 L437.7 159.9 M438.5 182.6 L438.3 181.5 L438.0 179.9 L437.6 178.1 L437.2 176.2 L436.9 174.5 L436.5 172.7 L436.0 170.9 L435.6 169.1 L435.2 167.5 L434.9 166.4 M430.4 184.2 L430.5 182.8 L430.7 180.9 L430.8 178.7 L431.0 176.5 L431.2 174.5 L431.4 172.6 L431.7 170.8 L432.0 169.0 L432.2 167.5 L432.3 166.4 M424.7 174.5 L425.2 173.9 L425.8 173.0 L426.6 171.9 L427.3 170.8 L428.0 169.6 L428.6 168.4 L429.1 166.9 L429.6 165.4 L430.1 164.1 L430.4 163.2 M414.2 169.6 L415.1 168.8 L416.3 167.5 L417.8 166.0 L419.3 164.5 L420.7 163.2 L422.2 161.9 L423.9 160.6 L425.6 159.3 L427.0 158.3 L428.0 157.5 M407.8 161.6 L408.9 161.1 L410.4 160.5 L412.1 159.8 L414.0 159.0 L415.9 158.3 L417.8 157.7 L420.1 157.0 L422.3 156.4 L424.2 155.8 L425.6 155.4 M412.6 153.5 L413.6 153.5 L415.1 153.6 L416.7 153.7 L418.4 153.7 L419.9 153.8 L421.3 153.9 L422.9 153.9 L424.3 153.9 L425.5 154.0 L426.4 154.0 M474.0 145.4 L474.0 146.5 L474.1 148.1 L474.1 150.0 L474.1 151.8 L474.0 153.5 L474.0 155.0 L473.9 156.5 L473.8 157.9 L473.8 159.1 L473.7 159.9 M483.7 143.8 L483.2 144.9 L482.4 146.4 L481.5 148.2 L480.6 150.1 L479.7 151.9 L478.8 153.7 L477.9 155.8 L477.0 157.8 L476.2 159.5 L475.7 160.8 M491.0 150.3 L490.1 151.1 L488.9 152.4 L487.4 153.8 L485.9 155.3 L484.5 156.7 L483.1 158.1 L481.6 159.6 L480.2 161.1 L479.0 162.3 L478.1 163.2 M495.1 156.7 L494.2 157.3 L493.0 158.0 L491.6 158.9 L490.1 159.8 L488.6 160.8 L486.9 161.8 L485.1 162.9 L483.2 164.0 L481.6 164.9 L480.5 165.6 M499.9 166.4 L498.8 166.5 L497.3 166.7 L495.5 166.9 L493.6 167.0 L491.8 167.2 L489.9 167.4 L487.9 167.6 L485.9 167.8 L484.2 167.9 L482.9 168.0 M495.9 178.5 L495.0 177.9 L493.8 176.9 L492.3 175.7 L490.8 174.6 L489.4 173.7 L487.9 172.9 L486.2 172.1 L484.5 171.4 L483.1 170.9 L482.1 170.5 M493.4 181.8 L492.6 181.2 L491.4 180.5 L489.9 179.6 L488.4 178.7 L487.0 177.7 L485.5 176.7 L483.8 175.6 L482.1 174.5 L480.7 173.6 L479.7 172.9 M487.0 185.0 L486.3 184.2 L485.4 183.1 L484.3 181.9 L483.2 180.6 L482.1 179.3 L481.1 178.1 L479.9 176.8 L478.9 175.5 L477.9 174.5 L477.3 173.7 M469.2 185.8 L469.4 184.9 L469.7 183.6 L470.1 182.2 L470.5 180.7 L470.8 179.3 L471.2 178.1 L471.5 176.8 L471.9 175.5 L472.2 174.4 L472.4 173.7 M458.7 181.0 L459.5 180.3 L460.5 179.4 L461.8 178.3 L463.1 177.1 L464.3 176.1 L465.6 175.1 L466.9 174.1 L468.1 173.1 L469.2 172.2 L470.0 171.6 M456.3 176.1 L457.1 175.7 L458.4 175.0 L459.8 174.3 L461.3 173.6 L462.7 172.9 L464.1 172.2 L465.6 171.6 L467.1 170.9 L468.3 170.4 L469.2 170.0 M456.3 159.9 L457.3 160.4 L458.7 161.0 L460.3 161.7 L462.0 162.5 L463.5 163.2 L465.0 163.9 L466.5 164.6 L467.9 165.4 L469.1 166.0 L470.0 166.4 M461.1 148.6 L461.8 149.6 L462.7 151.0 L463.8 152.7 L464.9 154.3 L466.0 155.9 L467.0 157.5 L468.1 159.2 L469.2 160.8 L470.1 162.2 L470.8 163.2 M401.5 603.0 L402.0 604.8 L402.6 607.2 L403.3 610.1 L404.1 613.1 L405.0 616.0 L405.9 618.8 L406.9 621.6 L408.0 624.5 L409.0 627.3 L410.0 630.0 L411.0 632.7 L412.1 635.4 L413.1 638.0 L414.0 640.2 L414.6 641.8 M405.0 603.0 L405.5 604.8 L406.1 607.3 L406.9 610.2 L407.7 613.2 L408.5 616.0 L409.3 618.6 L410.3 621.3 L411.2 623.9 L412.1 626.5 L413.0 629.0 L413.9 631.6 L414.8 634.3 L415.7 636.8 L416.5 639.0 L417.0 640.5 M446.7 424.7 L447.0 422.8 L447.5 420.0 L448.0 416.7 L448.8 413.5 L449.7 410.6 L450.8 408.1 L452.2 405.7 L453.7 403.4 L455.2 401.3 L456.8 399.5 L458.3 397.8 L459.8 396.3 L461.4 395.0 L463.1 394.2 L464.8 394.0 L466.7 394.6 L468.7 395.8 L470.7 397.4 L472.8 399.4 L474.9 401.5 L477.4 404.0 L480.2 407.0 L482.9 410.2 L485.0 413.2 L486.1 415.7 L485.9 417.5 L484.7 419.0 L482.9 420.3 L480.9 421.5 L479.0 422.7 L477.2 424.1 L475.2 425.4 L473.1 426.7 L471.0 427.8 L468.9 428.8 L466.7 429.6 L464.5 430.4 L462.3 431.1 L460.0 431.4 L457.8 431.2 L455.4 430.4 L452.8 429.0 L450.3 427.3 L448.2 425.8 L446.7 424.7 M449.7 426.8 L451.2 425.0 L453.3 422.4 L455.8 419.4 L458.3 416.7 L460.8 414.6 L463.2 413.3 L465.6 412.4 L468.0 411.9 L470.5 411.6 L472.9 411.6 L475.5 412.0 L478.4 412.9 L481.1 414.0 L483.4 415.0 L485.1 415.7 M460.8 414.6 L460.7 413.3 L460.4 411.2 L460.2 409.0 L460.0 406.9 L459.8 405.6 M466.9 412.6 L467.2 411.1 L467.6 408.8 L468.1 406.3 L468.6 404.1 L468.9 402.5 M472.9 411.6 L473.5 410.8 L474.4 409.7 L475.5 408.5 L476.4 407.3 L477.0 406.6 M458.8 417.1 L459.7 418.1 L461.1 419.6 L462.6 421.2 L463.9 422.7 L464.8 423.7 M466.9 413.0 L467.8 414.2 L469.1 415.9 L470.7 417.8 L472.0 419.5 L472.9 420.7 M473.9 412.2 L474.7 413.2 L475.8 414.7 L477.1 416.3 L478.2 417.7 L479.0 418.7 M368.1 251.4 L368.8 251.7 L370.3 251.8 L372.0 251.8 L373.2 252.2 L373.8 253.0 L374.1 254.1 L374.2 255.2 L374.0 256.2 L373.4 257.0 L372.6 257.7 L371.6 258.3 L370.6 258.4 L369.5 257.8 L368.3 256.6 L367.2 255.6 L366.5 255.3 L366.4 256.0 L366.9 257.5 L367.3 259.1 L367.3 260.4 L366.7 261.2 L365.8 261.8 L364.7 262.2 L363.8 262.3 L362.8 262.0 L361.9 261.5 L361.1 260.7 L360.6 259.8 L360.9 258.6 L361.6 257.0 L362.2 255.7 L362.3 254.9 L361.6 255.1 L360.3 256.0 L358.9 256.9 L357.7 257.3 L356.8 257.0 L355.9 256.3 L355.2 255.4 L354.8 254.5 L354.8 253.5 L355.0 252.4 L355.5 251.4 L356.2 250.7 L357.4 250.6 L359.1 250.8 L360.6 251.0 L361.4 250.8 L361.0 250.2 L359.8 249.3 L358.4 248.2 L357.7 247.2 L357.7 246.2 L358.1 245.1 L358.7 244.2 L359.4 243.6 L360.3 243.2 L361.5 243.1 L362.6 243.3 L363.4 243.7 L364.0 244.9 L364.3 246.5 L364.6 248.0 L364.9 248.7 L365.4 248.1 L366.0 246.7 L366.6 245.1 L367.3 244.1 L368.2 243.7 L369.3 243.8 L370.4 244.1 L371.3 244.6 L371.9 245.3 L372.3 246.4 L372.5 247.5 L372.4 248.5 L371.4 249.3 L370.0 250.1 L368.6 250.9Z M366.7 253.1 L366.3 253.7 L365.6 254.2 L364.9 254.4 L364.2 254.4 L363.4 254.0 L362.9 253.6 L362.6 252.9 L362.5 252.1 L362.6 251.4 L363.0 250.8 L363.7 250.3 L364.4 250.0 L365.1 250.1 L365.9 250.4 L366.4 250.9 L366.7 251.6 L366.8 252.4Z M367.0 253.2 L369.8 254.4 M364.4 254.7 L364.2 257.8 M362.2 252.8 L359.2 253.5 M363.3 250.1 L361.8 247.5 M366.3 250.3 L368.3 248.0 M342.6 250.3 L342.9 250.8 L343.7 251.5 L344.5 252.3 L345.0 253.1 L345.0 253.7 L344.6 254.5 L344.1 255.1 L343.6 255.5 L343.0 255.7 L342.2 255.7 L341.4 255.6 L340.8 255.2 L340.5 254.4 L340.4 253.2 L340.2 252.1 L340.0 251.6 L339.6 252.0 L339.2 253.0 L338.7 254.1 L338.2 254.8 L337.5 254.9 L336.7 254.8 L336.0 254.6 L335.4 254.2 L335.0 253.6 L334.7 252.9 L334.7 252.1 L334.8 251.4 L335.5 250.9 L336.6 250.4 L337.6 249.9 L338.0 249.6 L337.5 249.3 L336.4 249.2 L335.2 249.1 L334.4 248.8 L334.0 248.2 L333.9 247.4 L333.9 246.6 L334.1 246.0 L334.5 245.4 L335.1 245.0 L335.9 244.6 L336.5 244.6 L337.3 245.1 L338.1 245.9 L338.8 246.7 L339.3 247.0 L339.3 246.4 L339.1 245.4 L338.9 244.2 L338.9 243.4 L339.4 242.8 L340.1 242.4 L340.8 242.2 L341.5 242.2 L342.2 242.4 L342.8 242.9 L343.3 243.5 L343.6 244.1 L343.4 244.9 L342.8 246.0 L342.3 246.9 L342.2 247.4 L342.7 247.3 L343.6 246.8 L344.7 246.2 L345.5 246.0 L346.1 246.3 L346.7 246.8 L347.2 247.5 L347.4 248.1 L347.4 248.8 L347.2 249.5 L346.8 250.2 L346.2 250.7 L345.4 250.7 L344.2 250.5 L343.1 250.3Z M341.1 250.6 L340.6 250.7 L340.0 250.7 L339.6 250.5 L339.2 250.1 L338.9 249.6 L338.9 249.1 L339.0 248.6 L339.3 248.1 L339.7 247.8 L340.2 247.7 L340.8 247.7 L341.3 247.9 L341.6 248.3 L341.9 248.8 L342.0 249.3 L341.8 249.8 L341.5 250.2Z M341.2 250.8 L342.2 252.7 M339.2 250.4 L337.7 251.9 M338.8 248.4 L336.9 247.4 M340.7 247.4 L341.0 245.4 M342.2 248.9 L344.2 248.6 M327.2 265.6 L327.1 266.1 L327.3 267.2 L327.4 268.4 L327.3 269.3 L326.8 269.8 L326.1 270.1 L325.3 270.3 L324.7 270.2 L324.0 269.9 L323.4 269.5 L322.9 268.8 L322.7 268.2 L323.0 267.4 L323.6 266.4 L324.2 265.5 L324.4 265.0 L323.9 265.0 L322.9 265.5 L321.8 266.0 L321.0 266.1 L320.3 265.8 L319.8 265.3 L319.4 264.6 L319.2 263.9 L319.3 263.3 L319.6 262.5 L320.0 261.9 L320.6 261.5 L321.4 261.5 L322.6 261.8 L323.6 262.1 L324.1 262.1 L323.9 261.6 L323.2 260.8 L322.4 259.9 L321.9 259.2 L322.0 258.5 L322.4 257.8 L323.0 257.2 L323.5 256.8 L324.2 256.7 L325.0 256.7 L325.7 256.9 L326.3 257.3 L326.5 258.2 L326.6 259.3 L326.6 260.4 L326.8 260.9 L327.2 260.6 L327.7 259.6 L328.3 258.6 L328.9 257.9 L329.6 257.8 L330.4 258.0 L331.1 258.3 L331.6 258.7 L332.0 259.3 L332.2 260.0 L332.2 260.8 L332.0 261.5 L331.3 262.0 L330.2 262.4 L329.2 262.8 L328.7 263.1 L329.2 263.4 L330.3 263.6 L331.4 263.8 L332.2 264.2 L332.5 264.8 L332.6 265.6 L332.6 266.4 L332.3 267.0 L331.9 267.5 L331.2 267.9 L330.5 268.2 L329.8 268.2 L329.1 267.7 L328.3 266.8 L327.7 265.9Z M325.9 264.8 L325.4 264.6 L325.0 264.2 L324.8 263.8 L324.7 263.3 L324.9 262.7 L325.1 262.3 L325.6 262.0 L326.1 261.8 L326.6 261.8 L327.1 262.0 L327.5 262.4 L327.8 262.9 L327.8 263.4 L327.7 264.0 L327.4 264.4 L327.0 264.7 L326.4 264.8Z M325.9 265.1 L325.4 267.1 M324.5 263.5 L322.4 263.7 M325.6 261.7 L324.8 259.8 M327.6 262.2 L329.2 260.8 M327.8 264.2 L329.6 265.3 M348.7 272.1 L348.2 272.5 L347.5 273.5 L346.8 274.7 L346.0 275.3 L345.2 275.4 L344.4 275.2 L343.6 274.8 L343.0 274.2 L342.7 273.5 L342.5 272.7 L342.5 271.8 L342.8 271.0 L343.7 270.5 L345.0 270.1 L346.2 269.8 L346.7 269.4 L346.1 269.1 L345.0 268.8 L343.7 268.4 L342.8 267.9 L342.5 267.2 L342.4 266.3 L342.6 265.4 L342.9 264.7 L343.4 264.2 L344.2 263.7 L345.1 263.5 L345.9 263.6 L346.6 264.2 L347.4 265.3 L348.1 266.3 L348.6 266.7 L348.7 266.1 L348.7 264.9 L348.6 263.5 L348.8 262.6 L349.4 262.0 L350.2 261.7 L351.1 261.6 L351.9 261.7 L352.6 262.0 L353.2 262.6 L353.7 263.4 L353.9 264.2 L353.5 265.1 L352.7 266.1 L352.0 267.1 L351.8 267.7 L352.4 267.7 L353.5 267.2 L354.8 266.7 L355.8 266.6 L356.5 267.0 L357.0 267.7 L357.4 268.5 L357.6 269.3 L357.4 270.0 L357.1 270.9 L356.5 271.6 L355.9 272.0 L354.9 271.9 L353.6 271.5 L352.4 271.0 L351.8 271.0 L352.0 271.6 L352.8 272.6 L353.7 273.6 L354.1 274.5 L353.9 275.3 L353.4 276.0 L352.8 276.7 L352.1 277.0 L351.3 277.2 L350.4 277.1 L349.6 276.8 L349.0 276.2 L348.8 275.3 L348.8 273.9 L348.8 272.7Z M348.1 270.5 L347.8 269.9 L347.8 269.3 L347.9 268.7 L348.2 268.2 L348.7 267.8 L349.3 267.6 L349.9 267.7 L350.5 268.0 L350.9 268.3 L351.2 268.9 L351.2 269.5 L351.1 270.1 L350.8 270.6 L350.3 271.0 L349.7 271.2 L349.1 271.1 L348.5 270.8Z M347.9 270.6 L345.9 272.1 M347.8 268.2 L345.9 266.8 M350.1 267.5 L350.8 265.1 M351.5 269.4 L353.9 269.3 M350.1 271.3 L350.9 273.6 M346.4 287.9 L345.9 287.9 L344.8 288.2 L343.7 288.6 L342.8 288.6 L342.3 288.2 L341.8 287.6 L341.5 286.8 L341.4 286.2 L341.6 285.5 L342.0 284.8 L342.5 284.2 L343.1 283.9 L344.0 284.0 L345.1 284.5 L346.0 284.9 L346.6 285.0 L346.4 284.5 L345.8 283.6 L345.1 282.6 L344.8 281.8 L345.0 281.1 L345.5 280.5 L346.1 280.0 L346.7 279.7 L347.4 279.7 L348.1 279.8 L348.9 280.1 L349.4 280.6 L349.5 281.5 L349.4 282.7 L349.3 283.7 L349.4 284.3 L349.8 283.9 L350.5 283.1 L351.2 282.1 L351.9 281.6 L352.6 281.6 L353.3 281.8 L354.0 282.3 L354.4 282.8 L354.7 283.4 L354.8 284.2 L354.7 284.9 L354.4 285.6 L353.6 286.0 L352.5 286.2 L351.4 286.4 L351.0 286.7 L351.4 287.0 L352.4 287.4 L353.5 287.8 L354.3 288.3 L354.5 288.9 L354.5 289.7 L354.3 290.5 L354.0 291.0 L353.4 291.5 L352.7 291.8 L352.0 292.0 L351.3 291.9 L350.7 291.3 L350.1 290.3 L349.5 289.3 L349.1 289.0 L348.9 289.5 L348.9 290.5 L348.9 291.7 L348.7 292.6 L348.1 293.0 L347.4 293.2 L346.6 293.3 L345.9 293.2 L345.3 292.8 L344.8 292.2 L344.4 291.5 L344.3 290.9 L344.7 290.1 L345.5 289.2 L346.2 288.4Z M346.9 286.5 L347.1 286.0 L347.4 285.5 L347.8 285.2 L348.3 285.1 L348.9 285.1 L349.3 285.3 L349.7 285.6 L350.0 286.2 L350.0 286.7 L349.9 287.1 L349.6 287.6 L349.2 288.0 L348.7 288.1 L348.1 288.0 L347.6 287.9 L347.3 287.5 L347.0 287.0Z M346.7 286.5 L344.6 286.3 M348.0 284.9 L347.5 282.8 M350.0 285.6 L351.8 284.5 M349.9 287.7 L351.5 289.0 M347.8 288.2 L347.1 290.2 M354.8 324.6 L354.3 324.2 L353.2 323.7 L351.9 323.2 L351.1 322.6 L350.9 321.8 L351.0 320.9 L351.3 320.0 L351.7 319.4 L352.3 318.9 L353.2 318.6 L354.1 318.5 L354.8 318.7 L355.5 319.4 L356.1 320.6 L356.6 321.7 L357.1 322.2 L357.3 321.6 L357.4 320.4 L357.5 319.0 L357.9 318.1 L358.5 317.6 L359.4 317.4 L360.3 317.5 L361.0 317.7 L361.7 318.1 L362.2 318.8 L362.6 319.6 L362.7 320.4 L362.2 321.3 L361.2 322.2 L360.3 323.0 L360.1 323.6 L360.7 323.7 L361.9 323.4 L363.2 323.1 L364.2 323.1 L364.8 323.6 L365.3 324.4 L365.5 325.2 L365.6 326.0 L365.4 326.7 L364.9 327.5 L364.2 328.1 L363.5 328.4 L362.5 328.2 L361.3 327.6 L360.2 327.0 L359.6 326.9 L359.8 327.5 L360.4 328.5 L361.1 329.7 L361.4 330.7 L361.1 331.4 L360.5 332.1 L359.8 332.6 L359.1 332.9 L358.3 332.9 L357.4 332.7 L356.6 332.3 L356.1 331.7 L356.0 330.7 L356.2 329.3 L356.5 328.1 L356.4 327.5 L355.8 327.8 L355.0 328.8 L354.1 329.8 L353.3 330.3 L352.5 330.3 L351.7 329.9 L351.0 329.4 L350.5 328.8 L350.2 328.1 L350.2 327.2 L350.3 326.3 L350.7 325.6 L351.7 325.2 L353.0 325.0 L354.2 324.9Z M356.3 323.7 L356.8 323.4 L357.4 323.2 L358.0 323.2 L358.5 323.5 L359.0 323.9 L359.3 324.4 L359.3 325.0 L359.2 325.7 L358.9 326.2 L358.4 326.5 L357.7 326.7 L357.2 326.7 L356.6 326.4 L356.2 326.0 L355.9 325.5 L355.8 324.9 L356.0 324.2Z M356.1 323.6 L354.3 321.9 M358.4 323.1 L359.5 320.9 M359.6 325.2 L362.0 325.5 M357.9 326.9 L358.4 329.3 M355.8 325.9 L353.7 327.1 M287.1 307.8 L287.0 307.2 L286.5 306.2 L285.9 305.0 L285.7 304.1 L286.0 303.4 L286.6 302.8 L287.3 302.4 L288.0 302.2 L288.8 302.2 L289.6 302.5 L290.3 302.9 L290.8 303.5 L290.8 304.5 L290.5 305.7 L290.2 306.9 L290.2 307.5 L290.7 307.2 L291.6 306.4 L292.5 305.5 L293.3 305.0 L294.1 305.1 L294.8 305.5 L295.5 306.0 L295.9 306.6 L296.1 307.3 L296.0 308.2 L295.8 309.0 L295.4 309.6 L294.5 309.9 L293.2 310.0 L292.1 310.1 L291.5 310.3 L291.9 310.8 L293.0 311.3 L294.1 311.9 L294.8 312.5 L295.0 313.2 L294.8 314.1 L294.5 314.9 L294.1 315.5 L293.4 315.9 L292.6 316.1 L291.8 316.2 L291.1 316.0 L290.5 315.2 L290.0 314.0 L289.6 312.9 L289.2 312.5 L288.9 313.0 L288.7 314.1 L288.5 315.4 L288.1 316.3 L287.5 316.7 L286.6 316.8 L285.8 316.7 L285.1 316.5 L284.5 316.0 L284.0 315.3 L283.7 314.5 L283.7 313.8 L284.3 313.0 L285.2 312.2 L286.1 311.4 L286.4 310.9 L285.9 310.8 L284.7 311.0 L283.4 311.2 L282.5 311.1 L281.9 310.6 L281.5 309.8 L281.4 309.0 L281.4 308.3 L281.6 307.6 L282.2 306.9 L282.8 306.3 L283.5 306.1 L284.4 306.4 L285.5 307.0 L286.5 307.7Z M288.7 308.1 L289.3 308.2 L289.8 308.4 L290.2 308.8 L290.5 309.3 L290.5 309.9 L290.4 310.5 L290.1 310.9 L289.6 311.3 L289.1 311.5 L288.5 311.4 L288.0 311.2 L287.5 310.8 L287.3 310.3 L287.2 309.7 L287.3 309.1 L287.7 308.7 L288.2 308.3Z M288.7 307.9 L288.4 305.6 M290.6 309.0 L292.7 308.1 M290.2 311.2 L291.7 312.9 M287.9 311.5 L286.8 313.5 M287.0 309.4 L284.8 309.0 M301.9 321.1 L302.2 320.6 L302.5 319.4 L302.8 318.1 L303.3 317.2 L304.0 316.8 L304.9 316.8 L305.8 316.9 L306.5 317.2 L307.1 317.8 L307.5 318.5 L307.8 319.4 L307.8 320.2 L307.1 320.9 L306.0 321.7 L305.0 322.5 L304.7 323.0 L305.3 323.1 L306.5 323.0 L307.8 322.9 L308.8 323.1 L309.4 323.6 L309.7 324.5 L309.9 325.4 L309.8 326.1 L309.5 326.8 L308.9 327.5 L308.1 328.0 L307.4 328.2 L306.4 327.9 L305.4 327.1 L304.4 326.3 L303.8 326.2 L303.8 326.8 L304.3 327.9 L304.8 329.2 L305.0 330.1 L304.6 330.8 L303.9 331.4 L303.1 331.8 L302.3 332.0 L301.6 331.9 L300.8 331.6 L300.0 331.0 L299.6 330.4 L299.7 329.4 L300.1 328.1 L300.5 326.9 L300.5 326.3 L299.9 326.5 L299.0 327.3 L297.9 328.2 L297.0 328.7 L296.2 328.5 L295.5 328.0 L294.8 327.4 L294.4 326.7 L294.3 326.0 L294.4 325.1 L294.7 324.2 L295.2 323.6 L296.1 323.4 L297.5 323.4 L298.7 323.4 L299.3 323.2 L298.9 322.7 L297.8 322.1 L296.7 321.4 L296.0 320.6 L295.9 319.9 L296.1 319.0 L296.5 318.2 L297.0 317.6 L297.7 317.2 L298.6 317.0 L299.5 317.0 L300.2 317.3 L300.7 318.2 L301.2 319.4 L301.5 320.6Z M303.0 322.5 L303.4 322.9 L303.7 323.5 L303.8 324.1 L303.6 324.6 L303.3 325.2 L302.8 325.5 L302.2 325.7 L301.6 325.6 L301.0 325.4 L300.6 325.0 L300.3 324.4 L300.2 323.8 L300.4 323.3 L300.8 322.7 L301.2 322.3 L301.8 322.2 L302.5 322.3Z M303.1 322.3 L304.5 320.2 M304.0 324.5 L306.3 325.1 M302.1 326.0 L302.2 328.4 M300.1 324.6 L297.9 325.5 M300.8 322.4 L299.3 320.5 M319.9 319.7 L320.5 319.5 L321.5 318.7 L322.6 317.9 L323.5 317.6 L324.3 317.8 L325.0 318.3 L325.6 319.0 L325.9 319.7 L326.0 320.4 L325.9 321.3 L325.5 322.1 L325.0 322.7 L324.0 322.9 L322.7 322.8 L321.4 322.7 L320.8 322.9 L321.2 323.4 L322.2 324.1 L323.3 324.9 L324.0 325.6 L324.0 326.4 L323.7 327.3 L323.3 328.1 L322.7 328.6 L322.0 328.9 L321.1 329.1 L320.2 329.0 L319.5 328.7 L319.0 327.8 L318.7 326.5 L318.4 325.3 L318.1 324.7 L317.7 325.3 L317.4 326.4 L317.0 327.7 L316.4 328.6 L315.7 328.8 L314.8 328.9 L313.9 328.7 L313.2 328.3 L312.7 327.7 L312.3 326.9 L312.1 326.1 L312.2 325.3 L312.9 324.5 L314.0 323.8 L315.1 323.2 L315.5 322.7 L314.9 322.5 L313.6 322.5 L312.3 322.6 L311.3 322.3 L310.8 321.7 L310.5 320.8 L310.5 319.9 L310.6 319.2 L311.0 318.5 L311.6 317.9 L312.4 317.4 L313.1 317.3 L314.0 317.7 L315.1 318.5 L316.0 319.3 L316.6 319.6 L316.6 319.0 L316.2 317.8 L315.8 316.5 L315.7 315.5 L316.1 314.8 L316.8 314.3 L317.7 314.0 L318.4 313.8 L319.2 314.0 L320.0 314.4 L320.7 315.0 L321.1 315.7 L320.9 316.7 L320.4 317.9 L320.0 319.1Z M319.9 321.4 L319.9 322.0 L319.8 322.6 L319.5 323.1 L319.0 323.5 L318.3 323.7 L317.8 323.6 L317.2 323.4 L316.8 322.9 L316.5 322.4 L316.4 321.8 L316.6 321.2 L316.9 320.7 L317.4 320.4 L318.0 320.2 L318.6 320.2 L319.1 320.5 L319.6 320.9Z M320.1 321.4 L322.4 320.7 M319.3 323.6 L320.7 325.6 M316.9 323.5 L315.5 325.4 M316.3 321.2 L314.0 320.4 M318.2 319.9 L318.3 317.5 M317.9 339.5 L318.5 339.7 L319.7 339.8 L321.1 339.9 L322.0 340.2 L322.5 340.9 L322.7 341.7 L322.7 342.6 L322.5 343.4 L322.1 344.0 L321.4 344.6 L320.6 345.0 L319.8 345.1 L319.0 344.6 L318.0 343.7 L317.1 342.8 L316.6 342.5 L316.5 343.2 L316.8 344.4 L317.2 345.7 L317.2 346.7 L316.7 347.3 L315.9 347.8 L315.1 348.1 L314.3 348.1 L313.6 347.9 L312.8 347.5 L312.2 346.8 L311.8 346.1 L312.0 345.1 L312.6 343.9 L313.2 342.8 L313.3 342.2 L312.7 342.4 L311.6 343.0 L310.5 343.7 L309.5 344.1 L308.8 343.8 L308.1 343.2 L307.5 342.5 L307.3 341.8 L307.2 341.0 L307.4 340.1 L307.8 339.3 L308.4 338.8 L309.4 338.7 L310.7 338.9 L312.0 339.1 L312.6 339.0 L312.2 338.4 L311.3 337.7 L310.2 336.8 L309.7 336.0 L309.7 335.2 L310.0 334.4 L310.5 333.6 L311.1 333.1 L311.8 332.9 L312.7 332.8 L313.6 332.9 L314.3 333.3 L314.7 334.2 L315.0 335.5 L315.2 336.7 L315.4 337.3 L315.8 336.8 L316.3 335.7 L316.8 334.4 L317.4 333.6 L318.1 333.4 L319.0 333.4 L319.9 333.7 L320.5 334.1 L321.0 334.7 L321.4 335.5 L321.5 336.4 L321.4 337.2 L320.6 337.9 L319.4 338.5 L318.3 339.1Z M316.8 340.8 L316.4 341.3 L315.9 341.7 L315.3 341.9 L314.8 341.8 L314.2 341.5 L313.7 341.1 L313.5 340.6 L313.4 340.0 L313.5 339.4 L313.9 338.9 L314.4 338.5 L315.0 338.3 L315.5 338.4 L316.1 338.7 L316.6 339.1 L316.8 339.6 L316.9 340.2Z M317.0 340.9 L319.2 341.9 M314.9 342.1 L314.7 344.5 M313.2 340.5 L310.8 341.0 M314.1 338.4 L312.9 336.3 M316.5 338.6 L318.1 336.8 M272.2 325.3 L272.5 325.8 L273.4 326.7 L274.4 327.6 L274.9 328.4 L274.8 329.2 L274.4 330.0 L273.9 330.7 L273.2 331.2 L272.5 331.4 L271.6 331.4 L270.7 331.2 L270.1 330.8 L269.7 329.9 L269.6 328.5 L269.5 327.3 L269.2 326.7 L268.8 327.2 L268.3 328.3 L267.7 329.5 L267.0 330.3 L266.2 330.4 L265.4 330.3 L264.5 330.0 L263.9 329.6 L263.5 328.9 L263.2 328.1 L263.1 327.2 L263.3 326.4 L264.1 325.8 L265.3 325.2 L266.4 324.7 L266.9 324.3 L266.3 324.1 L265.1 323.9 L263.8 323.7 L262.9 323.3 L262.4 322.7 L262.3 321.8 L262.3 320.9 L262.6 320.1 L263.0 319.5 L263.8 319.0 L264.6 318.6 L265.4 318.6 L266.2 319.2 L267.1 320.2 L267.9 321.1 L268.5 321.4 L268.5 320.8 L268.3 319.6 L268.1 318.2 L268.1 317.2 L268.7 316.6 L269.5 316.2 L270.3 316.0 L271.1 316.0 L271.8 316.2 L272.6 316.8 L273.2 317.4 L273.4 318.2 L273.2 319.1 L272.5 320.3 L271.9 321.4 L271.7 322.0 L272.3 321.9 L273.4 321.3 L274.6 320.6 L275.6 320.4 L276.3 320.7 L277.0 321.3 L277.5 322.1 L277.7 322.8 L277.7 323.6 L277.4 324.4 L276.9 325.2 L276.3 325.7 L275.3 325.8 L274.0 325.5 L272.8 325.2Z M270.5 325.5 L269.9 325.7 L269.2 325.6 L268.7 325.4 L268.3 325.0 L268.0 324.4 L267.9 323.8 L268.1 323.3 L268.5 322.7 L268.9 322.3 L269.5 322.2 L270.1 322.3 L270.7 322.5 L271.1 322.9 L271.4 323.5 L271.5 324.1 L271.3 324.6 L270.9 325.2Z M270.6 325.8 L271.6 327.9 M268.2 325.3 L266.5 327.0 M267.9 323.0 L265.8 321.9 M270.0 321.9 L270.5 319.6 M271.7 323.7 L274.1 323.3 M288.7 337.0 L288.6 337.5 L288.7 338.4 L288.8 339.4 L288.7 340.1 L288.3 340.6 L287.6 340.8 L287.0 341.0 L286.4 340.9 L285.9 340.7 L285.4 340.3 L284.9 339.7 L284.8 339.2 L285.0 338.5 L285.6 337.6 L286.1 336.9 L286.3 336.4 L285.8 336.5 L285.0 336.8 L284.0 337.3 L283.3 337.4 L282.8 337.1 L282.3 336.6 L282.0 336.0 L281.8 335.5 L281.9 334.9 L282.1 334.3 L282.5 333.7 L283.0 333.4 L283.8 333.4 L284.7 333.7 L285.6 333.9 L286.1 333.9 L285.9 333.5 L285.3 332.8 L284.6 332.1 L284.2 331.4 L284.3 330.8 L284.7 330.2 L285.1 329.7 L285.6 329.4 L286.2 329.3 L286.9 329.3 L287.5 329.5 L288.0 329.9 L288.2 330.6 L288.2 331.6 L288.2 332.6 L288.4 333.0 L288.7 332.7 L289.2 331.9 L289.7 331.0 L290.2 330.5 L290.8 330.4 L291.5 330.5 L292.1 330.8 L292.5 331.2 L292.8 331.7 L293.0 332.3 L293.0 333.0 L292.8 333.6 L292.2 334.0 L291.2 334.3 L290.4 334.6 L290.0 334.9 L290.4 335.1 L291.3 335.3 L292.3 335.5 L293.0 335.9 L293.2 336.4 L293.3 337.1 L293.2 337.7 L293.0 338.3 L292.6 338.7 L292.1 339.1 L291.4 339.3 L290.8 339.3 L290.2 338.8 L289.6 338.0 L289.1 337.3Z M287.6 336.3 L287.2 336.1 L286.8 335.8 L286.6 335.4 L286.6 335.0 L286.7 334.5 L286.9 334.1 L287.3 333.9 L287.8 333.7 L288.2 333.8 L288.6 334.0 L288.9 334.3 L289.2 334.7 L289.2 335.1 L289.1 335.6 L288.8 336.0 L288.5 336.2 L288.0 336.4Z M287.5 336.5 L287.1 338.3 M286.4 335.2 L284.6 335.3 M287.3 333.6 L286.6 332.0 M289.0 334.1 L290.4 332.9 M289.2 335.9 L290.7 336.8 M330.3 366.4 L329.8 366.8 L329.0 367.9 L328.2 369.2 L327.3 369.9 L326.4 370.0 L325.4 369.7 L324.6 369.3 L323.9 368.7 L323.6 367.9 L323.4 366.9 L323.4 365.9 L323.8 365.0 L324.8 364.5 L326.2 364.1 L327.5 363.7 L328.1 363.3 L327.6 362.9 L326.2 362.6 L324.8 362.1 L323.8 361.6 L323.4 360.7 L323.4 359.7 L323.6 358.7 L324.0 358.0 L324.6 357.4 L325.5 356.9 L326.5 356.6 L327.4 356.7 L328.2 357.4 L329.0 358.7 L329.8 359.9 L330.3 360.3 L330.5 359.6 L330.5 358.3 L330.4 356.7 L330.7 355.6 L331.3 355.0 L332.3 354.7 L333.3 354.6 L334.2 354.7 L334.9 355.1 L335.7 355.8 L336.2 356.6 L336.4 357.5 L335.9 358.6 L335.0 359.7 L334.1 360.8 L333.9 361.5 L334.6 361.4 L335.9 361.0 L337.3 360.4 L338.4 360.3 L339.2 360.8 L339.8 361.6 L340.3 362.5 L340.4 363.4 L340.2 364.2 L339.8 365.1 L339.2 365.9 L338.4 366.4 L337.3 366.3 L335.9 365.7 L334.6 365.2 L333.9 365.2 L334.1 365.9 L335.0 366.9 L335.9 368.1 L336.4 369.2 L336.2 370.1 L335.6 370.9 L334.9 371.6 L334.1 372.0 L333.2 372.1 L332.2 372.0 L331.3 371.6 L330.6 371.0 L330.4 369.9 L330.4 368.4 L330.5 367.0Z M329.7 364.5 L329.4 363.9 L329.4 363.2 L329.5 362.5 L329.9 362.0 L330.5 361.6 L331.1 361.3 L331.8 361.4 L332.4 361.7 L332.9 362.2 L333.2 362.8 L333.3 363.5 L333.1 364.2 L332.7 364.7 L332.1 365.1 L331.5 365.3 L330.9 365.2 L330.2 364.9Z M329.5 364.7 L327.3 366.3 M329.5 362.0 L327.3 360.4 M332.0 361.2 L332.9 358.6 M333.6 363.3 L336.3 363.4 M332.0 365.5 L332.8 368.1 M316.6 481.0 L322.5 487.0 M318.4 478.6 L323.5 485.6 M321.0 476.5 L325.1 484.4 M324.7 474.9 L327.2 483.5 M328.6 474.3 L329.5 483.1 M332.7 474.6 L331.9 483.3 M336.3 475.6 L333.9 483.9 M339.3 477.4 L335.7 484.9 M341.6 479.8 L337.0 486.3 M343.1 483.1 L337.9 488.2 M344.7 484.0 L344.9 491.2 M348.5 482.3 L347.1 490.2 M352.7 480.1 L349.5 488.9 M357.3 477.2 L352.2 487.3 M360.9 477.7 L354.2 487.5 M363.4 481.8 L355.7 489.9 M365.5 486.4 L357.0 492.6 M367.6 491.2 L358.1 495.4 M368.3 495.8 L358.6 498.0 M367.8 500.3 L358.2 500.6 M366.3 504.0 L357.4 502.8 M363.9 506.8 L356.0 504.4 M361.2 509.5 L354.4 506.0 M357.9 512.3 L352.5 507.6 M291.1 487.5 L297.9 492.5 M288.9 490.8 L296.8 494.2 M287.1 494.6 L295.9 496.1 M285.9 498.7 L295.3 498.1 M285.6 502.5 L295.1 500.0 M286.5 505.5 L295.6 501.5 M288.3 507.9 L296.5 502.7 M291.1 509.9 L297.9 503.7 M294.6 511.2 L299.6 504.4 M298.2 511.4 L301.4 504.4 M301.8 510.5 L303.2 504.0 M298.6 504.6 L305.9 506.5 M297.4 501.6 L305.4 504.9 M298.2 498.8 L305.7 503.5 M300.5 496.4 L306.9 502.4 M303.7 495.0 L308.5 501.7 M307.5 494.6 L310.4 501.5 M311.6 495.5 L312.5 501.9 M315.5 497.2 L314.4 502.8 M319.1 499.9 L316.2 504.1 M317.9 511.7 L323.6 515.1 M319.1 508.1 L324.1 513.3 M321.5 505.4 L325.3 511.9 M324.9 503.5 L327.1 511.0 M328.5 502.5 L328.8 510.5 M332.1 502.5 L330.6 510.5 M335.6 504.2 L332.4 511.3 M338.2 506.7 L333.7 512.6 M339.1 509.8 L334.2 514.1 M313.8 518.9 L317.9 529.7 M315.4 520.8 L319.1 531.1 M317.7 522.8 L320.7 532.5 M320.4 524.2 L322.7 533.5 M323.6 525.3 L324.9 534.3 M327.0 526.1 L327.4 534.8 M330.7 526.4 L330.1 535.1 M334.2 526.3 L332.6 535.0 M337.4 525.6 L334.9 534.5 M340.3 524.4 L337.0 533.7 M342.6 523.0 L338.6 532.6 M344.4 521.3 L339.9 531.4 M339.9 511.7 L343.8 510.5 M342.8 514.0 L345.7 512.0 M346.2 516.1 L347.9 513.4 M350.0 517.7 L350.3 514.4 M353.4 518.7 L352.5 515.1 M356.6 519.0 L354.6 515.3 M497.6 286.6 L498.5 286.8 L500.2 286.7 L502.1 286.6 L503.5 286.9 L504.3 287.7 L504.7 288.9 L504.9 290.2 L504.8 291.3 L504.3 292.3 L503.4 293.2 L502.4 293.9 L501.3 294.2 L500.0 293.7 L498.4 292.5 L497.0 291.4 L496.2 291.1 L496.3 292.0 L496.9 293.6 L497.6 295.4 L497.8 296.8 L497.2 297.8 L496.2 298.6 L495.0 299.2 L494.0 299.4 L492.9 299.2 L491.7 298.7 L490.7 297.9 L490.1 296.9 L490.2 295.5 L490.9 293.7 L491.5 292.1 L491.5 291.2 L490.7 291.5 L489.3 292.6 L487.8 293.8 L486.5 294.4 L485.4 294.2 L484.3 293.5 L483.5 292.6 L482.9 291.6 L482.8 290.5 L482.9 289.2 L483.3 288.0 L484.1 287.2 L485.4 286.9 L487.4 286.9 L489.1 287.0 L490.0 286.7 L489.4 286.0 L487.9 285.1 L486.3 284.0 L485.3 283.0 L485.2 281.9 L485.6 280.6 L486.2 279.5 L486.9 278.7 L487.9 278.2 L489.1 277.9 L490.4 278.0 L491.5 278.4 L492.2 279.6 L492.8 281.5 L493.2 283.1 L493.7 283.9 L494.2 283.1 L494.7 281.4 L495.2 279.6 L495.9 278.3 L496.9 277.9 L498.2 277.8 L499.4 278.0 L500.4 278.5 L501.2 279.3 L501.8 280.4 L502.2 281.6 L502.1 282.8 L501.2 283.8 L499.6 284.9 L498.1 285.9Z M496.2 288.6 L495.8 289.4 L495.1 290.0 L494.4 290.4 L493.5 290.4 L492.6 290.1 L491.9 289.6 L491.5 288.9 L491.3 288.0 L491.4 287.2 L491.8 286.4 L492.5 285.8 L493.2 285.4 L494.1 285.4 L495.0 285.7 L495.7 286.2 L496.1 286.9 L496.3 287.8Z M496.5 288.7 L499.8 289.8 M493.8 290.8 L493.9 294.2 M491.1 288.8 L487.8 289.9 M492.1 285.6 L490.0 282.8 M495.5 285.6 L497.4 282.7 M478.2 200.8C475.0 196.5 472.2 189.5 473.4 186.6C476.3 187.9 479.2 194.8 479.9 200.2 M479.7 200.3C477.8 194.5 477.1 186.1 479.1 183.3C481.5 185.7 482.4 194.1 481.5 200.2 M481.4 200.6C481.3 194.1 483.3 185.4 486.0 183.2C487.6 186.3 485.8 195.1 483.2 201.0 M483.1 201.5C484.8 195.3 489.1 187.4 492.3 186.0C493.0 189.4 488.9 197.4 484.7 202.3 M484.8 203.1C488.5 197.4 495.3 190.7 498.9 190.3C498.4 193.8 491.8 200.6 486.1 204.4 M486.3 205.2C491.2 201.0 499.2 196.8 502.6 197.5C501.3 200.7 493.4 205.0 487.1 206.8 M487.5 207.7C492.8 205.4 500.7 204.1 503.4 205.8C501.4 208.4 493.6 209.9 487.8 209.5 M488.1 210.1C493.5 209.3 501.0 210.2 503.0 212.6C500.5 214.5 493.0 213.8 487.9 211.9 M488.3 212.4C493.7 213.1 500.6 216.0 501.9 218.9C499.0 220.1 492.0 217.3 487.7 214.1 M488.1 214.4C492.8 216.3 498.2 220.7 498.5 223.7C495.5 224.2 489.9 220.0 486.9 215.8 M487.3 216.1C491.0 219.0 494.7 224.4 494.0 227.3C491.1 226.9 487.3 221.7 485.8 217.1 M486.1 217.1C488.8 221.0 490.7 227.2 489.2 229.8C486.5 228.6 484.4 222.5 484.3 217.7 M484.2 217.4C485.5 221.3 485.2 226.8 482.9 228.4C480.8 226.7 480.9 221.2 482.4 217.4 M481.8 216.5C481.9 219.6 480.1 223.2 477.6 223.4C476.2 221.4 477.8 217.7 480.2 215.8 M479.3 214.2C478.6 216.6 476.3 218.4 474.2 217.3C473.4 215.1 475.7 213.1 478.2 212.8 M477.1 210.1C475.6 211.8 473.1 212.1 472.0 210.1C472.4 207.8 474.8 207.2 476.8 208.3 M476.8 202.6C473.6 201.4 470.5 198.1 471.1 195.6C473.6 195.0 476.8 198.1 478.1 201.4 M476.3 205.7C473.8 206.3 471.0 205.1 470.9 202.8C472.5 201.0 475.4 201.9 476.9 204.0 M396.7 301.7 L396.6 302.2 L396.3 302.8 L395.9 303.3 L395.3 303.7 L394.6 304.1 L393.7 304.5 L392.7 304.8 L391.6 305.1 L390.5 305.2 L389.3 305.3 L388.1 305.3 L386.9 305.2 L385.8 305.1 L384.7 304.8 L383.7 304.5 L382.8 304.1 L382.1 303.7 L381.5 303.3 L381.1 302.8 L380.8 302.2 L380.7 301.7 L380.8 301.2 L381.1 300.6 L381.5 300.1 L382.1 299.7 L382.8 299.3 L383.7 298.9 L384.7 298.6 L385.8 298.3 L386.9 298.2 L388.1 298.1 L389.3 298.1 L390.5 298.2 L391.6 298.3 L392.7 298.6 L393.7 298.9 L394.6 299.3 L395.3 299.7 L395.9 300.1 L396.3 300.6 L396.6 301.2Z M383.7 301.7 L384.0 301.5 L384.4 301.3 L384.9 301.0 L385.5 300.7 L386.1 300.5 L386.7 300.5 L387.3 300.7 L388.0 301.1 L388.7 301.5 L389.4 302.0 L390.1 302.3 L390.7 302.5 L391.3 302.5 L391.9 302.3 L392.4 302.0 L393.0 301.7 L393.4 301.4 L393.7 301.2 M380.2 302.0C375.5 302.7 369.0 301.7 367.4 299.3C369.6 297.5 376.1 298.3 380.4 300.3 M380.6 300.8C374.7 299.5 367.0 295.8 365.6 292.8C368.8 292.0 376.5 295.5 381.4 299.2 M381.8 299.7C376.0 296.2 369.0 289.8 368.3 286.3C371.8 286.7 378.9 292.9 383.0 298.4 M383.7 298.7C379.1 293.3 374.1 284.6 374.4 280.9C377.8 282.5 382.8 291.1 385.2 297.8 M386.0 298.0C383.1 291.5 380.9 281.7 382.3 278.3C385.0 280.8 387.3 290.5 387.6 297.6 M388.3 297.7C387.3 291.0 387.9 281.5 390.1 278.7C392.1 281.7 391.7 291.2 390.0 297.8 M390.8 297.6C391.9 290.6 395.5 281.3 398.4 279.1C399.4 282.7 396.1 292.1 392.4 298.2 M393.3 298.0C396.5 291.7 402.8 283.9 406.2 282.8C406.0 286.4 400.0 294.4 394.6 299.1 M395.2 298.7C399.9 293.8 407.7 288.4 411.2 288.5C410.1 291.9 402.4 297.4 396.2 300.1 M396.5 299.7C402.1 296.4 410.7 293.7 413.9 294.9C412.0 297.7 403.5 300.6 397.0 301.3 M397.2 300.8C403.5 299.5 412.5 299.6 415.2 301.7C412.5 303.8 403.5 303.9 397.2 302.6 M397.1 301.9C402.9 302.1 410.6 304.2 412.4 306.9C409.5 308.3 401.8 306.3 396.7 303.6 M396.4 303.1C400.6 304.2 405.7 307.5 406.1 310.2C403.5 311.0 398.3 307.9 395.5 304.5 M381.8 304.4C380.0 307.0 376.5 308.9 374.4 307.7C374.4 305.3 377.8 303.2 380.9 303.0 M380.6 303.4C377.4 305.4 372.5 306.3 370.6 304.6C371.6 302.3 376.5 301.1 380.2 301.7 M389.4 541.7C383.4 535.0 377.7 523.8 379.0 518.8C383.9 520.5 389.9 531.6 392.0 540.4 M391.1 541.1C387.2 534.9 385.0 525.2 387.7 521.5C391.8 523.5 394.4 533.1 393.9 540.4 M392.9 540.7C390.9 532.5 391.3 520.8 394.9 517.4C398.4 521.0 398.2 532.6 395.8 540.7 M395.0 540.4C395.1 532.5 398.5 522.3 402.9 520.2C405.2 524.4 402.1 534.7 397.7 541.3 M398.4 540.6C402.1 532.8 410.0 523.8 415.0 523.4C415.3 528.4 407.7 537.5 400.6 542.4 M400.8 541.2C406.5 534.4 416.6 527.5 421.6 528.2C420.6 533.2 410.8 540.4 402.5 543.6 M386.2 543.4C376.5 538.7 364.7 529.5 363.3 524.0C369.0 523.9 381.0 532.9 387.9 541.1 M384.2 545.0C374.3 543.2 361.3 537.4 358.8 532.5C364.1 531.0 377.2 536.4 385.4 542.3 M383.0 546.8C373.2 547.0 359.9 544.0 356.6 539.7C361.4 537.1 374.8 539.8 383.6 544.0 M405.4 545.2C416.5 541.8 432.8 540.4 438.0 543.4C433.5 547.4 417.3 549.1 405.7 548.0 M405.5 548.1C415.8 547.5 430.0 550.0 433.7 554.2C428.9 556.9 414.6 554.8 405.1 550.9 M404.8 549.6C414.2 550.3 426.7 554.6 429.4 559.1C424.5 561.3 412.0 557.3 403.9 552.4 M388.5 554.5C386.5 559.3 381.4 563.5 377.6 562.1C376.8 558.2 381.7 553.7 386.7 552.3 M401.7 552.3C407.2 554.2 412.9 559.3 412.3 563.4C408.3 564.6 402.4 559.7 399.9 554.5 M403.6 542.8C410.2 538.0 420.8 534.3 425.2 536.4C423.2 540.9 412.7 544.9 404.6 545.5 M388.1 542.3C381.6 537.6 375.0 528.8 375.7 524.1C380.5 524.5 387.4 533.1 390.4 540.5 M384.8 552.6C382.5 555.9 377.9 557.4 375.4 554.5C375.5 550.7 379.9 549.0 383.8 549.9"/></defs>
<use href="#thinlines" fill="none" stroke="#c3c6ba" stroke-width="1.45" stroke-linecap="round" stroke-linejoin="round"/>
<use href="#thinlines" fill="none" stroke="#f4f5ee" stroke-width="1.25" stroke-linecap="round" stroke-linejoin="round" stroke-dasharray="1.5 1.3"/>
<g><polygon points="403.7,155.7 403.2,156.7 402.5,157.9 401.7,159.4 400.8,161.1 399.9,162.9 398.9,164.8 397.9,166.7 396.9,168.6 396.0,170.4 395.2,172.1 394.4,173.7 393.6,175.3 392.8,176.9 392.0,178.5 391.3,180.1 390.5,181.6 389.8,183.2 389.0,184.7 388.3,186.2 387.5,187.8 386.8,189.3 386.1,190.8 385.4,192.2 384.8,193.7 384.1,195.1 383.4,196.5 382.7,198.0 382.0,199.4 381.2,200.9 380.4,202.4 379.6,204.1 378.6,205.9 377.7,207.7 376.7,209.5 375.7,211.4 374.7,213.2 373.7,215.0 372.7,216.7 371.7,218.2 370.8,219.6 369.9,221.0 369.0,222.2 368.1,223.4 367.2,224.5 366.3,225.5 365.3,226.5 364.4,227.5 363.5,228.4 362.6,229.3 361.7,230.2 360.8,231.1 359.9,231.9 359.0,232.7 358.1,233.4 357.3,234.0 356.4,234.6 355.7,235.1 354.9,235.6 354.2,235.9 353.5,236.2 352.7,236.5 351.9,236.8 351.2,236.9 350.5,237.1 349.8,237.1 349.2,237.2 348.6,237.1 348.1,237.1 347.5,236.9 346.8,236.7 346.1,236.3 345.3,235.9 344.4,235.3 343.5,234.6 342.6,233.9 341.7,233.0 340.8,232.1 339.9,231.1 339.0,230.1 338.2,229.1 337.4,227.9 336.6,226.7 335.8,225.4 335.1,224.0 334.3,222.6 333.6,221.1 332.9,219.5 332.2,217.9 331.6,216.2 331.0,214.5 330.4,212.7 329.8,210.8 329.3,208.8 328.8,206.7 328.3,204.6 327.8,202.5 327.4,200.3 327.0,198.2 326.7,196.2 326.3,194.2 326.0,192.4 325.8,190.6 325.6,188.9 325.4,187.2 325.3,185.5 325.1,183.8 325.0,182.2 324.9,180.6 324.9,179.0 324.8,177.5 324.7,176.0 324.6,174.6 324.6,173.3 324.5,172.0 324.5,170.8 324.5,169.6 324.5,168.5 324.6,167.5 324.7,166.5 324.8,165.6 325.0,164.6 325.2,163.6 325.4,162.7 325.7,161.9 326.0,161.1 326.3,160.3 326.6,159.6 327.0,158.9 327.3,158.2 327.8,157.6 328.2,157.0 328.6,156.4 329.1,155.9 329.6,155.4 330.1,154.9 330.7,154.4 331.4,153.9 332.2,153.4 333.1,152.8 334.2,152.2 335.3,151.6 336.5,151.1 337.8,150.5 339.3,149.9 340.8,149.3 342.4,148.6 344.1,148.0 345.9,147.3 347.9,146.5 349.8,145.8 351.9,145.0 354.1,144.1 356.5,143.2 358.9,142.3 361.4,141.4 363.9,140.4 366.4,139.5 369.0,138.5 371.5,137.6 373.9,136.7 376.4,135.8 379.0,134.8 381.5,133.8 384.1,132.9 386.6,131.9 389.1,131.0 391.5,130.1 393.9,129.3 396.1,128.5 398.1,127.8 400.0,127.2 401.8,126.7 403.6,126.2 405.2,125.7 406.8,125.3 408.3,125.0 409.7,124.7 411.1,124.4 412.4,124.1 413.7,123.8 414.9,123.6 416.0,123.4 417.0,123.2 417.9,123.1 418.7,123.0 419.5,123.0 420.3,122.9 421.0,122.9 421.7,122.9 422.5,123.0 423.2,123.0 423.9,123.1 424.6,123.2 425.3,123.3 426.0,123.5 426.7,123.7 427.3,123.9 427.9,124.1 428.4,124.3 428.8,124.5 429.2,124.6 429.5,124.8 429.9,125.0 430.2,125.3 430.5,125.6 430.9,126.0 431.2,126.4 431.5,126.9 431.8,127.3 432.2,127.8 432.4,128.2 432.7,128.6 433.0,129.2 433.2,129.7 433.5,130.3 433.7,130.9 433.9,131.4 434.1,131.9 434.3,132.3 434.5,132.6 435.9,132.4 436.0,132.0 436.1,131.6 436.1,131.1 436.2,130.5 436.2,129.8 436.2,129.1 436.1,128.4 436.1,127.7 436.0,126.9 435.8,126.2 435.7,125.6 435.5,125.0 435.3,124.3 435.1,123.7 434.8,123.0 434.4,122.3 434.0,121.6 433.5,120.9 432.9,120.2 432.2,119.5 431.4,119.0 430.6,118.5 429.8,118.1 429.0,117.7 428.1,117.3 427.1,117.0 426.2,116.7 425.2,116.4 424.2,116.2 423.1,116.0 422.1,115.9 421.2,115.9 420.2,115.9 419.1,115.9 418.1,116.0 417.1,116.0 416.0,116.2 414.8,116.3 413.6,116.5 412.3,116.8 411.0,117.0 409.6,117.3 408.1,117.6 406.6,118.0 405.0,118.4 403.4,118.8 401.6,119.2 399.8,119.8 397.9,120.3 395.9,121.0 393.7,121.7 391.5,122.5 389.1,123.3 386.6,124.2 384.1,125.2 381.5,126.1 379.0,127.1 376.4,128.1 373.9,129.0 371.5,129.9 369.0,130.8 366.5,131.7 363.9,132.6 361.4,133.5 358.8,134.4 356.3,135.3 353.9,136.2 351.5,137.1 349.3,137.9 347.2,138.6 345.2,139.4 343.3,140.0 341.5,140.6 339.7,141.3 338.0,141.9 336.4,142.5 334.8,143.0 333.3,143.7 331.8,144.3 330.4,145.0 329.1,145.6 328.0,146.2 326.9,146.9 325.8,147.5 324.9,148.2 323.9,149.0 323.0,149.8 322.2,150.6 321.4,151.5 320.6,152.4 319.9,153.4 319.3,154.5 318.7,155.6 318.1,156.8 317.6,157.9 317.2,159.1 316.8,160.3 316.5,161.5 316.2,162.8 316.0,164.0 315.8,165.4 315.6,166.7 315.5,168.1 315.4,169.4 315.4,170.8 315.4,172.2 315.4,173.6 315.5,175.0 315.5,176.4 315.6,177.9 315.7,179.5 315.8,181.1 315.9,182.7 316.0,184.4 316.1,186.2 316.3,188.0 316.4,189.9 316.7,191.8 316.9,193.8 317.3,195.8 317.6,197.8 318.0,199.9 318.4,202.1 318.9,204.3 319.4,206.6 319.9,208.9 320.5,211.1 321.1,213.3 321.8,215.4 322.4,217.5 323.2,219.4 323.9,221.3 324.7,223.1 325.5,224.9 326.4,226.6 327.3,228.3 328.2,229.9 329.2,231.5 330.2,232.9 331.2,234.3 332.3,235.7 333.4,237.0 334.6,238.2 335.8,239.4 337.0,240.5 338.3,241.5 339.6,242.4 340.9,243.2 342.2,243.9 343.6,244.5 345.0,245.0 346.4,245.4 347.8,245.6 349.1,245.7 350.5,245.6 351.8,245.5 353.0,245.2 354.2,244.9 355.4,244.6 356.5,244.2 357.8,243.7 359.0,243.0 360.1,242.4 361.3,241.6 362.4,240.8 363.4,240.0 364.5,239.1 365.5,238.2 366.5,237.3 367.5,236.4 368.5,235.4 369.5,234.4 370.6,233.4 371.6,232.3 372.6,231.1 373.7,229.9 374.7,228.6 375.8,227.3 376.8,225.9 377.8,224.4 378.9,222.7 379.9,221.0 380.9,219.1 382.0,217.2 383.0,215.3 384.0,213.3 385.0,211.4 385.9,209.5 386.8,207.7 387.6,206.0 388.3,204.3 389.0,202.6 389.6,201.0 390.2,199.4 390.8,197.9 391.3,196.4 391.9,194.8 392.4,193.3 392.9,191.8 393.5,190.2 394.0,188.6 394.6,187.0 395.1,185.3 395.6,183.7 396.1,182.0 396.7,180.4 397.2,178.7 397.7,177.0 398.3,175.4 398.8,173.7 399.4,171.9 400.1,169.9 400.8,167.9 401.5,165.9 402.2,163.9 402.8,162.0 403.4,160.2 403.9,158.5 404.4,157.2 404.7,156.1" fill="#bfc5b3"/><polygon points="403.8,155.7 403.3,156.7 402.6,158.0 401.9,159.5 401.0,161.2 400.1,163.0 399.2,164.9 398.2,166.9 397.2,168.7 396.3,170.5 395.4,172.2 394.6,173.9 393.9,175.5 393.1,177.1 392.4,178.7 391.6,180.2 390.9,181.8 390.1,183.3 389.4,184.9 388.7,186.4 387.9,187.9 387.2,189.5 386.5,191.0 385.9,192.4 385.2,193.9 384.6,195.3 383.9,196.7 383.2,198.2 382.5,199.6 381.7,201.1 380.9,202.7 380.1,204.4 379.2,206.1 378.2,208.0 377.2,209.8 376.2,211.7 375.2,213.5 374.2,215.3 373.2,217.0 372.2,218.5 371.3,220.0 370.3,221.3 369.4,222.6 368.5,223.7 367.6,224.9 366.7,225.9 365.8,226.9 364.9,227.9 363.9,228.8 363.0,229.8 362.1,230.6 361.2,231.5 360.3,232.3 359.4,233.1 358.5,233.8 357.6,234.5 356.8,235.1 356.0,235.6 355.2,236.1 354.4,236.5 353.7,236.8 352.9,237.1 352.1,237.3 351.3,237.5 350.6,237.7 349.9,237.7 349.2,237.8 348.6,237.7 347.9,237.6 347.3,237.5 346.6,237.2 345.8,236.9 345.0,236.4 344.1,235.8 343.2,235.1 342.2,234.3 341.3,233.5 340.4,232.5 339.4,231.5 338.6,230.5 337.7,229.4 336.9,228.3 336.1,227.0 335.3,225.7 334.5,224.3 333.8,222.9 333.0,221.3 332.3,219.8 331.6,218.1 331.0,216.4 330.4,214.7 329.8,212.9 329.2,211.0 328.7,209.0 328.2,206.9 327.7,204.7 327.2,202.6 326.8,200.4 326.4,198.3 326.0,196.3 325.7,194.4 325.4,192.5 325.2,190.7 325.0,189.0 324.8,187.2 324.6,185.5 324.5,183.8 324.4,182.2 324.3,180.6 324.2,179.0 324.2,177.5 324.1,176.0 324.0,174.6 323.9,173.3 323.9,172.0 323.9,170.8 323.9,169.6 323.9,168.5 324.0,167.5 324.1,166.4 324.2,165.5 324.4,164.5 324.6,163.5 324.8,162.6 325.1,161.7 325.4,160.8 325.7,160.0 326.0,159.3 326.4,158.6 326.8,157.9 327.3,157.2 327.7,156.6 328.2,156.0 328.7,155.5 329.2,155.0 329.7,154.5 330.4,154.0 331.1,153.4 331.9,152.9 332.9,152.3 333.9,151.7 335.1,151.1 336.3,150.5 337.6,149.9 339.1,149.3 340.6,148.7 342.2,148.1 343.9,147.4 345.8,146.8 347.7,146.0 349.6,145.3 351.7,144.5 354.0,143.6 356.3,142.7 358.7,141.8 361.2,140.9 363.7,140.0 366.3,139.0 368.8,138.1 371.3,137.1 373.8,136.2 376.2,135.3 378.8,134.3 381.3,133.4 383.9,132.4 386.4,131.4 388.9,130.5 391.4,129.6 393.7,128.8 395.9,128.0 398.0,127.3 399.9,126.7 401.7,126.2 403.4,125.7 405.1,125.2 406.7,124.8 408.2,124.5 409.6,124.2 411.0,123.9 412.3,123.6 413.6,123.3 414.8,123.1 415.9,122.9 416.9,122.8 417.8,122.6 418.7,122.5 419.5,122.5 420.3,122.4 421.0,122.4 421.8,122.4 422.5,122.5 423.3,122.5 424.0,122.6 424.7,122.7 425.5,122.9 426.2,123.0 426.9,123.2 427.5,123.4 428.1,123.7 428.6,123.9 429.0,124.1 429.4,124.3 429.8,124.5 430.2,124.8 430.5,125.1 430.8,125.5 431.2,125.8 431.5,126.3 431.8,126.7 432.1,127.2 432.4,127.7 432.7,128.1 433.0,128.6 433.2,129.1 433.6,129.7 433.8,130.2 434.0,130.8 434.1,131.4 434.3,131.9 434.5,132.3 434.6,132.6 435.7,132.4 435.7,132.1 435.7,131.7 435.7,131.1 435.7,130.6 435.7,129.9 435.6,129.2 435.7,128.5 435.6,127.8 435.5,127.1 435.3,126.5 435.1,125.9 434.9,125.3 434.7,124.7 434.4,124.0 434.1,123.4 433.8,122.7 433.4,122.1 432.9,121.4 432.3,120.8 431.7,120.3 431.0,119.8 430.2,119.3 429.4,118.9 428.6,118.6 427.7,118.2 426.9,117.9 425.9,117.6 425.0,117.4 424.0,117.2 423.0,117.1 422.1,117.0 421.1,116.9 420.2,116.9 419.2,116.9 418.2,117.0 417.2,117.1 416.1,117.2 415.0,117.4 413.8,117.6 412.5,117.8 411.2,118.1 409.8,118.4 408.4,118.7 406.9,119.0 405.3,119.4 403.7,119.8 401.9,120.3 400.1,120.8 398.2,121.4 396.2,122.0 394.1,122.7 391.8,123.5 389.5,124.3 387.0,125.3 384.5,126.2 381.9,127.2 379.4,128.1 376.8,129.1 374.3,130.0 371.8,130.9 369.4,131.8 366.9,132.7 364.3,133.6 361.7,134.6 359.2,135.5 356.7,136.4 354.3,137.3 351.9,138.1 349.7,138.9 347.6,139.7 345.6,140.4 343.7,141.1 341.9,141.7 340.1,142.4 338.4,143.0 336.8,143.6 335.2,144.2 333.8,144.8 332.3,145.4 331.0,146.1 329.7,146.7 328.6,147.3 327.6,147.9 326.6,148.6 325.6,149.2 324.8,149.9 323.9,150.7 323.2,151.5 322.4,152.3 321.7,153.2 321.0,154.2 320.4,155.2 319.9,156.2 319.3,157.3 318.9,158.4 318.5,159.5 318.1,160.7 317.8,161.8 317.5,163.0 317.3,164.3 317.1,165.5 316.9,166.8 316.9,168.1 316.8,169.5 316.8,170.8 316.8,172.1 316.8,173.5 316.9,174.9 316.9,176.4 317.0,177.9 317.1,179.4 317.1,181.0 317.2,182.6 317.3,184.4 317.5,186.1 317.6,187.9 317.8,189.8 318.0,191.6 318.3,193.6 318.6,195.5 319.0,197.5 319.4,199.6 319.8,201.8 320.2,204.0 320.7,206.3 321.3,208.5 321.8,210.8 322.4,212.9 323.1,215.0 323.7,217.0 324.4,218.9 325.2,220.8 325.9,222.6 326.7,224.3 327.6,226.0 328.4,227.7 329.3,229.2 330.3,230.7 331.2,232.2 332.2,233.6 333.3,234.9 334.4,236.1 335.5,237.3 336.7,238.4 337.9,239.5 339.1,240.4 340.3,241.3 341.6,242.1 342.8,242.8 344.1,243.3 345.3,243.8 346.6,244.1 347.9,244.3 349.2,244.4 350.4,244.4 351.6,244.2 352.7,244.0 353.9,243.7 355.0,243.4 356.1,243.0 357.2,242.5 358.4,241.9 359.5,241.3 360.5,240.6 361.6,239.8 362.6,239.0 363.6,238.2 364.7,237.3 365.6,236.4 366.6,235.5 367.6,234.5 368.6,233.5 369.6,232.5 370.7,231.4 371.7,230.3 372.7,229.1 373.7,227.9 374.7,226.5 375.8,225.1 376.8,223.6 377.8,222.0 378.8,220.3 379.9,218.5 380.9,216.6 381.9,214.7 382.9,212.8 383.9,210.9 384.8,209.0 385.7,207.2 386.5,205.4 387.3,203.8 388.0,202.1 388.6,200.5 389.2,199.0 389.8,197.5 390.4,196.0 390.9,194.5 391.5,192.9 392.0,191.4 392.6,189.9 393.2,188.3 393.7,186.6 394.3,185.0 394.9,183.4 395.4,181.7 396.0,180.1 396.5,178.4 397.1,176.8 397.7,175.1 398.3,173.4 398.9,171.7 399.6,169.7 400.2,167.7 401.0,165.7 401.7,163.7 402.4,161.8 403.1,160.0 403.7,158.4 404.1,157.1 404.5,156.0" fill="#dde1d3"/><polygon points="404.0,155.8 403.5,156.8 402.8,158.1 402.1,159.6 401.3,161.3 400.4,163.1 399.5,165.1 398.6,167.0 397.6,168.9 396.7,170.7 395.9,172.5 395.2,174.1 394.4,175.7 393.7,177.3 393.0,178.9 392.3,180.5 391.6,182.1 390.9,183.6 390.2,185.2 389.5,186.7 388.8,188.3 388.1,189.8 387.4,191.3 386.8,192.8 386.1,194.2 385.5,195.7 384.9,197.1 384.2,198.6 383.5,200.1 382.7,201.6 381.9,203.2 381.1,204.9 380.2,206.6 379.2,208.5 378.2,210.3 377.2,212.2 376.2,214.1 375.2,215.9 374.2,217.6 373.2,219.2 372.2,220.6 371.3,222.0 370.4,223.3 369.5,224.5 368.5,225.6 367.6,226.7 366.7,227.7 365.7,228.7 364.8,229.7 363.9,230.6 362.9,231.5 362.0,232.4 361.0,233.2 360.1,234.0 359.2,234.8 358.3,235.5 357.5,236.1 356.6,236.7 355.8,237.1 354.9,237.6 354.1,237.9 353.3,238.2 352.4,238.5 351.6,238.7 350.8,238.8 350.0,238.9 349.2,239.0 348.4,238.9 347.7,238.8 346.9,238.6 346.1,238.3 345.3,237.9 344.4,237.4 343.4,236.8 342.4,236.1 341.5,235.2 340.5,234.4 339.5,233.4 338.5,232.4 337.6,231.3 336.7,230.2 335.9,229.0 335.1,227.7 334.2,226.4 333.4,224.9 332.7,223.4 331.9,221.9 331.2,220.3 330.5,218.6 329.8,216.9 329.2,215.1 328.6,213.3 328.0,211.4 327.4,209.3 326.9,207.2 326.4,205.0 326.0,202.8 325.5,200.7 325.1,198.6 324.8,196.5 324.4,194.6 324.1,192.7 323.9,190.9 323.7,189.1 323.5,187.3 323.3,185.6 323.2,183.9 323.1,182.3 323.0,180.7 322.9,179.1 322.9,177.6 322.8,176.1 322.7,174.7 322.7,173.3 322.6,172.0 322.6,170.8 322.6,169.6 322.6,168.4 322.7,167.3 322.8,166.3 323.0,165.2 323.2,164.2 323.4,163.2 323.6,162.2 323.9,161.3 324.2,160.4 324.6,159.6 324.9,158.7 325.3,158.0 325.8,157.2 326.3,156.5 326.8,155.8 327.3,155.2 327.8,154.6 328.4,154.1 329.0,153.5 329.7,153.0 330.5,152.5 331.3,151.9 332.3,151.3 333.4,150.7 334.6,150.1 335.8,149.5 337.2,148.9 338.7,148.3 340.2,147.7 341.8,147.1 343.6,146.4 345.4,145.7 347.3,145.0 349.3,144.3 351.4,143.5 353.6,142.6 355.9,141.7 358.3,140.8 360.8,139.9 363.4,139.0 365.9,138.0 368.4,137.1 371.0,136.2 373.4,135.3 375.9,134.3 378.4,133.4 381.0,132.4 383.5,131.5 386.1,130.5 388.6,129.6 391.0,128.7 393.4,127.8 395.6,127.1 397.6,126.4 399.6,125.8 401.4,125.2 403.2,124.7 404.8,124.3 406.4,123.9 407.9,123.5 409.4,123.2 410.8,122.9 412.1,122.6 413.4,122.4 414.6,122.1 415.7,121.9 416.8,121.8 417.7,121.6 418.6,121.5 419.4,121.5 420.2,121.4 421.0,121.4 421.8,121.5 422.6,121.5 423.4,121.6 424.2,121.7 425.0,121.8 425.7,122.0 426.5,122.2 427.2,122.4 427.8,122.6 428.5,122.9 429.0,123.2 429.5,123.4 430.0,123.7 430.4,124.0 430.7,124.3 431.1,124.7 431.4,125.1 431.8,125.5 432.1,126.0 432.4,126.5 432.7,127.0 432.9,127.4 433.2,127.9 433.4,128.4 433.6,129.0 433.9,129.6 434.1,130.2 434.3,130.8 434.4,131.3 434.5,131.8 434.7,132.2 434.8,132.6 435.5,132.4 435.5,132.1 435.4,131.7 435.4,131.2 435.4,130.6 435.3,130.0 435.2,129.3 435.2,128.6 435.1,128.0 435.0,127.3 434.8,126.7 434.6,126.1 434.4,125.5 434.1,124.9 433.8,124.4 433.5,123.8 433.2,123.2 432.8,122.6 432.3,122.0 431.8,121.5 431.2,121.0 430.5,120.5 429.8,120.1 429.1,119.7 428.3,119.4 427.5,119.1 426.6,118.8 425.7,118.6 424.8,118.3 423.9,118.2 422.9,118.0 422.0,118.0 421.1,117.9 420.2,117.9 419.3,117.9 418.3,118.0 417.3,118.1 416.3,118.2 415.2,118.4 414.0,118.6 412.7,118.8 411.4,119.1 410.0,119.4 408.6,119.7 407.1,120.0 405.5,120.4 403.9,120.8 402.2,121.3 400.4,121.8 398.5,122.3 396.5,123.0 394.4,123.7 392.2,124.4 389.8,125.3 387.3,126.2 384.8,127.1 382.3,128.1 379.7,129.1 377.2,130.0 374.6,131.0 372.2,131.9 369.7,132.8 367.2,133.7 364.7,134.6 362.1,135.5 359.6,136.4 357.1,137.4 354.6,138.2 352.3,139.1 350.0,139.9 347.9,140.7 346.0,141.4 344.1,142.1 342.2,142.8 340.5,143.4 338.8,144.0 337.2,144.6 335.7,145.2 334.2,145.8 332.8,146.4 331.5,147.1 330.3,147.7 329.2,148.3 328.2,148.9 327.2,149.5 326.4,150.2 325.6,150.8 324.8,151.5 324.1,152.3 323.4,153.1 322.7,153.9 322.1,154.8 321.5,155.8 321.0,156.8 320.5,157.8 320.1,158.8 319.7,159.9 319.3,161.0 319.0,162.1 318.8,163.3 318.5,164.5 318.3,165.7 318.2,166.9 318.1,168.2 318.1,169.5 318.1,170.8 318.1,172.1 318.1,173.5 318.1,174.9 318.2,176.3 318.3,177.8 318.3,179.3 318.4,180.9 318.5,182.6 318.6,184.3 318.8,186.0 318.9,187.8 319.1,189.6 319.3,191.5 319.6,193.4 319.9,195.3 320.2,197.3 320.6,199.4 321.0,201.6 321.5,203.8 322.0,206.0 322.5,208.2 323.1,210.5 323.6,212.6 324.3,214.7 324.9,216.6 325.6,218.5 326.3,220.3 327.1,222.1 327.9,223.8 328.7,225.5 329.5,227.1 330.4,228.6 331.3,230.1 332.3,231.5 333.2,232.8 334.2,234.1 335.3,235.3 336.4,236.4 337.5,237.5 338.7,238.5 339.8,239.5 341.0,240.3 342.2,241.1 343.3,241.7 344.5,242.2 345.7,242.7 346.9,243.0 348.0,243.1 349.2,243.2 350.3,243.2 351.4,243.0 352.5,242.8 353.5,242.6 354.6,242.2 355.6,241.9 356.7,241.4 357.8,240.9 358.8,240.3 359.9,239.6 360.9,238.9 361.9,238.1 362.9,237.3 363.9,236.4 364.8,235.5 365.8,234.6 366.8,233.7 367.8,232.7 368.8,231.7 369.8,230.6 370.8,229.5 371.8,228.3 372.8,227.1 373.8,225.8 374.8,224.4 375.8,223.0 376.8,221.4 377.8,219.7 378.8,217.9 379.9,216.1 380.9,214.2 381.9,212.2 382.8,210.3 383.8,208.5 384.7,206.7 385.5,204.9 386.3,203.3 387.0,201.7 387.6,200.1 388.3,198.6 388.9,197.1 389.4,195.6 390.0,194.1 390.6,192.6 391.2,191.1 391.8,189.5 392.4,187.9 393.0,186.3 393.5,184.7 394.1,183.1 394.7,181.5 395.3,179.8 395.9,178.2 396.5,176.5 397.1,174.9 397.8,173.2 398.4,171.5 399.2,169.6 399.9,167.6 400.7,165.6 401.4,163.6 402.2,161.7 402.9,159.9 403.5,158.3 404.0,157.0 404.4,156.0" fill="#f1f3ea"/>
<polygon points="381.1,242.4 381.2,243.0 381.3,243.7 381.5,244.5 381.7,245.4 381.9,246.4 382.2,247.4 382.6,248.5 383.0,249.7 383.4,250.9 383.9,252.0 384.3,253.1 384.8,254.2 385.3,255.4 385.8,256.7 386.5,258.0 387.2,259.4 388.1,260.8 389.1,262.2 390.3,263.6 391.7,265.0 393.3,266.2 395.0,267.3 396.9,268.5 398.8,269.5 400.8,270.6 402.9,271.6 405.0,272.7 407.1,273.7 409.2,274.8 411.4,275.9 413.6,277.0 415.9,278.2 418.3,279.3 420.8,280.5 423.3,281.7 425.8,282.9 428.3,284.1 430.7,285.3 433.1,286.5 435.4,287.7 437.7,288.9 440.1,290.1 442.4,291.4 444.7,292.6 447.0,293.9 449.3,295.2 451.6,296.4 453.8,297.7 455.9,298.9 458.0,300.1 460.0,301.1 462.0,302.2 463.9,303.2 465.8,304.3 467.7,305.3 469.5,306.3 471.4,307.3 473.2,308.3 475.1,309.3 476.9,310.2 478.9,311.1 480.9,312.1 483.0,313.0 485.2,314.0 487.2,314.9 489.2,315.7 491.0,316.5 492.6,317.2 494.0,317.7 495.1,318.1 496.5,315.5 495.5,314.8 494.3,314.0 492.8,313.0 491.1,312.0 489.3,310.9 487.4,309.7 485.4,308.5 483.5,307.3 481.6,306.1 479.9,305.0 478.2,303.9 476.5,302.8 474.8,301.7 473.1,300.5 471.4,299.3 469.6,298.1 467.8,296.9 465.9,295.7 464.0,294.4 462.0,293.1 459.9,291.9 457.8,290.7 455.6,289.4 453.3,288.1 451.0,286.8 448.7,285.5 446.3,284.1 444.0,282.8 441.6,281.6 439.2,280.3 436.7,279.1 434.2,277.9 431.7,276.8 429.1,275.6 426.6,274.5 424.1,273.4 421.6,272.3 419.2,271.2 416.9,270.2 414.6,269.1 412.4,268.1 410.2,267.1 408.0,266.1 405.9,265.2 403.9,264.3 401.9,263.4 400.1,262.5 398.5,261.6 397.0,260.7 395.7,259.8 394.5,259.0 393.5,258.1 392.6,257.2 391.7,256.3 390.9,255.3 390.2,254.2 389.5,253.2 388.8,252.1 388.1,251.0 387.3,250.0 386.6,249.1 386.0,248.2 385.4,247.2 384.8,246.3 384.2,245.4 383.7,244.5 383.3,243.8 382.8,243.1 382.4,242.5 382.1,242.0" fill="#bfc5b3"/><polygon points="381.2,242.4 381.3,242.9 381.5,243.6 381.7,244.4 381.9,245.3 382.2,246.3 382.5,247.3 382.9,248.4 383.2,249.6 383.6,250.7 384.1,251.9 384.6,252.9 385.1,254.0 385.6,255.2 386.1,256.5 386.8,257.8 387.5,259.1 388.4,260.5 389.4,261.9 390.6,263.3 392.0,264.6 393.6,265.8 395.3,266.9 397.1,268.0 399.0,269.1 401.0,270.1 403.1,271.2 405.2,272.2 407.3,273.3 409.4,274.3 411.6,275.4 413.8,276.5 416.2,277.7 418.6,278.8 421.0,280.0 423.5,281.2 426.0,282.4 428.5,283.6 430.9,284.8 433.3,286.0 435.7,287.2 438.0,288.4 440.3,289.6 442.7,290.8 445.0,292.1 447.3,293.4 449.6,294.7 451.8,295.9 454.0,297.2 456.2,298.4 458.3,299.6 460.3,300.7 462.3,301.7 464.2,302.8 466.1,303.8 468.0,304.9 469.8,305.9 471.6,306.9 473.4,307.9 475.3,308.9 477.1,309.8 479.1,310.8 481.1,311.7 483.2,312.7 485.3,313.7 487.4,314.6 489.3,315.5 491.1,316.3 492.7,317.0 494.1,317.5 495.3,317.8 496.2,316.0 495.3,315.2 494.0,314.5 492.5,313.6 490.8,312.6 489.0,311.5 487.0,310.4 485.1,309.2 483.1,308.0 481.2,306.9 479.4,305.8 477.7,304.7 476.0,303.6 474.3,302.5 472.6,301.4 470.8,300.2 469.0,299.1 467.2,297.9 465.3,296.6 463.4,295.4 461.4,294.2 459.3,293.0 457.2,291.7 455.0,290.4 452.7,289.1 450.4,287.8 448.1,286.5 445.7,285.2 443.4,283.9 441.0,282.7 438.6,281.4 436.2,280.2 433.7,279.0 431.2,277.9 428.6,276.7 426.1,275.6 423.6,274.5 421.1,273.4 418.7,272.3 416.4,271.2 414.1,270.1 411.9,269.1 409.7,268.1 407.6,267.1 405.4,266.2 403.4,265.2 401.5,264.3 399.7,263.4 398.0,262.5 396.5,261.5 395.1,260.6 393.9,259.7 392.9,258.7 391.9,257.8 391.0,256.7 390.3,255.7 389.5,254.6 388.8,253.5 388.2,252.4 387.5,251.3 386.8,250.3 386.2,249.4 385.5,248.4 384.8,247.5 384.3,246.5 383.8,245.6 383.3,244.7 382.9,243.9 382.5,243.2 382.2,242.6 381.9,242.1" fill="#dde1d3"/><polygon points="381.4,242.3 381.5,242.8 381.7,243.5 381.9,244.3 382.2,245.2 382.5,246.1 382.8,247.2 383.2,248.2 383.6,249.4 384.1,250.5 384.6,251.6 385.1,252.6 385.6,253.7 386.2,254.9 386.7,256.1 387.4,257.4 388.1,258.7 389.0,260.0 390.0,261.3 391.2,262.6 392.5,263.9 394.1,265.0 395.8,266.1 397.6,267.2 399.5,268.2 401.4,269.3 403.5,270.3 405.6,271.3 407.7,272.3 409.9,273.4 412.0,274.5 414.3,275.6 416.6,276.7 419.0,277.8 421.5,279.0 424.0,280.2 426.5,281.4 429.0,282.5 431.4,283.7 433.9,284.9 436.2,286.1 438.5,287.3 440.9,288.6 443.2,289.8 445.6,291.1 447.9,292.4 450.1,293.7 452.4,294.9 454.6,296.2 456.8,297.4 458.8,298.6 460.9,299.7 462.8,300.8 464.8,301.9 466.6,303.0 468.5,304.0 470.3,305.1 472.1,306.1 473.9,307.1 475.7,308.1 477.5,309.1 479.5,310.1 481.5,311.1 483.5,312.1 485.6,313.1 487.6,314.0 489.6,315.0 491.4,315.8 493.0,316.5 494.3,317.1 495.4,317.5 496.1,316.3 495.1,315.6 493.8,314.9 492.3,314.0 490.5,313.1 488.7,312.0 486.7,311.0 484.7,309.8 482.8,308.7 480.8,307.6 479.0,306.5 477.3,305.5 475.5,304.4 473.8,303.3 472.1,302.2 470.3,301.1 468.5,299.9 466.7,298.7 464.8,297.6 462.8,296.4 460.8,295.1 458.8,293.9 456.6,292.7 454.4,291.4 452.1,290.1 449.9,288.8 447.5,287.5 445.2,286.2 442.8,285.0 440.5,283.7 438.1,282.4 435.7,281.3 433.2,280.1 430.7,278.9 428.2,277.7 425.6,276.6 423.1,275.5 420.7,274.3 418.2,273.2 415.9,272.2 413.7,271.1 411.5,270.0 409.3,269.0 407.1,268.0 405.0,267.1 403.0,266.1 401.0,265.2 399.2,264.2 397.5,263.3 395.9,262.3 394.5,261.3 393.3,260.3 392.2,259.3 391.3,258.2 390.4,257.2 389.6,256.0 388.9,254.9 388.3,253.8 387.6,252.7 387.0,251.6 386.3,250.6 385.7,249.6 385.1,248.6 384.5,247.6 384.0,246.7 383.5,245.7 383.1,244.8 382.7,244.0 382.4,243.2 382.0,242.6 381.8,242.1" fill="#f1f3ea"/>
<polygon points="496.7,318.0 497.3,317.6 498.1,317.1 499.0,316.5 500.1,315.8 501.2,315.1 502.3,314.3 503.5,313.5 504.8,312.7 506.0,312.0 507.1,311.3 508.3,310.6 509.6,310.0 510.9,309.3 512.3,308.7 513.7,308.0 515.1,307.3 516.5,306.6 517.9,305.8 519.2,305.0 520.5,304.2 521.6,303.3 522.7,302.5 523.8,301.6 524.8,300.7 525.8,299.8 526.7,298.8 527.6,297.8 528.5,296.7 529.2,295.6 529.9,294.4 530.5,293.2 531.0,291.9 531.3,290.6 531.7,289.3 531.9,288.0 532.0,286.7 532.1,285.4 532.1,284.1 532.0,282.7 531.9,281.4 531.6,280.1 531.2,278.8 530.7,277.6 530.2,276.5 529.6,275.4 529.0,274.3 528.4,273.2 527.7,272.0 527.0,270.8 526.3,269.4 525.4,267.9 524.5,266.2 523.5,264.4 522.5,262.5 521.4,260.6 520.3,258.7 519.2,256.8 518.1,254.8 517.0,252.9 515.9,251.1 514.8,249.2 513.7,247.1 512.5,245.0 511.2,242.9 510.0,240.8 508.9,238.8 507.8,236.9 506.9,235.3 506.0,233.9 505.4,232.8 501.0,235.2 501.6,236.3 502.3,237.8 503.2,239.5 504.1,241.4 505.2,243.4 506.3,245.6 507.5,247.7 508.6,249.9 509.7,252.0 510.7,253.9 511.7,255.8 512.7,257.8 513.8,259.8 514.9,261.7 515.9,263.7 517.0,265.6 518.0,267.4 518.9,269.2 519.7,270.9 520.5,272.4 521.2,273.8 521.9,275.2 522.6,276.4 523.1,277.4 523.6,278.4 524.0,279.3 524.3,280.2 524.6,281.0 524.8,281.7 524.9,282.6 525.1,283.5 525.2,284.4 525.2,285.4 525.2,286.3 525.2,287.2 525.1,288.1 524.9,289.1 524.7,289.9 524.4,290.8 524.1,291.6 523.7,292.4 523.3,293.2 522.7,294.0 522.1,294.8 521.4,295.7 520.7,296.5 519.9,297.3 519.0,298.2 518.1,299.0 517.1,299.8 516.2,300.6 515.1,301.4 513.9,302.2 512.7,302.9 511.4,303.7 510.0,304.5 508.7,305.3 507.4,306.1 506.1,306.9 504.9,307.7 503.7,308.6 502.5,309.5 501.3,310.4 500.2,311.3 499.0,312.2 498.0,313.0 497.0,313.8 496.2,314.5 495.5,315.1 494.9,315.6" fill="#bfc5b3"/><polygon points="496.5,317.7 497.1,317.3 498.0,316.9 498.9,316.3 499.9,315.6 501.0,314.9 502.2,314.1 503.4,313.3 504.6,312.5 505.8,311.7 507.0,311.0 508.1,310.4 509.4,309.7 510.7,309.0 512.1,308.4 513.5,307.7 514.9,307.0 516.3,306.3 517.7,305.5 519.0,304.7 520.2,303.9 521.4,303.0 522.4,302.2 523.5,301.3 524.5,300.4 525.5,299.5 526.4,298.5 527.3,297.5 528.1,296.5 528.9,295.4 529.5,294.2 530.1,293.0 530.5,291.8 530.9,290.5 531.2,289.3 531.4,288.0 531.5,286.7 531.6,285.4 531.6,284.1 531.5,282.8 531.4,281.5 531.1,280.2 530.7,279.0 530.3,277.8 529.8,276.7 529.2,275.6 528.6,274.5 528.0,273.4 527.3,272.2 526.6,271.0 525.9,269.6 525.0,268.1 524.1,266.4 523.1,264.6 522.1,262.8 521.0,260.9 519.9,258.9 518.8,257.0 517.7,255.0 516.6,253.1 515.6,251.3 514.5,249.4 513.3,247.3 512.1,245.2 510.9,243.1 509.7,241.0 508.6,239.0 507.5,237.1 506.5,235.4 505.7,234.1 505.1,233.0 501.7,234.8 502.2,236.0 503.0,237.4 503.9,239.1 504.9,241.0 505.9,243.0 507.1,245.2 508.2,247.3 509.3,249.5 510.4,251.6 511.5,253.5 512.5,255.4 513.5,257.3 514.6,259.3 515.7,261.3 516.8,263.2 517.8,265.1 518.8,267.0 519.7,268.8 520.6,270.4 521.4,272.0 522.1,273.4 522.8,274.7 523.4,275.9 524.0,277.0 524.5,278.0 524.9,278.9 525.3,279.8 525.6,280.6 525.8,281.5 526.0,282.4 526.1,283.4 526.2,284.4 526.3,285.4 526.3,286.4 526.2,287.3 526.0,288.3 525.9,289.3 525.6,290.2 525.3,291.1 525.0,292.0 524.5,292.9 524.0,293.7 523.5,294.6 522.8,295.4 522.1,296.3 521.3,297.1 520.4,298.0 519.5,298.8 518.6,299.7 517.6,300.5 516.6,301.3 515.5,302.0 514.3,302.8 513.0,303.6 511.7,304.4 510.4,305.1 509.0,305.9 507.7,306.7 506.4,307.5 505.2,308.3 504.0,309.1 502.8,310.0 501.6,310.8 500.5,311.7 499.4,312.6 498.3,313.4 497.3,314.2 496.5,314.9 495.8,315.6 495.3,316.0" fill="#dde1d3"/><polygon points="496.3,317.4 496.9,317.0 497.7,316.6 498.6,315.9 499.6,315.2 500.7,314.5 501.9,313.7 503.1,312.8 504.3,312.0 505.5,311.3 506.7,310.5 507.8,309.8 509.1,309.2 510.4,308.5 511.8,307.8 513.2,307.1 514.6,306.4 516.0,305.6 517.3,304.9 518.6,304.1 519.8,303.3 520.9,302.4 521.9,301.6 522.9,300.7 523.9,299.8 524.9,298.9 525.8,298.0 526.6,297.0 527.4,296.0 528.1,294.9 528.7,293.8 529.2,292.7 529.6,291.5 530.0,290.3 530.3,289.1 530.5,287.9 530.6,286.6 530.7,285.4 530.6,284.1 530.6,282.9 530.4,281.7 530.1,280.5 529.8,279.3 529.4,278.2 528.9,277.1 528.4,276.0 527.8,275.0 527.2,273.8 526.5,272.7 525.8,271.4 525.1,270.0 524.3,268.5 523.3,266.8 522.4,265.0 521.3,263.2 520.3,261.3 519.2,259.3 518.0,257.4 516.9,255.4 515.9,253.5 514.8,251.7 513.7,249.7 512.6,247.7 511.4,245.6 510.2,243.4 509.0,241.3 507.9,239.3 506.8,237.5 505.9,235.8 505.1,234.4 504.5,233.3 502.3,234.5 502.9,235.6 503.6,237.0 504.5,238.7 505.5,240.6 506.6,242.7 507.7,244.8 508.9,246.9 510.0,249.1 511.2,251.2 512.2,253.1 513.2,255.0 514.3,256.9 515.4,258.9 516.4,260.9 517.5,262.8 518.6,264.7 519.6,266.6 520.5,268.3 521.4,270.0 522.2,271.5 522.9,273.0 523.6,274.3 524.3,275.4 524.8,276.5 525.4,277.6 525.8,278.5 526.2,279.4 526.5,280.3 526.8,281.3 527.0,282.2 527.1,283.3 527.2,284.3 527.2,285.4 527.2,286.4 527.1,287.5 527.0,288.5 526.8,289.5 526.5,290.5 526.2,291.5 525.8,292.4 525.3,293.3 524.8,294.2 524.2,295.1 523.5,296.0 522.7,296.9 521.9,297.7 521.0,298.6 520.1,299.4 519.1,300.3 518.1,301.1 517.1,301.9 515.9,302.7 514.7,303.4 513.4,304.2 512.0,305.0 510.7,305.7 509.3,306.5 508.0,307.2 506.7,308.0 505.5,308.8 504.4,309.6 503.2,310.4 502.0,311.3 500.8,312.2 499.7,313.0 498.6,313.8 497.6,314.6 496.7,315.3 496.1,315.9 495.5,316.4" fill="#f1f3ea"/>
<polygon points="506.0,235.6 506.1,235.1 506.4,234.4 506.6,233.6 506.9,232.7 507.2,231.8 507.6,230.8 507.9,229.7 508.2,228.7 508.6,227.8 508.8,226.9 509.1,226.1 509.4,225.4 509.7,224.6 510.0,223.9 510.2,223.1 510.5,222.3 510.8,221.4 511.1,220.5 511.3,219.5 511.5,218.4 511.6,217.2 511.6,215.9 511.7,214.5 511.7,213.1 511.6,211.6 511.6,210.2 511.6,208.9 511.5,207.8 511.5,206.8 511.4,206.1 509.4,205.9 509.2,206.7 509.0,207.6 508.8,208.8 508.6,210.0 508.4,211.4 508.2,212.8 507.9,214.1 507.7,215.4 507.4,216.6 507.1,217.6 506.9,218.4 506.6,219.2 506.4,220.0 506.1,220.7 505.8,221.3 505.5,222.0 505.2,222.8 504.9,223.5 504.5,224.3 504.2,225.1 503.8,226.0 503.4,226.9 503.0,227.8 502.5,228.8 502.1,229.7 501.7,230.7 501.3,231.5 501.0,232.3 500.7,232.9 500.4,233.4" fill="#bfc5b3"/><polygon points="505.6,235.4 505.8,234.9 506.0,234.3 506.2,233.5 506.5,232.6 506.9,231.6 507.2,230.6 507.6,229.6 507.9,228.6 508.2,227.6 508.5,226.8 508.8,226.0 509.1,225.2 509.4,224.5 509.6,223.7 509.9,223.0 510.2,222.2 510.5,221.3 510.8,220.4 511.0,219.4 511.2,218.4 511.3,217.2 511.4,215.9 511.4,214.5 511.4,213.0 511.4,211.6 511.3,210.2 511.3,208.9 511.3,207.8 511.2,206.8 511.2,206.1 509.8,206.0 509.6,206.7 509.5,207.6 509.4,208.8 509.2,210.1 508.9,211.4 508.7,212.8 508.5,214.2 508.3,215.5 508.0,216.7 507.8,217.7 507.5,218.6 507.3,219.4 507.1,220.2 506.8,220.9 506.5,221.6 506.2,222.3 505.9,223.0 505.5,223.8 505.2,224.6 504.9,225.4 504.5,226.2 504.1,227.2 503.7,228.1 503.3,229.1 502.9,230.0 502.5,231.0 502.1,231.8 501.8,232.6 501.5,233.2 501.2,233.7" fill="#dde1d3"/><polygon points="504.8,235.1 505.0,234.6 505.2,234.0 505.5,233.2 505.8,232.3 506.2,231.3 506.5,230.3 506.9,229.3 507.2,228.3 507.6,227.4 507.9,226.5 508.1,225.7 508.4,225.0 508.7,224.2 509.0,223.5 509.3,222.7 509.6,221.9 509.9,221.1 510.1,220.2 510.4,219.3 510.6,218.2 510.7,217.1 510.8,215.8 510.9,214.4 510.9,213.0 511.0,211.6 510.9,210.2 510.9,208.9 510.9,207.7 510.9,206.8 510.9,206.0 510.0,206.0 509.9,206.7 509.8,207.7 509.7,208.8 509.6,210.1 509.3,211.4 509.2,212.9 509.0,214.2 508.8,215.6 508.6,216.8 508.4,217.8 508.2,218.7 507.9,219.6 507.7,220.4 507.4,221.1 507.1,221.9 506.8,222.6 506.5,223.3 506.2,224.0 505.8,224.8 505.5,225.6 505.2,226.5 504.8,227.4 504.4,228.4 504.0,229.4 503.6,230.3 503.2,231.3 502.8,232.1 502.5,232.9 502.2,233.5 502.0,234.0" fill="#f1f3ea"/>
<polygon points="431.7,286.7 431.4,287.1 431.0,287.6 430.4,288.4 429.7,289.4 429.0,290.6 428.2,291.9 427.4,293.4 426.6,295.0 425.9,296.8 425.4,298.7 425.1,300.5 424.9,302.4 424.8,304.3 424.7,306.1 424.7,308.0 424.7,309.9 424.7,311.8 424.8,313.6 424.8,315.4 424.9,317.1 424.9,318.9 424.9,320.7 424.9,322.6 424.9,324.6 425.0,326.5 425.0,328.4 425.1,330.3 425.2,332.2 425.4,334.0 425.6,335.8 425.8,337.5 426.0,339.2 426.3,340.8 426.6,342.3 426.9,343.8 427.2,345.3 427.6,346.7 428.0,348.2 428.4,349.6 428.8,351.0 429.3,352.5 429.9,354.0 430.4,355.5 431.0,356.9 431.6,358.2 432.2,359.6 432.7,360.8 433.2,362.0 433.7,363.2 434.2,364.3 434.6,365.5 435.1,366.8 435.6,368.2 436.1,369.5 436.5,370.9 437.0,372.2 437.4,373.3 437.7,374.4 438.1,375.3 438.3,376.0 450.7,372.0 450.5,371.3 450.2,370.4 449.9,369.3 449.5,368.1 449.1,366.8 448.7,365.4 448.2,363.9 447.8,362.5 447.3,361.1 446.8,359.7 446.4,358.3 445.8,356.9 445.3,355.6 444.8,354.3 444.3,353.0 443.8,351.7 443.3,350.5 442.9,349.3 442.5,348.2 442.2,347.0 441.8,345.7 441.5,344.5 441.2,343.3 440.9,342.0 440.6,340.8 440.3,339.6 440.1,338.3 439.8,337.0 439.6,335.6 439.4,334.2 439.3,332.7 439.1,331.1 438.9,329.4 438.8,327.7 438.7,325.9 438.6,324.1 438.5,322.3 438.5,320.5 438.4,318.7 438.3,316.9 438.3,315.1 438.3,313.3 438.2,311.5 438.2,309.7 438.2,308.0 438.2,306.4 438.2,304.9 438.3,303.5 438.5,302.3 438.6,301.3 438.7,300.5 439.0,299.7 439.3,298.7 439.6,297.8 440.1,296.8 440.6,295.9 441.0,294.9 441.5,294.0 442.0,293.1 442.3,292.3" fill="#bfc5b3"/><polygon points="432.4,287.1 432.1,287.5 431.7,288.1 431.2,288.9 430.5,289.9 429.7,291.0 429.0,292.3 428.2,293.7 427.5,295.3 426.8,297.0 426.3,298.8 426.0,300.7 425.8,302.5 425.7,304.3 425.6,306.2 425.6,308.0 425.6,309.9 425.7,311.7 425.7,313.6 425.8,315.4 425.8,317.1 425.8,318.9 425.8,320.7 425.8,322.6 425.9,324.5 425.9,326.4 426.0,328.4 426.1,330.3 426.2,332.1 426.4,334.0 426.5,335.7 426.7,337.4 427.0,339.0 427.3,340.6 427.6,342.1 427.9,343.6 428.2,345.1 428.6,346.5 428.9,347.9 429.3,349.3 429.7,350.7 430.2,352.2 430.8,353.7 431.3,355.1 431.9,356.5 432.5,357.9 433.0,359.2 433.6,360.4 434.1,361.7 434.6,362.8 435.0,364.0 435.5,365.2 436.0,366.5 436.5,367.9 436.9,369.2 437.4,370.6 437.8,371.9 438.2,373.1 438.6,374.1 438.9,375.0 439.2,375.7 448.8,372.6 448.6,371.9 448.3,371.0 448.0,369.9 447.6,368.7 447.2,367.4 446.8,366.0 446.3,364.6 445.9,363.1 445.4,361.7 444.9,360.4 444.5,359.0 443.9,357.7 443.4,356.4 442.9,355.1 442.4,353.8 441.9,352.5 441.4,351.3 441.0,350.0 440.6,348.8 440.2,347.6 439.8,346.3 439.5,345.0 439.1,343.8 438.8,342.5 438.5,341.3 438.3,340.0 438.0,338.7 437.8,337.3 437.6,335.9 437.4,334.4 437.2,332.9 437.0,331.2 436.9,329.5 436.7,327.8 436.6,326.0 436.6,324.2 436.5,322.3 436.4,320.5 436.4,318.7 436.3,316.9 436.3,315.1 436.2,313.3 436.2,311.5 436.2,309.8 436.2,308.0 436.2,306.4 436.2,304.8 436.3,303.4 436.5,302.1 436.6,300.9 436.8,300.0 437.1,299.0 437.5,297.9 437.9,296.9 438.4,295.9 438.9,294.9 439.4,293.9 439.9,293.1 440.4,292.2 440.7,291.5" fill="#dde1d3"/><polygon points="433.9,287.9 433.6,288.4 433.2,289.0 432.6,289.8 432.0,290.8 431.3,291.9 430.6,293.1 429.9,294.5 429.2,296.0 428.6,297.6 428.2,299.2 427.9,300.9 427.7,302.6 427.6,304.4 427.5,306.2 427.5,308.0 427.5,309.9 427.6,311.7 427.6,313.5 427.7,315.3 427.7,317.1 427.7,318.8 427.7,320.7 427.8,322.6 427.8,324.5 427.9,326.4 427.9,328.3 428.0,330.1 428.1,332.0 428.3,333.8 428.5,335.5 428.7,337.1 428.9,338.7 429.2,340.2 429.5,341.7 429.8,343.2 430.1,344.6 430.5,346.0 430.8,347.4 431.2,348.8 431.6,350.2 432.1,351.6 432.6,353.0 433.1,354.4 433.7,355.8 434.3,357.1 434.8,358.4 435.4,359.7 435.9,361.0 436.4,362.2 436.8,363.3 437.3,364.6 437.8,365.9 438.2,367.3 438.7,368.7 439.2,370.0 439.6,371.3 440.0,372.5 440.4,373.6 440.7,374.5 440.9,375.2 447.1,373.1 446.9,372.4 446.6,371.5 446.3,370.5 445.9,369.3 445.5,367.9 445.0,366.6 444.6,365.2 444.1,363.7 443.6,362.4 443.2,361.0 442.7,359.7 442.2,358.4 441.7,357.1 441.1,355.8 440.6,354.5 440.1,353.2 439.6,352.0 439.1,350.7 438.7,349.4 438.3,348.1 437.9,346.9 437.6,345.6 437.2,344.3 436.9,343.0 436.6,341.7 436.3,340.4 436.1,339.0 435.8,337.6 435.6,336.2 435.4,334.6 435.2,333.1 435.1,331.4 434.9,329.7 434.8,327.9 434.7,326.1 434.6,324.2 434.6,322.4 434.5,320.5 434.5,318.7 434.4,317.0 434.4,315.2 434.4,313.4 434.3,311.6 434.3,309.8 434.3,308.0 434.3,306.3 434.3,304.7 434.4,303.2 434.6,301.8 434.8,300.6 435.0,299.4 435.4,298.3 435.8,297.2 436.3,296.1 436.9,295.0 437.4,294.0 438.0,293.0 438.5,292.2 438.9,291.4 439.2,290.7" fill="#f1f3ea"/>
<polygon points="458.0,432.1 458.4,433.1 459.0,434.4 459.6,436.0 460.3,437.8 461.0,439.7 461.8,441.7 462.6,443.7 463.4,445.7 464.1,447.7 464.9,449.6 465.6,451.3 466.3,453.1 467.0,454.9 467.7,456.7 468.4,458.5 469.1,460.3 469.8,462.1 470.6,463.9 471.3,465.7 472.0,467.5 472.7,469.4 473.5,471.2 474.2,473.1 475.0,475.0 475.7,476.9 476.5,478.8 477.2,480.6 477.9,482.4 478.6,484.0 479.2,485.5 479.9,486.9 480.6,488.3 481.3,489.5 482.0,490.7 482.6,491.8 483.2,492.8 483.7,493.7 484.2,494.5 484.6,495.2 485.0,495.7 495.0,491.3 494.9,490.7 494.7,489.9 494.4,489.0 494.1,488.0 493.8,486.9 493.4,485.8 493.0,484.5 492.6,483.2 492.2,481.9 491.8,480.5 491.2,479.0 490.6,477.4 489.9,475.7 489.3,473.9 488.6,472.0 487.9,470.1 487.1,468.1 486.4,466.2 485.7,464.3 485.0,462.5 484.3,460.7 483.6,458.8 482.9,457.0 482.2,455.2 481.6,453.4 480.9,451.6 480.2,449.8 479.5,448.0 478.8,446.2 478.1,444.4 477.4,442.6 476.7,440.6 475.9,438.6 475.2,436.6 474.4,434.6 473.7,432.7 473.0,430.9 472.5,429.3 472.0,428.0 471.6,426.9" fill="#bfc5b3"/><polygon points="459.0,431.7 459.4,432.8 459.9,434.1 460.5,435.7 461.2,437.4 461.9,439.3 462.7,441.3 463.5,443.4 464.3,445.4 465.1,447.3 465.8,449.2 466.5,451.0 467.2,452.8 467.9,454.6 468.6,456.4 469.3,458.2 470.0,460.0 470.8,461.8 471.5,463.6 472.2,465.4 472.9,467.2 473.6,469.0 474.4,470.9 475.1,472.8 475.9,474.7 476.6,476.6 477.4,478.5 478.1,480.3 478.8,482.0 479.5,483.7 480.1,485.2 480.8,486.6 481.5,487.9 482.1,489.2 482.8,490.4 483.4,491.5 483.9,492.5 484.4,493.4 484.9,494.2 485.3,494.8 485.7,495.4 493.5,492.0 493.4,491.3 493.1,490.6 492.8,489.7 492.5,488.7 492.1,487.7 491.7,486.5 491.3,485.3 490.8,484.0 490.4,482.6 489.9,481.2 489.3,479.8 488.7,478.1 488.0,476.4 487.4,474.6 486.6,472.7 485.9,470.8 485.2,468.9 484.5,467.0 483.8,465.1 483.1,463.2 482.4,461.4 481.7,459.6 481.0,457.8 480.3,456.0 479.6,454.2 478.9,452.4 478.2,450.6 477.5,448.8 476.8,447.0 476.1,445.2 475.4,443.4 474.7,441.4 473.9,439.4 473.2,437.3 472.4,435.3 471.7,433.4 471.0,431.6 470.4,430.1 469.9,428.7 469.5,427.7" fill="#dde1d3"/><polygon points="460.9,431.0 461.3,432.0 461.8,433.4 462.4,434.9 463.1,436.7 463.8,438.6 464.6,440.6 465.4,442.6 466.2,444.7 466.9,446.6 467.7,448.5 468.4,450.3 469.1,452.1 469.8,453.8 470.5,455.6 471.2,457.5 471.9,459.3 472.6,461.1 473.3,462.9 474.0,464.7 474.7,466.5 475.4,468.3 476.2,470.2 476.9,472.1 477.7,474.0 478.4,475.9 479.2,477.8 479.9,479.6 480.6,481.3 481.2,483.0 481.9,484.5 482.5,485.9 483.2,487.2 483.8,488.5 484.4,489.7 484.9,490.8 485.5,491.8 485.9,492.7 486.4,493.5 486.8,494.2 487.1,494.8 492.1,492.6 491.9,492.0 491.6,491.2 491.3,490.4 491.0,489.4 490.5,488.3 490.1,487.2 489.6,486.0 489.1,484.7 488.6,483.3 488.1,481.9 487.5,480.5 486.9,478.8 486.3,477.1 485.6,475.3 484.8,473.4 484.1,471.5 483.4,469.6 482.7,467.7 481.9,465.8 481.2,463.9 480.5,462.1 479.8,460.3 479.1,458.5 478.4,456.7 477.7,454.9 477.0,453.1 476.3,451.3 475.7,449.5 475.0,447.7 474.3,445.9 473.6,444.1 472.8,442.1 472.1,440.1 471.3,438.0 470.5,436.0 469.8,434.1 469.1,432.4 468.5,430.8 468.0,429.5 467.6,428.4" fill="#f1f3ea"/>
<polygon points="496.9,513.1 497.2,514.0 497.6,515.2 498.1,516.4 498.7,517.7 499.3,519.1 499.9,520.5 500.5,521.9 501.1,523.3 501.5,524.6 501.7,525.9 502.2,527.2 502.7,528.6 503.3,530.0 503.8,531.5 504.3,533.1 504.8,534.7 505.2,536.3 505.7,538.0 506.0,539.6 506.3,541.1 506.8,542.6 507.2,544.1 507.6,545.7 507.9,547.4 508.3,549.1 508.6,550.8 508.9,552.6 509.1,554.3 509.4,556.0 509.6,557.7 510.0,559.2 510.4,560.7 510.8,562.2 511.1,563.7 511.4,565.2 511.7,566.7 512.0,568.2 512.3,569.7 512.5,571.3 512.8,572.8 513.4,574.2 513.9,575.7 514.4,577.2 514.9,578.6 515.4,580.1 515.9,581.5 516.5,582.9 517.0,584.2 517.5,585.5 518.0,586.6 518.5,587.6 519.0,588.6 519.5,589.4 520.0,590.1 520.4,590.7 520.9,591.2 521.4,591.6 521.8,592.0 522.2,592.2 522.6,592.4 525.4,591.6 525.6,591.2 525.8,590.7 525.9,590.1 526.1,589.6 526.2,589.0 526.3,588.4 526.5,587.7 526.6,587.0 526.8,586.3 527.0,585.4 527.2,584.4 527.5,583.2 527.8,582.0 528.1,580.6 528.4,579.1 528.7,577.6 529.0,576.0 529.2,574.4 529.5,572.8 529.8,571.2 529.8,569.7 529.8,568.2 529.8,566.6 529.8,565.0 529.8,563.3 529.8,561.6 529.7,559.9 529.6,558.0 529.5,556.2 529.4,554.3 529.0,552.5 528.6,550.7 528.2,548.8 527.8,546.9 527.3,544.9 526.8,542.9 526.2,540.9 525.6,538.9 525.0,536.8 524.3,534.9 523.3,533.0 522.3,531.2 521.3,529.4 520.2,527.6 519.1,525.9 518.0,524.2 516.9,522.6 515.7,521.0 514.5,519.5 513.3,518.1 511.7,516.8 510.0,515.6 508.4,514.6 506.8,513.7 505.2,512.9 503.7,512.3 502.3,511.8 501.1,511.4 500.0,511.1 499.1,510.9" fill="#bfc5b3"/><polygon points="497.2,512.8 497.4,513.8 497.8,514.9 498.4,516.1 499.0,517.3 499.7,518.6 500.4,520.0 501.1,521.4 501.7,522.7 502.2,524.1 502.5,525.4 503.1,526.6 503.6,528.0 504.2,529.5 504.8,531.0 505.4,532.6 505.9,534.2 506.4,535.9 506.8,537.5 507.2,539.1 507.6,540.7 508.0,542.2 508.5,543.8 508.9,545.4 509.2,547.1 509.6,548.8 509.9,550.5 510.2,552.3 510.5,554.0 510.8,555.8 511.0,557.5 511.4,559.0 511.8,560.5 512.1,562.0 512.4,563.5 512.7,565.0 512.9,566.6 513.2,568.1 513.5,569.6 513.7,571.2 514.0,572.7 514.5,574.1 515.0,575.6 515.4,577.1 515.9,578.6 516.3,580.0 516.8,581.5 517.3,582.9 517.7,584.2 518.2,585.4 518.7,586.5 519.1,587.6 519.5,588.5 520.0,589.3 520.4,590.0 520.9,590.6 521.3,591.1 521.7,591.5 522.1,591.9 522.4,592.1 522.9,592.3 524.9,591.7 525.1,591.3 525.2,590.9 525.2,590.4 525.3,589.8 525.3,589.3 525.4,588.7 525.4,588.0 525.5,587.3 525.5,586.5 525.6,585.6 525.8,584.6 525.9,583.4 526.1,582.1 526.3,580.7 526.5,579.3 526.6,577.8 526.8,576.2 526.9,574.6 527.1,573.0 527.2,571.4 527.2,569.9 527.2,568.4 527.1,566.9 527.1,565.3 527.0,563.6 527.0,561.9 526.9,560.2 526.8,558.4 526.6,556.6 526.4,554.8 526.0,553.0 525.7,551.2 525.3,549.4 524.9,547.5 524.4,545.5 524.0,543.6 523.4,541.6 522.9,539.7 522.3,537.7 521.6,535.8 520.7,534.0 519.8,532.2 518.9,530.4 517.9,528.7 516.9,527.0 515.9,525.3 514.8,523.7 513.8,522.1 512.7,520.7 511.6,519.2 510.2,518.0 508.7,516.8 507.2,515.7 505.8,514.7 504.3,513.9 503.0,513.1 501.7,512.5 500.6,511.9 499.6,511.5 498.7,511.3" fill="#dde1d3"/><polygon points="497.4,512.6 497.8,513.4 498.3,514.4 499.0,515.4 499.7,516.6 500.5,517.8 501.4,519.0 502.2,520.4 503.0,521.7 503.6,523.0 504.1,524.3 504.8,525.6 505.5,527.0 506.1,528.5 506.8,530.0 507.4,531.6 508.0,533.2 508.6,534.9 509.2,536.5 509.7,538.2 510.1,539.8 510.6,541.4 511.1,543.0 511.5,544.7 511.9,546.5 512.3,548.2 512.6,550.0 512.9,551.8 513.2,553.5 513.5,555.3 513.8,557.0 514.1,558.6 514.4,560.1 514.7,561.7 515.0,563.2 515.2,564.8 515.5,566.3 515.7,567.9 515.9,569.4 516.2,571.0 516.4,572.5 516.8,573.9 517.1,575.4 517.5,576.9 517.8,578.4 518.2,579.9 518.5,581.3 518.8,582.7 519.2,584.0 519.5,585.2 519.9,586.4 520.2,587.4 520.6,588.3 520.9,589.1 521.3,589.8 521.7,590.4 522.0,590.9 522.3,591.3 522.6,591.7 522.9,592.0 523.2,592.2 524.5,591.8 524.6,591.5 524.6,591.0 524.6,590.6 524.6,590.1 524.5,589.5 524.5,588.9 524.4,588.2 524.4,587.5 524.4,586.7 524.4,585.7 524.4,584.7 524.5,583.5 524.5,582.3 524.6,580.9 524.6,579.4 524.7,577.9 524.8,576.4 524.8,574.8 524.8,573.2 524.9,571.7 524.8,570.2 524.7,568.6 524.6,567.1 524.5,565.5 524.5,563.9 524.3,562.2 524.2,560.5 524.1,558.8 523.9,557.1 523.6,555.3 523.3,553.5 523.0,551.7 522.6,549.9 522.2,548.0 521.8,546.1 521.3,544.2 520.8,542.3 520.3,540.4 519.7,538.5 519.1,536.7 518.3,534.9 517.5,533.2 516.7,531.4 515.8,529.7 514.8,528.0 513.9,526.3 512.9,524.7 511.9,523.2 511.0,521.7 509.9,520.3 508.7,519.1 507.4,517.8 506.1,516.7 504.8,515.7 503.5,514.7 502.3,513.9 501.1,513.1 500.1,512.5 499.2,511.9 498.4,511.6" fill="#f1f3ea"/>
<polygon points="263.7,451.3 263.9,451.8 264.2,452.5 264.5,453.2 264.9,454.0 265.3,454.9 265.8,455.8 266.3,456.8 266.8,457.9 267.4,459.0 267.9,460.1 268.6,461.2 269.4,462.4 270.2,463.6 271.1,465.0 271.9,466.3 272.8,467.7 273.7,469.1 274.5,470.5 275.4,471.8 276.2,473.1 277.0,474.4 277.9,475.7 278.7,477.1 279.6,478.4 280.5,479.8 281.3,481.1 282.1,482.3 282.8,483.3 283.4,484.2 283.8,484.9 293.2,479.1 292.8,478.4 292.2,477.5 291.6,476.4 290.8,475.2 290.1,473.8 289.2,472.5 288.4,471.0 287.5,469.6 286.7,468.2 285.8,466.9 285.0,465.6 284.1,464.3 283.2,462.9 282.3,461.5 281.3,460.2 280.4,458.8 279.5,457.5 278.7,456.2 277.8,455.0 277.1,453.9 276.2,453.0 275.4,452.0 274.6,451.1 273.9,450.3 273.1,449.5 272.4,448.8 271.8,448.1 271.2,447.5 270.7,447.1 270.3,446.7" fill="#bfc5b3"/><polygon points="264.2,451.0 264.4,451.5 264.7,452.1 265.0,452.8 265.4,453.6 265.9,454.5 266.4,455.4 266.9,456.4 267.4,457.5 268.0,458.5 268.6,459.6 269.3,460.7 270.0,461.9 270.9,463.2 271.7,464.5 272.6,465.9 273.5,467.3 274.3,468.7 275.2,470.0 276.0,471.4 276.8,472.7 277.7,473.9 278.5,475.3 279.4,476.6 280.3,478.0 281.2,479.4 282.0,480.7 282.8,481.8 283.4,482.9 284.0,483.8 284.5,484.5 291.8,480.0 291.3,479.2 290.8,478.3 290.1,477.3 289.4,476.0 288.6,474.7 287.8,473.4 286.9,471.9 286.1,470.5 285.2,469.1 284.4,467.8 283.5,466.5 282.7,465.2 281.8,463.9 280.8,462.5 279.9,461.1 279.0,459.7 278.1,458.4 277.3,457.2 276.5,456.0 275.7,454.9 274.9,453.9 274.1,452.9 273.4,452.0 272.6,451.1 272.0,450.3 271.3,449.5 270.7,448.9 270.2,448.3 269.7,447.8 269.3,447.4" fill="#dde1d3"/><polygon points="265.1,450.3 265.3,450.8 265.7,451.4 266.0,452.1 266.5,452.9 267.0,453.8 267.5,454.7 268.0,455.6 268.6,456.6 269.2,457.7 269.8,458.8 270.6,459.9 271.3,461.1 272.2,462.3 273.0,463.7 273.9,465.0 274.8,466.4 275.7,467.8 276.5,469.2 277.4,470.5 278.2,471.8 279.0,473.1 279.9,474.4 280.8,475.8 281.7,477.2 282.5,478.5 283.3,479.8 284.1,481.0 284.8,482.1 285.3,483.0 285.8,483.7 290.5,480.8 290.0,480.1 289.5,479.2 288.8,478.1 288.1,476.9 287.3,475.6 286.4,474.2 285.6,472.8 284.7,471.4 283.9,470.0 283.0,468.7 282.2,467.4 281.3,466.1 280.4,464.7 279.5,463.3 278.6,462.0 277.7,460.6 276.8,459.3 276.0,458.0 275.2,456.8 274.4,455.7 273.7,454.7 272.9,453.7 272.2,452.8 271.5,451.9 270.9,451.1 270.2,450.3 269.7,449.6 269.2,449.0 268.7,448.5 268.4,448.0" fill="#f1f3ea"/>
<polygon points="291.7,520.2 292.1,521.0 292.6,522.1 293.1,523.3 293.7,524.7 294.4,526.1 295.1,527.7 295.8,529.3 296.6,531.0 297.3,532.7 298.0,534.3 298.7,535.9 299.5,537.6 300.3,539.3 301.1,541.1 301.9,542.9 302.7,544.7 303.5,546.5 304.3,548.4 305.1,550.2 305.9,552.1 306.7,554.0 307.5,556.0 308.3,558.0 309.1,560.1 309.9,562.2 310.7,564.2 311.5,566.3 312.3,568.3 313.0,570.3 313.7,572.3 314.4,574.2 315.2,576.3 315.9,578.4 316.6,580.5 317.3,582.6 318.0,584.6 318.6,586.5 319.1,588.1 319.6,589.5 320.0,590.6 330.0,587.4 329.7,586.3 329.3,584.9 328.8,583.2 328.2,581.4 327.6,579.3 326.9,577.2 326.2,575.0 325.5,572.8 324.8,570.6 324.1,568.5 323.3,566.5 322.6,564.5 321.8,562.4 321.0,560.3 320.2,558.2 319.4,556.1 318.5,554.0 317.7,551.9 316.9,549.9 316.1,547.9 315.3,545.9 314.4,544.0 313.6,542.1 312.8,540.2 311.9,538.3 311.1,536.5 310.3,534.7 309.5,533.0 308.7,531.3 308.0,529.7 307.2,528.1 306.4,526.4 305.7,524.8 304.9,523.2 304.1,521.6 303.4,520.1 302.7,518.8 302.2,517.6 301.7,516.6 301.3,515.8" fill="#bfc5b3"/><polygon points="292.4,519.9 292.8,520.7 293.2,521.8 293.8,523.0 294.4,524.4 295.1,525.8 295.8,527.4 296.5,529.0 297.2,530.7 298.0,532.3 298.7,534.0 299.4,535.6 300.2,537.3 301.0,539.0 301.8,540.8 302.6,542.5 303.4,544.4 304.2,546.2 305.0,548.1 305.8,549.9 306.6,551.8 307.4,553.7 308.2,555.7 309.0,557.7 309.9,559.8 310.7,561.9 311.5,563.9 312.2,566.0 313.0,568.0 313.7,570.0 314.4,572.0 315.2,574.0 315.9,576.0 316.6,578.2 317.3,580.3 318.0,582.4 318.7,584.4 319.3,586.2 319.9,587.9 320.3,589.3 320.7,590.4 328.5,587.9 328.2,586.8 327.7,585.4 327.2,583.7 326.7,581.8 326.0,579.8 325.4,577.7 324.7,575.5 323.9,573.3 323.2,571.2 322.5,569.1 321.8,567.1 321.0,565.1 320.3,563.0 319.5,560.9 318.7,558.8 317.8,556.7 317.0,554.6 316.2,552.5 315.4,550.5 314.6,548.5 313.7,546.6 312.9,544.7 312.1,542.7 311.3,540.9 310.4,539.0 309.6,537.2 308.8,535.4 308.0,533.7 307.2,532.0 306.5,530.4 305.7,528.8 305.0,527.1 304.2,525.5 303.4,523.8 302.7,522.3 302.0,520.8 301.3,519.5 300.7,518.3 300.2,517.3 299.8,516.4" fill="#dde1d3"/><polygon points="293.7,519.3 294.1,520.1 294.6,521.1 295.1,522.4 295.7,523.7 296.4,525.2 297.1,526.8 297.9,528.4 298.6,530.0 299.4,531.7 300.1,533.3 300.8,534.9 301.6,536.6 302.4,538.4 303.2,540.1 304.0,541.9 304.8,543.7 305.6,545.6 306.5,547.4 307.3,549.3 308.1,551.2 308.8,553.2 309.7,555.1 310.5,557.2 311.3,559.2 312.1,561.3 312.9,563.4 313.7,565.5 314.4,567.5 315.2,569.5 315.9,571.5 316.6,573.5 317.3,575.5 318.1,577.7 318.8,579.8 319.5,581.9 320.1,583.9 320.7,585.8 321.3,587.4 321.7,588.8 322.1,589.9 327.1,588.3 326.8,587.2 326.3,585.8 325.8,584.2 325.2,582.3 324.6,580.3 323.9,578.2 323.2,576.0 322.5,573.8 321.8,571.7 321.1,569.6 320.4,567.6 319.6,565.6 318.8,563.5 318.0,561.4 317.2,559.3 316.4,557.2 315.6,555.1 314.8,553.1 313.9,551.1 313.1,549.1 312.3,547.2 311.5,545.3 310.7,543.4 309.8,541.5 309.0,539.7 308.2,537.8 307.4,536.1 306.6,534.3 305.8,532.7 305.1,531.0 304.4,529.4 303.6,527.8 302.8,526.1 302.0,524.5 301.3,522.9 300.6,521.4 300.0,520.1 299.4,518.9 298.9,517.9 298.5,517.1" fill="#f1f3ea"/>
<polygon points="325.5,607.4 325.4,608.0 325.4,608.7 325.3,609.5 325.3,610.4 325.3,611.3 325.3,612.3 325.3,613.4 325.3,614.6 325.3,615.7 325.3,616.9 325.4,618.1 325.5,619.5 325.7,620.9 325.8,622.3 325.9,623.8 326.1,625.2 326.2,626.7 326.3,628.1 326.3,629.5 326.4,630.8 326.5,632.1 326.7,633.4 326.9,634.6 327.0,635.7 327.1,636.8 327.2,637.9 327.3,639.1 327.3,640.2 327.3,641.5 327.4,642.8 327.6,644.2 327.8,645.8 327.9,647.4 328.1,649.1 328.2,650.8 328.4,652.4 328.4,654.1 328.5,655.6 328.5,657.1 328.4,658.4 328.4,659.8 328.3,661.1 328.1,662.5 327.9,663.9 327.6,665.3 327.3,666.7 327.0,668.0 326.7,669.2 326.5,670.3 326.3,671.4 326.1,672.2 325.8,672.8 325.6,673.4 325.4,673.9 325.2,674.3 325.1,674.7 324.9,675.0 324.8,675.3 324.7,675.6 324.6,675.9 325.4,676.5 325.6,676.4 325.9,676.2 326.2,676.0 326.5,675.8 326.8,675.5 327.2,675.1 327.7,674.6 328.1,674.1 328.6,673.4 329.1,672.6 329.7,671.8 330.5,670.9 331.2,669.9 332.1,668.8 332.9,667.5 333.7,666.2 334.6,664.8 335.4,663.3 336.1,661.8 336.8,660.2 337.3,658.5 337.7,656.7 338.1,654.9 338.4,653.1 338.7,651.2 339.0,649.4 339.2,647.6 339.5,645.9 339.7,644.2 339.8,642.6 339.8,641.1 339.7,639.6 339.6,638.1 339.4,636.8 339.3,635.4 339.1,634.1 338.9,632.9 338.7,631.6 338.5,630.3 338.2,629.0 337.8,627.6 337.4,626.1 336.9,624.6 336.4,623.1 336.0,621.7 335.5,620.2 335.0,618.8 334.5,617.5 334.1,616.3 333.7,615.1 333.2,614.0 332.7,612.9 332.3,611.9 331.8,610.9 331.4,609.9 330.9,609.1 330.5,608.3 330.1,607.6 329.8,607.0 329.5,606.6" fill="#bfc5b3"/><polygon points="325.8,607.4 325.7,607.9 325.7,608.6 325.7,609.4 325.7,610.3 325.7,611.2 325.7,612.2 325.8,613.3 325.8,614.4 325.9,615.6 325.9,616.8 326.0,618.0 326.2,619.3 326.3,620.7 326.5,622.2 326.6,623.6 326.8,625.1 326.9,626.6 327.0,628.0 327.1,629.4 327.2,630.7 327.4,632.0 327.5,633.2 327.7,634.4 327.8,635.6 328.0,636.7 328.1,637.9 328.1,639.0 328.2,640.2 328.2,641.4 328.2,642.8 328.4,644.2 328.6,645.8 328.7,647.4 328.9,649.1 329.0,650.8 329.1,652.5 329.1,654.1 329.1,655.7 329.1,657.2 329.0,658.6 329.0,659.9 328.8,661.3 328.6,662.7 328.3,664.1 328.0,665.5 327.6,666.8 327.3,668.1 327.0,669.3 326.7,670.4 326.6,671.5 326.3,672.3 326.1,673.0 325.8,673.5 325.6,674.0 325.4,674.4 325.2,674.8 325.1,675.1 324.9,675.4 324.8,675.7 324.7,676.0 325.3,676.4 325.4,676.2 325.7,676.0 325.9,675.8 326.2,675.6 326.5,675.3 326.9,674.9 327.3,674.4 327.7,673.8 328.1,673.2 328.5,672.4 329.2,671.6 329.9,670.7 330.6,669.6 331.3,668.5 332.1,667.2 332.9,665.9 333.6,664.5 334.3,663.0 334.9,661.5 335.5,659.9 335.9,658.3 336.3,656.6 336.6,654.8 336.9,653.0 337.2,651.2 337.4,649.4 337.5,647.6 337.7,645.9 337.8,644.2 338.0,642.6 337.9,641.1 337.8,639.7 337.7,638.3 337.6,636.9 337.4,635.6 337.3,634.4 337.1,633.1 336.9,631.8 336.7,630.6 336.4,629.2 336.1,627.8 335.7,626.4 335.3,624.9 334.9,623.4 334.5,622.0 334.0,620.5 333.6,619.1 333.2,617.8 332.8,616.5 332.4,615.4 332.0,614.3 331.6,613.2 331.2,612.1 330.8,611.1 330.5,610.1 330.1,609.3 329.8,608.5 329.4,607.8 329.1,607.2 328.9,606.7" fill="#dde1d3"/><polygon points="326.4,607.3 326.4,607.8 326.4,608.5 326.4,609.2 326.5,610.1 326.6,611.0 326.7,612.0 326.8,613.1 326.9,614.2 327.0,615.3 327.1,616.5 327.2,617.7 327.4,619.0 327.6,620.4 327.8,621.9 328.0,623.3 328.2,624.8 328.4,626.3 328.6,627.7 328.7,629.1 328.9,630.4 329.0,631.7 329.2,633.0 329.4,634.2 329.5,635.4 329.7,636.5 329.8,637.7 329.9,638.9 329.9,640.1 330.0,641.4 330.0,642.8 330.1,644.2 330.2,645.8 330.3,647.5 330.4,649.2 330.4,650.9 330.5,652.6 330.5,654.2 330.4,655.9 330.3,657.4 330.2,658.8 330.0,660.2 329.8,661.6 329.5,663.0 329.1,664.4 328.7,665.8 328.3,667.1 327.9,668.4 327.5,669.6 327.2,670.7 327.0,671.7 326.7,672.5 326.4,673.1 326.1,673.7 325.9,674.2 325.6,674.6 325.4,674.9 325.2,675.2 325.0,675.5 324.9,675.8 324.8,676.0 325.2,676.3 325.3,676.1 325.5,675.9 325.8,675.7 326.0,675.4 326.3,675.1 326.7,674.7 327.0,674.3 327.4,673.7 327.8,673.0 328.2,672.2 328.8,671.4 329.4,670.4 330.0,669.3 330.7,668.2 331.4,666.9 332.0,665.6 332.7,664.1 333.3,662.7 333.9,661.2 334.3,659.7 334.7,658.1 335.0,656.4 335.3,654.7 335.5,652.9 335.7,651.1 335.8,649.3 336.0,647.6 336.1,645.9 336.2,644.2 336.2,642.7 336.2,641.2 336.1,639.8 336.0,638.4 335.9,637.1 335.7,635.8 335.6,634.6 335.4,633.3 335.2,632.1 335.0,630.8 334.8,629.5 334.5,628.1 334.2,626.7 333.8,625.2 333.4,623.7 333.1,622.3 332.7,620.8 332.3,619.4 331.9,618.1 331.6,616.8 331.2,615.6 330.9,614.5 330.6,613.4 330.2,612.3 329.9,611.3 329.6,610.3 329.3,609.4 329.0,608.6 328.8,607.9 328.5,607.3 328.3,606.8" fill="#f1f3ea"/>
<polygon points="353.1,535.8 353.2,536.1 353.4,536.6 353.7,537.1 354.0,537.7 354.3,538.3 354.6,539.0 355.0,539.7 355.3,540.3 355.6,541.0 355.9,541.6 356.2,542.3 356.4,543.0 356.7,543.6 356.9,544.3 357.2,545.0 357.4,545.7 357.6,546.3 357.8,547.0 358.0,547.7 358.2,548.5 358.4,549.3 358.6,550.1 358.7,550.9 358.9,551.6 359.0,552.2 359.0,552.9 359.1,553.6 359.1,554.4 359.1,555.4 359.1,556.5 359.2,557.8 359.4,559.3 359.5,560.9 359.6,562.7 359.6,564.5 359.7,566.5 359.7,568.5 359.7,570.7 359.8,572.8 359.8,575.0 359.9,577.2 359.9,579.5 359.9,581.9 359.9,584.3 360.0,586.8 360.0,589.3 360.0,591.9 360.0,594.5 360.0,597.2 360.0,599.9 360.0,602.8 360.1,605.7 360.1,608.6 360.1,611.6 360.2,614.7 360.2,617.8 360.2,620.9 360.2,623.9 360.2,627.0 360.3,629.9 360.3,633.0 360.4,636.3 360.5,639.6 360.5,643.0 360.6,646.3 360.7,649.5 360.7,652.4 360.8,655.0 360.9,657.2 361.0,659.0 363.0,659.0 363.2,657.3 363.5,655.1 363.8,652.5 364.1,649.6 364.3,646.4 364.6,643.1 364.9,639.8 365.2,636.4 365.5,633.1 365.7,630.1 365.9,627.1 366.0,624.0 366.2,621.0 366.3,617.9 366.4,614.8 366.5,611.7 366.7,608.7 366.8,605.7 366.9,602.8 367.0,600.1 367.1,597.3 367.2,594.6 367.3,592.0 367.4,589.4 367.5,586.9 367.5,584.4 367.6,581.9 367.7,579.6 367.8,577.2 367.8,575.0 367.8,572.8 367.8,570.6 367.9,568.5 367.9,566.4 367.9,564.4 367.9,562.4 367.8,560.6 367.8,558.8 367.7,557.1 367.5,555.5 367.1,554.0 366.7,552.8 366.2,551.6 365.7,550.6 365.2,549.7 364.7,548.9 364.2,548.3 363.7,547.7 363.3,547.1 362.8,546.5 362.3,545.8 361.9,545.1 361.4,544.4 360.9,543.8 360.4,543.1 359.9,542.6 359.5,542.0 359.0,541.4 358.5,540.9 358.1,540.4 357.6,539.8 357.2,539.2 356.7,538.6 356.2,538.0 355.8,537.4 355.3,536.8 354.9,536.3 354.5,535.9 354.2,535.5 353.9,535.2" fill="#bfc5b3"/><polygon points="353.2,535.7 353.3,536.1 353.6,536.5 353.8,537.0 354.1,537.6 354.5,538.2 354.8,538.9 355.2,539.5 355.5,540.2 355.8,540.9 356.2,541.5 356.4,542.1 356.7,542.8 356.9,543.5 357.1,544.2 357.4,544.9 357.6,545.5 357.9,546.2 358.1,546.9 358.3,547.6 358.5,548.4 358.7,549.2 358.9,550.0 359.1,550.7 359.3,551.4 359.4,552.0 359.5,552.7 359.6,553.5 359.6,554.3 359.7,555.3 359.7,556.4 359.8,557.8 360.0,559.2 360.1,560.9 360.1,562.7 360.2,564.5 360.2,566.5 360.3,568.5 360.3,570.7 360.3,572.8 360.4,575.0 360.4,577.2 360.4,579.5 360.5,581.9 360.5,584.3 360.5,586.8 360.5,589.3 360.5,591.9 360.5,594.5 360.5,597.2 360.5,600.0 360.5,602.8 360.5,605.7 360.6,608.6 360.6,611.6 360.6,614.7 360.6,617.8 360.6,620.9 360.6,623.9 360.6,627.0 360.6,629.9 360.7,633.0 360.8,636.3 360.8,639.6 360.8,643.0 360.9,646.3 360.9,649.5 361.1,652.4 361.1,655.0 361.1,657.2 361.2,659.0 362.6,659.0 362.8,657.3 363.0,655.1 363.2,652.5 363.5,649.6 363.8,646.4 364.0,643.1 364.3,639.7 364.5,636.4 364.7,633.1 364.9,630.0 365.0,627.1 365.2,624.0 365.3,621.0 365.4,617.9 365.5,614.8 365.6,611.7 365.7,608.7 365.8,605.7 365.9,602.8 365.9,600.0 366.0,597.3 366.1,594.6 366.2,592.0 366.3,589.4 366.3,586.9 366.4,584.4 366.5,581.9 366.5,579.6 366.6,577.2 366.6,575.0 366.6,572.8 366.6,570.6 366.6,568.5 366.6,566.4 366.6,564.4 366.6,562.5 366.6,560.6 366.5,558.9 366.4,557.2 366.3,555.6 365.9,554.2 365.6,553.0 365.2,551.9 364.7,550.9 364.3,550.1 363.8,549.3 363.4,548.7 362.9,548.0 362.5,547.4 362.1,546.8 361.7,546.1 361.3,545.4 360.8,544.7 360.4,544.0 359.9,543.4 359.5,542.8 359.1,542.2 358.5,541.7 358.1,541.2 357.7,540.6 357.3,540.0 356.8,539.4 356.4,538.8 355.9,538.1 355.5,537.5 355.1,537.0 354.7,536.5 354.3,536.0 354.0,535.6 353.8,535.3" fill="#dde1d3"/><polygon points="353.3,535.6 353.5,536.0 353.7,536.4 354.0,536.9 354.3,537.5 354.6,538.1 355.0,538.7 355.4,539.4 355.7,540.1 356.1,540.7 356.4,541.3 356.7,542.0 357.0,542.6 357.3,543.3 357.6,543.9 357.8,544.6 358.1,545.3 358.4,545.9 358.7,546.6 358.9,547.3 359.2,548.1 359.4,548.9 359.7,549.6 359.9,550.3 360.1,551.0 360.3,551.7 360.4,552.4 360.6,553.2 360.7,554.1 360.8,555.1 360.9,556.3 361.0,557.7 361.1,559.2 361.2,560.8 361.3,562.6 361.4,564.5 361.4,566.5 361.4,568.5 361.4,570.7 361.5,572.8 361.5,575.0 361.5,577.2 361.5,579.5 361.5,581.9 361.5,584.3 361.5,586.8 361.5,589.3 361.5,591.9 361.5,594.5 361.5,597.2 361.5,600.0 361.5,602.8 361.5,605.7 361.5,608.6 361.5,611.7 361.5,614.7 361.5,617.8 361.5,620.9 361.5,624.0 361.4,627.0 361.4,630.0 361.4,633.0 361.4,636.3 361.4,639.6 361.4,643.0 361.4,646.3 361.4,649.5 361.4,652.4 361.4,655.0 361.4,657.3 361.5,659.0 362.4,659.0 362.5,657.3 362.6,655.1 362.8,652.5 363.1,649.6 363.3,646.4 363.4,643.1 363.6,639.7 363.8,636.4 364.0,633.1 364.2,630.0 364.3,627.0 364.4,624.0 364.4,620.9 364.5,617.9 364.6,614.8 364.7,611.7 364.8,608.7 364.8,605.7 364.9,602.8 365.0,600.0 365.0,597.3 365.1,594.6 365.2,592.0 365.2,589.4 365.3,586.8 365.3,584.3 365.4,581.9 365.4,579.5 365.5,577.2 365.5,575.0 365.5,572.8 365.5,570.6 365.5,568.5 365.5,566.4 365.5,564.4 365.4,562.5 365.4,560.7 365.3,558.9 365.2,557.3 365.1,555.8 364.8,554.4 364.5,553.2 364.2,552.2 363.8,551.3 363.4,550.4 363.0,549.7 362.6,549.0 362.2,548.4 361.8,547.8 361.5,547.1 361.1,546.4 360.7,545.6 360.3,545.0 359.9,544.3 359.5,543.7 359.1,543.1 358.7,542.5 358.2,541.9 357.8,541.3 357.4,540.8 357.0,540.2 356.6,539.5 356.2,538.9 355.7,538.3 355.3,537.7 354.9,537.1 354.5,536.6 354.2,536.1 353.9,535.7 353.7,535.4" fill="#f1f3ea"/>
<polygon points="390.2,680.9 390.5,680.6 390.8,680.2 391.1,679.8 391.4,679.3 391.7,678.8 392.1,678.3 392.4,677.7 392.8,677.2 393.1,676.7 393.5,676.2 393.8,675.7 394.2,675.0 394.5,674.4 394.8,673.8 395.2,673.3 395.5,672.8 395.8,672.3 396.2,671.9 396.5,671.6 397.0,671.2 397.5,670.7 398.0,670.1 398.4,669.7 398.8,669.3 399.2,668.9 399.6,668.7 400.1,668.4 400.7,668.1 401.5,667.8 402.4,667.5 403.7,667.1 405.1,666.8 406.7,666.5 408.5,666.2 410.5,665.9 412.5,665.7 414.6,665.4 416.7,665.2 418.9,664.9 421.1,664.7 423.4,664.4 425.8,664.1 428.3,663.9 430.9,663.6 433.5,663.3 436.0,663.1 438.5,662.8 440.9,662.7 443.1,662.5 445.1,662.3 446.8,662.2 448.6,662.2 450.2,662.1 451.8,662.1 453.2,662.1 454.6,662.2 455.8,662.2 456.9,662.2 457.9,662.2 458.7,662.1 458.9,658.7 458.2,658.5 457.3,658.3 456.2,658.1 455.0,657.9 453.6,657.7 452.1,657.4 450.5,657.2 448.7,657.1 446.9,656.9 444.9,656.9 442.9,656.8 440.6,656.9 438.2,656.9 435.6,657.0 433.0,657.1 430.4,657.2 427.8,657.3 425.2,657.5 422.8,657.6 420.5,657.7 418.3,657.9 416.1,658.0 413.9,658.1 411.8,658.3 409.6,658.5 407.6,658.7 405.6,658.9 403.8,659.1 402.0,659.4 400.4,659.7 398.9,660.2 397.5,660.7 396.3,661.3 395.2,662.0 394.2,662.6 393.4,663.3 392.7,664.0 392.1,664.6 391.6,665.2 391.0,665.8 390.4,666.6 389.9,667.5 389.4,668.4 389.0,669.3 388.6,670.2 388.3,671.0 388.1,671.7 387.9,672.5 387.7,673.1 387.5,673.8 387.4,674.5 387.3,675.3 387.2,676.1 387.2,676.8 387.1,677.5 387.1,678.2 387.2,678.8 387.2,679.3 387.3,679.7 387.4,680.1" fill="#bfc5b3"/><polygon points="389.9,680.8 390.3,680.6 390.5,680.2 390.8,679.7 391.1,679.2 391.4,678.7 391.7,678.2 392.0,677.6 392.4,677.1 392.7,676.6 393.1,676.1 393.4,675.5 393.7,674.8 394.1,674.2 394.4,673.6 394.7,673.1 395.0,672.5 395.4,672.0 395.7,671.6 396.1,671.2 396.6,670.8 397.1,670.3 397.6,669.7 398.0,669.3 398.4,668.9 398.8,668.5 399.3,668.2 399.8,667.9 400.5,667.6 401.3,667.2 402.3,666.9 403.5,666.6 405.0,666.3 406.7,665.9 408.5,665.7 410.4,665.4 412.4,665.1 414.5,664.9 416.7,664.7 418.9,664.4 421.1,664.2 423.3,663.9 425.7,663.7 428.3,663.4 430.8,663.1 433.4,662.9 436.0,662.6 438.5,662.4 440.9,662.2 443.1,662.1 445.0,662.0 446.9,661.9 448.6,661.8 450.2,661.8 451.8,661.8 453.3,661.8 454.6,661.9 455.8,661.9 456.9,661.9 457.9,661.9 458.7,661.9 458.9,659.2 458.1,659.1 457.2,658.9 456.1,658.7 454.9,658.5 453.5,658.3 452.0,658.1 450.4,658.0 448.7,657.8 446.9,657.7 445.0,657.7 442.9,657.7 440.7,657.7 438.2,657.8 435.7,657.9 433.1,658.0 430.5,658.2 427.9,658.3 425.3,658.5 422.9,658.6 420.6,658.8 418.4,658.9 416.2,659.1 414.0,659.2 411.9,659.4 409.8,659.6 407.7,659.8 405.8,660.0 404.0,660.3 402.3,660.6 400.7,660.9 399.2,661.3 398.0,661.8 396.9,662.4 395.9,663.0 395.0,663.6 394.2,664.2 393.6,664.9 393.0,665.5 392.5,666.0 391.9,666.6 391.3,667.4 390.8,668.2 390.3,669.0 389.9,669.8 389.6,670.6 389.3,671.4 389.1,672.1 388.8,672.8 388.6,673.5 388.4,674.1 388.2,674.8 388.1,675.6 388.0,676.3 387.9,677.0 387.8,677.7 387.8,678.3 387.8,678.9 387.8,679.4 387.8,679.9 387.9,680.2" fill="#dde1d3"/><polygon points="389.6,680.7 389.8,680.4 390.0,680.0 390.3,679.6 390.5,679.1 390.8,678.5 391.0,678.0 391.3,677.4 391.6,676.8 391.9,676.3 392.2,675.7 392.5,675.1 392.8,674.5 393.2,673.8 393.5,673.2 393.8,672.6 394.1,672.0 394.5,671.5 394.9,671.0 395.3,670.5 395.7,670.1 396.2,669.5 396.7,669.0 397.2,668.5 397.7,668.0 398.1,667.6 398.7,667.2 399.3,666.9 400.0,666.5 400.9,666.2 402.0,665.8 403.3,665.5 404.8,665.2 406.5,664.9 408.3,664.6 410.3,664.4 412.3,664.1 414.4,663.9 416.6,663.7 418.8,663.4 421.0,663.2 423.2,663.0 425.7,662.7 428.2,662.5 430.8,662.2 433.4,662.0 435.9,661.8 438.4,661.6 440.8,661.4 443.0,661.3 445.0,661.2 446.9,661.1 448.6,661.1 450.3,661.1 451.8,661.1 453.3,661.2 454.7,661.3 455.9,661.3 457.0,661.4 457.9,661.4 458.7,661.4 458.9,659.7 458.1,659.6 457.2,659.4 456.1,659.3 454.9,659.1 453.5,659.0 452.0,658.8 450.4,658.7 448.7,658.5 446.9,658.5 445.0,658.4 442.9,658.5 440.7,658.5 438.3,658.6 435.8,658.8 433.2,658.9 430.5,659.0 427.9,659.2 425.4,659.4 422.9,659.6 420.7,659.7 418.5,659.9 416.3,660.1 414.1,660.3 412.0,660.4 409.9,660.6 407.9,660.8 406.0,661.1 404.2,661.3 402.5,661.6 401.0,662.0 399.6,662.4 398.4,662.9 397.4,663.4 396.5,663.9 395.7,664.5 395.0,665.1 394.4,665.7 393.8,666.2 393.3,666.8 392.8,667.4 392.2,668.1 391.7,668.8 391.2,669.6 390.9,670.3 390.5,671.1 390.2,671.8 389.9,672.5 389.7,673.2 389.5,673.8 389.2,674.5 389.0,675.2 388.9,675.9 388.7,676.5 388.6,677.2 388.5,677.9 388.4,678.5 388.3,679.1 388.3,679.6 388.2,680.0 388.3,680.3" fill="#f1f3ea"/>
<polygon points="449.5,649.2 449.7,649.6 449.9,650.1 450.2,650.6 450.5,651.3 450.8,651.9 451.2,652.6 451.6,653.3 452.0,654.1 452.4,654.8 452.8,655.4 453.3,656.0 453.8,656.7 454.4,657.3 455.0,658.0 455.5,658.7 456.1,659.3 456.6,659.9 457.0,660.4 457.4,660.8 457.7,661.2 459.9,659.2 459.7,658.9 459.3,658.4 458.8,657.9 458.3,657.3 457.8,656.7 457.2,656.1 456.7,655.4 456.1,654.8 455.6,654.1 455.2,653.6 454.7,653.1 454.1,652.5 453.6,651.9 453.0,651.3 452.5,650.8 451.9,650.2 451.5,649.7 451.0,649.3 450.6,648.9 450.3,648.6" fill="#bfc5b3"/><polygon points="449.6,649.1 449.8,649.5 450.0,650.0 450.3,650.5 450.6,651.1 451.0,651.8 451.4,652.5 451.8,653.2 452.3,653.9 452.7,654.6 453.1,655.2 453.6,655.8 454.1,656.5 454.6,657.1 455.2,657.8 455.8,658.5 456.3,659.1 456.8,659.7 457.2,660.2 457.6,660.6 457.9,661.0 459.5,659.6 459.2,659.3 458.8,658.8 458.4,658.3 457.9,657.7 457.4,657.1 456.8,656.4 456.3,655.8 455.7,655.1 455.2,654.5 454.7,653.9 454.2,653.4 453.7,652.8 453.2,652.2 452.7,651.6 452.2,651.0 451.7,650.4 451.2,649.9 450.8,649.4 450.4,649.0 450.2,648.7" fill="#dde1d3"/><polygon points="449.7,649.1 449.9,649.4 450.1,649.9 450.5,650.4 450.8,651.0 451.2,651.7 451.6,652.3 452.1,653.0 452.5,653.7 453.0,654.4 453.4,655.0 453.9,655.6 454.4,656.2 454.9,656.9 455.5,657.6 456.1,658.2 456.6,658.8 457.1,659.4 457.5,659.9 457.9,660.4 458.2,660.7 459.2,659.8 458.9,659.5 458.6,659.1 458.1,658.5 457.6,658.0 457.1,657.3 456.5,656.7 456.0,656.0 455.4,655.4 454.9,654.7 454.4,654.2 454.0,653.6 453.5,653.0 452.9,652.4 452.4,651.7 452.0,651.1 451.5,650.5 451.0,650.0 450.7,649.5 450.3,649.1 450.0,648.8" fill="#f1f3ea"/>
<polygon points="422.3,694.2 422.7,693.7 423.2,692.9 423.8,692.1 424.4,691.1 425.1,690.1 425.9,689.1 426.6,688.0 427.4,686.9 428.2,686.0 429.0,685.0 429.9,684.1 430.7,683.1 431.5,682.1 432.4,681.2 433.3,680.2 434.2,679.3 435.2,678.4 436.2,677.6 437.2,676.8 438.3,676.1 439.6,675.4 440.9,674.6 442.4,673.9 443.9,673.2 445.5,672.5 447.2,671.9 448.8,671.3 450.4,670.8 452.0,670.3 453.5,669.9 455.1,669.6 456.6,669.3 458.1,669.1 459.7,669.0 461.2,668.9 462.8,668.8 464.4,668.8 466.0,668.8 467.5,668.9 469.1,668.9 470.7,669.1 472.2,669.2 473.8,669.5 475.4,669.8 477.0,670.1 478.7,670.4 480.3,670.8 482.0,671.1 483.6,671.5 485.2,671.7 486.8,672.0 488.5,672.2 490.2,672.4 491.9,672.6 493.5,672.8 495.1,673.0 496.6,673.2 497.9,673.3 498.9,673.5 499.8,673.5 500.2,671.1 499.3,670.9 498.3,670.7 497.0,670.4 495.5,670.2 494.0,669.9 492.4,669.6 490.7,669.3 489.0,668.9 487.4,668.6 485.8,668.3 484.3,667.9 482.8,667.5 481.2,667.1 479.6,666.7 478.0,666.2 476.3,665.8 474.6,665.4 472.9,665.0 471.2,664.7 469.5,664.5 467.8,664.3 466.1,664.2 464.4,664.1 462.8,664.1 461.0,664.1 459.3,664.2 457.6,664.3 455.9,664.5 454.2,664.7 452.5,665.1 450.7,665.5 449.0,666.0 447.2,666.6 445.4,667.2 443.6,667.9 441.9,668.6 440.2,669.4 438.6,670.2 437.1,671.0 435.7,671.9 434.3,672.8 433.1,673.8 431.9,674.9 430.8,675.9 429.8,677.0 428.9,678.0 428.0,679.1 427.2,680.2 426.4,681.2 425.6,682.2 424.7,683.3 423.9,684.4 423.2,685.6 422.4,686.8 421.8,688.0 421.1,689.1 420.6,690.1 420.1,691.0 419.6,691.8 419.3,692.4" fill="#bfc5b3"/><polygon points="422.1,694.1 422.5,693.5 423.0,692.8 423.6,692.0 424.2,691.0 424.9,690.0 425.6,688.9 426.4,687.8 427.2,686.8 428.0,685.8 428.8,684.8 429.6,683.9 430.5,682.9 431.3,681.9 432.2,680.9 433.0,680.0 434.0,679.1 434.9,678.2 435.9,677.4 437.0,676.6 438.1,675.8 439.4,675.1 440.8,674.3 442.3,673.6 443.8,672.9 445.4,672.2 447.0,671.6 448.7,671.0 450.3,670.4 451.9,670.0 453.5,669.6 455.0,669.3 456.5,669.0 458.1,668.8 459.6,668.6 461.2,668.5 462.8,668.5 464.4,668.5 466.0,668.5 467.6,668.5 469.1,668.6 470.7,668.7 472.3,668.9 473.9,669.2 475.5,669.5 477.1,669.8 478.7,670.2 480.4,670.5 482.0,670.9 483.6,671.2 485.2,671.5 486.8,671.7 488.5,672.0 490.2,672.1 491.9,672.3 493.6,672.5 495.2,672.7 496.6,672.9 497.9,673.0 499.0,673.2 499.9,673.3 500.1,671.5 499.3,671.4 498.2,671.2 496.9,670.9 495.5,670.7 493.9,670.4 492.3,670.1 490.6,669.9 488.9,669.4 487.3,669.1 485.7,668.8 484.2,668.5 482.7,668.1 481.1,667.7 479.5,667.2 477.8,666.8 476.2,666.4 474.5,666.0 472.8,665.6 471.1,665.3 469.4,665.1 467.8,665.0 466.1,664.9 464.4,664.8 462.8,664.8 461.1,664.8 459.4,664.9 457.7,665.0 456.0,665.2 454.3,665.5 452.6,665.8 450.9,666.2 449.2,666.7 447.4,667.3 445.7,667.9 443.9,668.6 442.2,669.3 440.6,670.1 439.0,670.9 437.5,671.7 436.1,672.5 434.7,673.4 433.5,674.4 432.4,675.4 431.3,676.4 430.3,677.5 429.4,678.5 428.5,679.6 427.7,680.6 426.9,681.6 426.1,682.6 425.3,683.7 424.5,684.8 423.7,686.0 423.0,687.2 422.3,688.3 421.6,689.4 421.0,690.4 420.5,691.3 420.1,692.1 419.8,692.6" fill="#dde1d3"/><polygon points="421.7,693.8 422.1,693.3 422.5,692.5 423.1,691.7 423.7,690.7 424.4,689.7 425.2,688.6 425.9,687.5 426.7,686.4 427.5,685.4 428.3,684.4 429.1,683.5 430.0,682.5 430.8,681.5 431.7,680.5 432.6,679.5 433.5,678.6 434.5,677.7 435.5,676.8 436.6,676.0 437.8,675.2 439.1,674.5 440.5,673.7 442.0,672.9 443.5,672.2 445.1,671.5 446.8,670.9 448.4,670.3 450.1,669.8 451.7,669.3 453.3,668.9 454.9,668.6 456.4,668.3 458.0,668.1 459.6,668.0 461.2,667.9 462.8,667.8 464.4,667.8 466.0,667.8 467.6,667.9 469.2,668.0 470.8,668.1 472.4,668.3 474.0,668.6 475.6,668.9 477.2,669.3 478.9,669.7 480.5,670.0 482.1,670.4 483.7,670.7 485.3,671.0 486.9,671.3 488.6,671.5 490.3,671.7 492.0,671.9 493.6,672.1 495.2,672.4 496.7,672.5 497.9,672.7 499.0,672.8 499.9,673.0 500.1,671.8 499.2,671.7 498.1,671.5 496.8,671.3 495.4,671.1 493.8,670.8 492.2,670.5 490.5,670.3 488.9,669.9 487.2,669.6 485.6,669.3 484.1,669.0 482.5,668.6 481.0,668.2 479.3,667.8 477.7,667.3 476.1,666.9 474.4,666.6 472.7,666.2 471.0,666.0 469.4,665.8 467.7,665.6 466.1,665.5 464.4,665.5 462.8,665.5 461.1,665.5 459.4,665.6 457.8,665.7 456.1,665.9 454.4,666.1 452.8,666.5 451.1,666.9 449.4,667.4 447.6,667.9 445.9,668.6 444.2,669.2 442.5,669.9 440.9,670.7 439.3,671.5 437.8,672.3 436.4,673.1 435.2,674.0 434.0,674.9 432.8,675.9 431.8,676.9 430.8,677.9 429.9,679.0 429.0,680.0 428.2,681.0 427.4,682.0 426.6,683.0 425.8,684.0 425.0,685.2 424.2,686.3 423.4,687.5 422.7,688.6 422.1,689.7 421.5,690.7 421.0,691.6 420.5,692.3 420.2,692.9" fill="#f1f3ea"/>
<polygon points="425.1,697.0 425.7,696.4 426.5,695.6 427.3,694.7 428.3,693.6 429.4,692.5 430.5,691.3 431.6,690.2 432.7,689.0 433.9,688.0 435.0,687.0 436.2,686.0 437.4,684.9 438.6,683.9 439.8,682.9 441.0,681.9 442.3,680.9 443.6,680.0 444.9,679.2 446.2,678.5 447.5,677.8 448.9,677.2 450.4,676.7 451.9,676.2 453.5,675.8 455.1,675.4 456.7,675.1 458.3,674.8 459.9,674.6 461.4,674.4 462.9,674.3 464.2,674.3 465.6,674.4 467.0,674.5 468.4,674.6 469.7,674.8 471.0,675.1 472.2,675.4 473.3,675.7 474.3,676.0 475.2,676.4 475.9,676.7 476.4,677.1 477.0,677.6 477.4,678.1 477.9,678.6 478.3,679.2 478.6,679.7 479.0,680.3 479.3,680.8 479.6,681.1 481.6,679.7 481.4,679.4 481.2,679.0 480.9,678.4 480.6,677.8 480.1,677.1 479.6,676.3 479.0,675.6 478.3,674.9 477.4,674.2 476.4,673.6 475.4,673.2 474.3,672.8 473.0,672.4 471.7,672.0 470.3,671.7 468.9,671.4 467.4,671.1 465.9,671.0 464.3,670.9 462.7,670.9 461.2,670.9 459.5,671.0 457.9,671.2 456.1,671.4 454.4,671.7 452.6,672.1 450.9,672.5 449.2,673.0 447.5,673.5 445.9,674.2 444.3,674.9 442.8,675.8 441.4,676.7 439.9,677.7 438.6,678.7 437.2,679.8 436.0,680.9 434.7,681.9 433.5,683.0 432.4,684.0 431.2,685.1 430.0,686.4 428.9,687.6 427.8,688.9 426.7,690.2 425.7,691.4 424.8,692.5 424.1,693.5 423.4,694.3 422.9,695.0" fill="#bfc5b3"/><polygon points="424.9,696.8 425.5,696.2 426.2,695.4 427.2,694.5 428.1,693.5 429.2,692.3 430.3,691.2 431.4,690.0 432.6,688.8 433.7,687.8 434.9,686.8 436.0,685.8 437.2,684.7 438.4,683.7 439.6,682.7 440.9,681.7 442.1,680.7 443.4,679.8 444.7,679.0 446.1,678.2 447.4,677.6 448.8,677.0 450.3,676.4 451.8,675.9 453.4,675.5 455.1,675.1 456.7,674.8 458.3,674.6 459.9,674.4 461.4,674.2 462.8,674.1 464.2,674.1 465.6,674.1 467.0,674.2 468.4,674.4 469.7,674.6 471.0,674.8 472.3,675.1 473.4,675.4 474.4,675.7 475.3,676.1 476.0,676.4 476.6,676.8 477.2,677.3 477.7,677.9 478.1,678.5 478.5,679.0 478.9,679.6 479.2,680.1 479.5,680.6 479.8,681.0 481.2,679.9 481.0,679.6 480.8,679.2 480.5,678.7 480.1,678.0 479.7,677.4 479.2,676.7 478.6,676.0 477.9,675.3 477.1,674.7 476.2,674.2 475.2,673.7 474.1,673.3 472.9,672.9 471.6,672.6 470.2,672.1 468.8,671.9 467.3,671.6 465.8,671.5 464.3,671.4 462.8,671.4 461.2,671.4 459.6,671.6 457.9,671.7 456.2,672.0 454.5,672.3 452.8,672.6 451.0,673.1 449.4,673.5 447.7,674.1 446.1,674.7 444.6,675.5 443.1,676.3 441.7,677.2 440.3,678.2 438.9,679.2 437.6,680.3 436.4,681.3 435.1,682.4 433.9,683.4 432.8,684.5 431.6,685.6 430.4,686.8 429.3,688.0 428.2,689.3 427.1,690.5 426.1,691.7 425.2,692.8 424.5,693.9 423.8,694.7 423.3,695.4" fill="#dde1d3"/><polygon points="424.6,696.5 425.2,695.9 425.9,695.1 426.8,694.2 427.8,693.2 428.8,692.0 429.9,690.8 431.0,689.6 432.2,688.5 433.3,687.4 434.5,686.4 435.6,685.4 436.8,684.3 438.0,683.3 439.2,682.2 440.5,681.2 441.8,680.3 443.1,679.3 444.4,678.5 445.8,677.7 447.2,677.1 448.6,676.5 450.1,675.9 451.7,675.4 453.3,675.0 455.0,674.6 456.6,674.3 458.2,674.1 459.8,673.8 461.4,673.7 462.8,673.6 464.2,673.6 465.7,673.6 467.1,673.8 468.5,673.9 469.8,674.2 471.1,674.4 472.4,674.7 473.5,675.0 474.6,675.4 475.5,675.7 476.2,676.1 476.9,676.6 477.4,677.1 478.0,677.7 478.4,678.3 478.8,678.9 479.2,679.4 479.5,680.0 479.8,680.4 480.1,680.8 481.0,680.1 480.7,679.8 480.5,679.4 480.2,678.8 479.8,678.2 479.4,677.6 478.9,676.9 478.4,676.2 477.7,675.6 476.9,675.0 476.0,674.5 475.0,674.1 474.0,673.7 472.8,673.3 471.5,673.0 470.1,672.6 468.7,672.3 467.3,672.1 465.8,671.9 464.3,671.9 462.8,671.9 461.3,671.9 459.7,672.1 458.0,672.2 456.3,672.5 454.6,672.8 452.9,673.1 451.2,673.6 449.5,674.1 447.9,674.6 446.4,675.2 444.9,676.0 443.4,676.8 442.0,677.7 440.6,678.6 439.3,679.6 438.0,680.7 436.7,681.7 435.5,682.8 434.3,683.9 433.1,684.9 432.0,686.0 430.8,687.1 429.7,688.4 428.6,689.6 427.5,690.9 426.5,692.0 425.6,693.1 424.8,694.2 424.1,695.0 423.6,695.6" fill="#f1f3ea"/>
<polygon points="479.9,684.5 480.3,684.1 480.8,683.6 481.4,683.1 482.0,682.4 482.8,681.7 483.5,681.1 484.2,680.4 485.0,679.7 485.7,679.2 486.4,678.7 487.0,678.3 487.7,677.9 488.3,677.5 489.0,677.1 489.8,676.8 490.5,676.4 491.2,676.1 492.0,675.8 492.7,675.5 493.4,675.2 494.1,674.9 494.9,674.6 495.7,674.4 496.5,674.1 497.3,673.9 498.0,673.6 498.7,673.4 499.3,673.3 499.8,673.1 500.3,673.0 499.7,671.0 499.3,671.1 498.8,671.2 498.2,671.4 497.5,671.5 496.7,671.7 495.9,671.9 495.0,672.1 494.2,672.3 493.4,672.6 492.6,672.8 491.8,673.1 491.0,673.3 490.3,673.6 489.5,673.9 488.7,674.2 487.9,674.6 487.0,674.9 486.2,675.3 485.4,675.8 484.6,676.3 483.9,676.9 483.1,677.6 482.3,678.3 481.5,679.0 480.8,679.8 480.1,680.5 479.5,681.2 478.9,681.8 478.5,682.3 478.1,682.7" fill="#bfc5b3"/><polygon points="479.7,684.3 480.1,683.9 480.6,683.4 481.2,682.9 481.8,682.2 482.5,681.5 483.3,680.8 484.0,680.2 484.8,679.5 485.5,678.9 486.2,678.5 486.8,678.0 487.5,677.6 488.2,677.2 488.9,676.8 489.7,676.5 490.4,676.1 491.1,675.8 491.9,675.5 492.6,675.2 493.3,674.9 494.1,674.6 494.8,674.4 495.6,674.1 496.4,673.9 497.2,673.6 497.9,673.4 498.6,673.2 499.3,673.0 499.8,672.9 500.2,672.8 499.8,671.4 499.4,671.5 498.9,671.6 498.3,671.8 497.6,671.9 496.8,672.1 496.0,672.3 495.2,672.5 494.3,672.8 493.5,673.0 492.7,673.3 492.0,673.5 491.2,673.8 490.5,674.1 489.7,674.4 488.9,674.7 488.1,675.1 487.3,675.4 486.5,675.8 485.7,676.3 485.0,676.7 484.2,677.3 483.4,678.0 482.7,678.7 481.9,679.4 481.2,680.2 480.5,680.9 479.8,681.6 479.3,682.2 478.8,682.7 478.5,683.0" fill="#dde1d3"/><polygon points="479.5,684.1 479.9,683.7 480.4,683.2 480.9,682.6 481.6,682.0 482.3,681.3 483.0,680.6 483.8,679.9 484.5,679.2 485.3,678.6 486.0,678.2 486.6,677.7 487.3,677.3 488.0,676.9 488.8,676.5 489.5,676.2 490.3,675.8 491.0,675.5 491.8,675.2 492.5,674.9 493.2,674.6 494.0,674.3 494.7,674.1 495.5,673.8 496.3,673.6 497.1,673.4 497.9,673.1 498.6,673.0 499.2,672.8 499.7,672.6 500.1,672.5 499.9,671.6 499.5,671.7 499.0,671.9 498.3,672.0 497.6,672.2 496.9,672.4 496.1,672.6 495.2,672.8 494.4,673.0 493.6,673.3 492.8,673.6 492.1,673.8 491.3,674.1 490.6,674.4 489.8,674.7 489.0,675.0 488.2,675.4 487.5,675.7 486.7,676.1 485.9,676.6 485.2,677.0 484.4,677.6 483.7,678.2 482.9,678.9 482.2,679.7 481.4,680.4 480.7,681.1 480.1,681.8 479.5,682.4 479.0,682.9 478.7,683.3" fill="#f1f3ea"/>
<polygon points="418.3,695.3 418.5,695.5 418.7,695.8 419.1,696.1 419.5,696.5 420.0,696.9 420.6,697.3 421.3,697.7 422.0,698.1 422.8,698.5 423.7,698.7 424.6,698.8 425.6,698.7 426.6,698.6 427.6,698.5 428.6,698.3 429.5,698.1 430.4,697.9 431.1,697.8 431.7,697.6 432.2,697.5 431.8,694.1 431.3,694.1 430.6,694.1 429.8,694.2 429.0,694.3 428.1,694.3 427.2,694.4 426.3,694.4 425.5,694.4 424.8,694.4 424.3,694.3 423.9,694.3 423.5,694.2 423.0,694.1 422.5,693.9 422.0,693.7 421.5,693.5 421.0,693.2 420.5,693.0 420.1,692.8 419.7,692.7" fill="#bfc5b3"/><polygon points="418.4,695.0 418.6,695.2 418.8,695.6 419.2,695.9 419.7,696.3 420.2,696.7 420.7,697.1 421.4,697.5 422.1,697.9 422.9,698.2 423.7,698.4 424.6,698.4 425.6,698.4 426.6,698.3 427.6,698.2 428.5,698.0 429.5,697.8 430.3,697.7 431.1,697.5 431.7,697.4 432.2,697.3 431.9,694.6 431.3,694.6 430.7,694.7 429.9,694.7 429.0,694.8 428.1,694.9 427.2,695.0 426.3,695.0 425.5,695.0 424.8,695.0 424.2,694.9 423.7,694.9 423.2,694.8 422.7,694.6 422.2,694.4 421.7,694.2 421.2,693.9 420.7,693.7 420.3,693.4 419.8,693.3 419.5,693.2" fill="#dde1d3"/><polygon points="418.6,694.7 418.8,694.9 419.1,695.2 419.5,695.5 419.9,695.8 420.4,696.2 421.0,696.6 421.6,697.0 422.3,697.3 423.0,697.6 423.8,697.8 424.7,697.8 425.6,697.8 426.5,697.7 427.5,697.6 428.5,697.5 429.4,697.3 430.3,697.1 431.0,697.0 431.6,696.9 432.1,696.8 431.9,695.1 431.4,695.1 430.8,695.2 430.0,695.3 429.1,695.4 428.2,695.5 427.3,695.6 426.4,695.6 425.5,695.7 424.7,695.6 424.1,695.6 423.6,695.5 423.0,695.3 422.5,695.1 421.9,694.9 421.4,694.6 420.9,694.3 420.4,694.1 420.0,693.8 419.6,693.7 419.3,693.5" fill="#f1f3ea"/>
<polygon points="417.7,702.7 418.0,703.0 418.3,703.2 418.8,703.6 419.3,704.0 419.9,704.4 420.6,704.8 421.3,705.2 422.1,705.5 422.9,705.8 423.9,706.0 424.8,706.0 425.7,705.8 426.5,705.5 427.4,705.3 428.2,704.9 428.9,704.6 429.6,704.3 430.1,704.0 430.6,703.8 430.9,703.6 430.1,700.8 429.6,700.8 429.1,700.9 428.4,701.1 427.8,701.2 427.0,701.4 426.3,701.5 425.6,701.6 425.0,701.6 424.5,701.6 424.1,701.6 423.8,701.6 423.4,701.5 422.8,701.4 422.3,701.2 421.7,701.0 421.1,700.8 420.5,700.6 420.0,700.3 419.5,700.2 419.1,700.1" fill="#bfc5b3"/><polygon points="417.9,702.5 418.2,702.7 418.5,703.0 418.9,703.4 419.5,703.7 420.1,704.1 420.7,704.5 421.4,704.9 422.2,705.3 423.0,705.5 423.9,705.7 424.8,705.7 425.6,705.5 426.5,705.3 427.3,705.0 428.1,704.7 428.8,704.4 429.5,704.1 430.1,703.8 430.5,703.5 430.8,703.3 430.2,701.3 429.8,701.4 429.2,701.4 428.6,701.5 427.9,701.7 427.2,701.9 426.5,702.1 425.8,702.2 425.1,702.3 424.5,702.3 424.1,702.2 423.7,702.2 423.2,702.1 422.6,702.0 422.0,701.8 421.4,701.5 420.8,701.3 420.2,701.0 419.7,700.8 419.2,700.7 418.8,700.6" fill="#dde1d3"/><polygon points="418.1,702.1 418.3,702.3 418.7,702.6 419.1,702.9 419.7,703.3 420.3,703.7 420.9,704.0 421.6,704.4 422.4,704.7 423.1,704.9 423.9,705.1 424.7,705.1 425.5,704.9 426.3,704.7 427.1,704.5 427.9,704.2 428.7,703.9 429.3,703.6 429.9,703.4 430.4,703.1 430.7,703.0 430.3,701.7 429.9,701.8 429.4,701.8 428.8,702.0 428.1,702.2 427.4,702.4 426.6,702.6 425.9,702.7 425.2,702.8 424.6,702.9 424.1,702.9 423.6,702.8 423.0,702.7 422.4,702.5 421.8,702.3 421.2,702.0 420.6,701.7 420.0,701.4 419.5,701.2 419.0,701.0 418.6,700.9" fill="#f1f3ea"/>
<polygon points="418.4,710.4 418.5,710.6 418.7,710.9 418.9,711.2 419.2,711.6 419.6,712.0 420.0,712.4 420.4,712.8 420.9,713.1 421.4,713.5 422.2,713.7 423.0,713.7 423.6,713.5 424.2,713.2 424.6,712.9 425.0,712.6 425.4,712.2 425.7,711.9 426.0,711.7 426.1,711.5 426.3,711.4 424.9,709.2 424.7,709.3 424.4,709.5 424.0,709.7 423.7,709.9 423.4,710.1 423.0,710.2 422.8,710.3 422.6,710.3 422.5,710.3 422.6,710.3 422.7,710.3 422.5,710.3 422.3,710.2 422.0,710.0 421.6,709.8 421.3,709.5 420.9,709.2 420.6,708.9 420.3,708.7 420.0,708.6" fill="#bfc5b3"/><polygon points="418.6,710.2 418.7,710.4 418.9,710.7 419.2,711.0 419.5,711.3 419.8,711.7 420.2,712.1 420.6,712.5 421.0,713.0 421.5,713.3 422.2,713.5 422.9,713.4 423.5,713.2 424.0,712.9 424.5,712.6 424.9,712.3 425.2,712.0 425.5,711.7 425.8,711.4 426.0,711.3 426.1,711.1 425.2,709.6 425.0,709.8 424.7,709.9 424.4,710.1 424.0,710.3 423.7,710.5 423.3,710.7 423.0,710.9 422.7,710.8 422.6,710.8 422.6,710.8 422.5,710.8 422.3,710.7 421.9,710.7 421.6,710.4 421.2,710.2 420.9,709.9 420.5,709.6 420.2,709.3 419.9,709.1 419.7,708.9" fill="#dde1d3"/><polygon points="418.8,710.0 418.9,710.2 419.1,710.4 419.4,710.7 419.7,711.1 420.1,711.4 420.4,711.8 420.8,712.2 421.2,712.6 421.7,712.8 422.3,713.0 422.9,713.0 423.4,712.8 423.8,712.5 424.3,712.2 424.6,712.0 425.0,711.7 425.3,711.4 425.6,711.2 425.8,711.0 426.0,710.9 425.4,709.9 425.1,710.0 424.9,710.2 424.6,710.4 424.2,710.6 423.9,710.8 423.5,711.0 423.2,711.2 422.9,711.2 422.6,711.3 422.5,711.3 422.3,711.2 422.1,711.1 421.7,711.0 421.3,710.7 421.0,710.4 420.6,710.1 420.3,709.8 420.0,709.6 419.7,709.3 419.5,709.2" fill="#f1f3ea"/>
<polygon points="365.2,708.6 365.4,709.0 365.7,709.4 366.1,710.0 366.5,710.6 367.0,711.2 367.5,711.9 368.0,712.6 368.6,713.2 369.1,713.9 369.7,714.5 370.1,715.0 370.6,715.5 371.0,716.0 371.5,716.5 372.0,717.1 372.7,717.6 373.4,718.2 374.2,718.8 375.2,719.4 376.2,719.9 377.4,720.4 378.7,720.9 380.2,721.4 381.7,722.0 383.3,722.5 385.0,723.0 386.6,723.4 388.3,723.8 389.9,724.0 391.5,724.2 393.0,724.2 394.5,724.2 396.0,724.1 397.4,723.9 398.8,723.7 400.2,723.4 401.6,723.0 403.0,722.5 404.3,722.0 405.6,721.5 407.0,720.8 408.3,720.0 409.7,719.1 411.0,718.2 412.2,717.2 413.5,716.3 414.6,715.3 415.7,714.4 416.6,713.5 417.5,712.7 418.4,711.8 419.1,710.9 419.8,710.1 420.4,709.2 420.9,708.5 421.3,707.7 421.7,707.1 422.0,706.5 422.2,706.1 422.4,705.7 419.2,703.5 418.8,703.9 418.5,704.4 418.1,704.9 417.8,705.5 417.3,706.1 416.9,706.8 416.4,707.4 415.8,708.1 415.2,708.7 414.5,709.3 413.6,710.1 412.7,710.9 411.6,711.7 410.5,712.6 409.4,713.5 408.2,714.3 407.0,715.1 405.8,715.8 404.7,716.4 403.6,716.9 402.5,717.4 401.3,717.8 400.2,718.1 399.0,718.4 397.9,718.7 396.7,718.8 395.5,719.0 394.3,719.0 393.1,719.1 391.9,719.0 390.6,718.9 389.2,718.7 387.8,718.4 386.3,718.0 384.8,717.6 383.3,717.1 381.8,716.7 380.5,716.2 379.2,715.7 378.2,715.3 377.3,715.0 376.6,714.6 376.0,714.3 375.5,714.0 375.0,713.7 374.5,713.3 374.0,712.9 373.5,712.5 372.9,712.0 372.3,711.5 371.7,711.1 371.1,710.6 370.4,710.1 369.8,709.6 369.1,709.1 368.5,708.6 368.0,708.2 367.4,707.8 367.0,707.4 366.6,707.2" fill="#bfc5b3"/><polygon points="365.3,708.4 365.6,708.8 365.9,709.2 366.3,709.8 366.7,710.4 367.2,711.0 367.7,711.6 368.2,712.4 368.8,713.0 369.3,713.7 369.9,714.3 370.3,714.8 370.8,715.3 371.2,715.8 371.7,716.3 372.2,716.8 372.9,717.4 373.6,718.0 374.4,718.5 375.3,719.1 376.4,719.6 377.5,720.1 378.8,720.6 380.3,721.1 381.8,721.6 383.4,722.1 385.0,722.6 386.7,723.0 388.4,723.4 390.0,723.7 391.6,723.8 393.0,723.9 394.5,723.8 395.9,723.7 397.4,723.6 398.8,723.3 400.1,723.0 401.5,722.6 402.8,722.2 404.2,721.7 405.5,721.2 406.8,720.5 408.2,719.7 409.5,718.9 410.8,717.9 412.0,717.0 413.2,716.0 414.4,715.0 415.5,714.1 416.4,713.2 417.3,712.4 418.1,711.6 418.9,710.7 419.6,709.9 420.1,709.1 420.6,708.3 421.1,707.6 421.4,706.9 421.8,706.4 422.0,705.9 422.2,705.6 419.6,703.8 419.4,704.2 419.0,704.7 418.7,705.2 418.3,705.8 417.9,706.5 417.4,707.1 416.9,707.8 416.3,708.5 415.7,709.2 414.9,709.8 414.1,710.6 413.1,711.4 412.1,712.3 411.0,713.1 409.8,714.0 408.6,714.9 407.4,715.7 406.2,716.4 405.0,717.1 403.9,717.6 402.7,718.1 401.6,718.5 400.4,718.8 399.2,719.2 398.0,719.4 396.8,719.6 395.6,719.7 394.3,719.8 393.1,719.8 391.8,719.8 390.5,719.7 389.1,719.4 387.6,719.1 386.1,718.8 384.5,718.3 383.0,717.9 381.6,717.4 380.2,716.9 379.0,716.4 377.9,716.0 377.0,715.6 376.2,715.3 375.6,714.9 375.1,714.6 374.5,714.2 374.1,713.8 373.6,713.4 373.1,712.9 372.5,712.4 371.9,712.0 371.3,711.5 370.7,711.0 370.1,710.5 369.3,710.1 368.7,709.5 368.1,709.0 367.6,708.5 367.1,708.1 366.7,707.7 366.3,707.5" fill="#dde1d3"/><polygon points="365.5,708.3 365.8,708.6 366.1,709.0 366.5,709.5 367.0,710.1 367.5,710.7 368.0,711.3 368.5,712.0 369.1,712.7 369.7,713.3 370.2,713.9 370.7,714.4 371.2,714.8 371.6,715.3 372.1,715.8 372.7,716.4 373.3,716.9 373.9,717.4 374.7,717.9 375.6,718.4 376.6,718.9 377.8,719.4 379.1,719.9 380.5,720.4 382.0,721.0 383.6,721.5 385.2,721.9 386.9,722.3 388.5,722.7 390.1,723.0 391.6,723.1 393.0,723.1 394.5,723.1 395.9,723.0 397.3,722.8 398.6,722.6 400.0,722.3 401.3,722.0 402.6,721.5 403.9,721.1 405.2,720.5 406.5,719.9 407.8,719.1 409.1,718.3 410.4,717.4 411.6,716.4 412.8,715.5 414.0,714.5 415.0,713.6 416.0,712.8 416.9,712.0 417.7,711.2 418.4,710.3 419.1,709.5 419.6,708.7 420.1,708.0 420.6,707.3 420.9,706.6 421.3,706.1 421.5,705.6 421.8,705.3 420.1,704.1 419.8,704.5 419.5,705.0 419.2,705.5 418.8,706.1 418.4,706.8 417.9,707.5 417.4,708.2 416.8,708.9 416.1,709.6 415.4,710.3 414.5,711.1 413.5,711.9 412.5,712.8 411.4,713.7 410.2,714.6 409.0,715.4 407.8,716.3 406.6,717.0 405.3,717.7 404.2,718.2 403.0,718.7 401.8,719.2 400.6,719.5 399.4,719.8 398.1,720.1 396.9,720.3 395.6,720.5 394.4,720.5 393.1,720.6 391.8,720.5 390.4,720.4 389.0,720.2 387.4,719.8 385.9,719.5 384.3,719.0 382.8,718.5 381.3,718.0 380.0,717.5 378.7,717.1 377.6,716.6 376.7,716.2 375.9,715.9 375.2,715.5 374.7,715.1 374.1,714.7 373.6,714.2 373.1,713.8 372.7,713.3 372.1,712.9 371.6,712.4 371.0,711.9 370.4,711.4 369.7,710.8 369.1,710.3 368.5,709.8 367.9,709.2 367.4,708.7 366.9,708.3 366.5,707.9 366.2,707.6" fill="#f1f3ea"/>
<circle cx="301.4" cy="425.6" r="11.5" fill="none" stroke="#e9ece1" stroke-width="5.0"/>
<circle cx="301.4" cy="425.6" r="9.0" fill="#5d5f58"/>
<path d="M295.0 419.2L295.0 419.2M295.0 432.0L295.0 432.0M300.6 416.6L292.4 424.8M292.4 426.4L300.6 434.6M303.4 416.8L292.6 427.6M292.6 423.6L303.4 434.4M305.6 417.6L293.4 429.8M293.4 421.4L305.6 433.6M307.3 418.8L294.6 431.5M294.6 419.7L307.3 432.4M308.7 420.4L296.2 432.9M296.2 418.3L308.7 430.8M309.8 422.3L298.1 434.0M298.1 417.2L309.8 428.9M310.4 424.7L300.5 434.6M300.5 416.6L310.4 426.5M310.1 427.9L303.7 434.3M303.7 416.9L310.1 423.3" stroke="#eef0e6" stroke-width="0.9" fill="none"/>
<ellipse cx="482.3" cy="208.9" rx="4.6" ry="8.3" transform="rotate(-20 482.3 208.9)" fill="#dfe3d5"/>
<ellipse cx="482.0" cy="208.9" rx="2.8" ry="6.3" transform="rotate(-20 482.3 208.9)" fill="#f3f5ec"/></g>
</svg>
</body></html>
